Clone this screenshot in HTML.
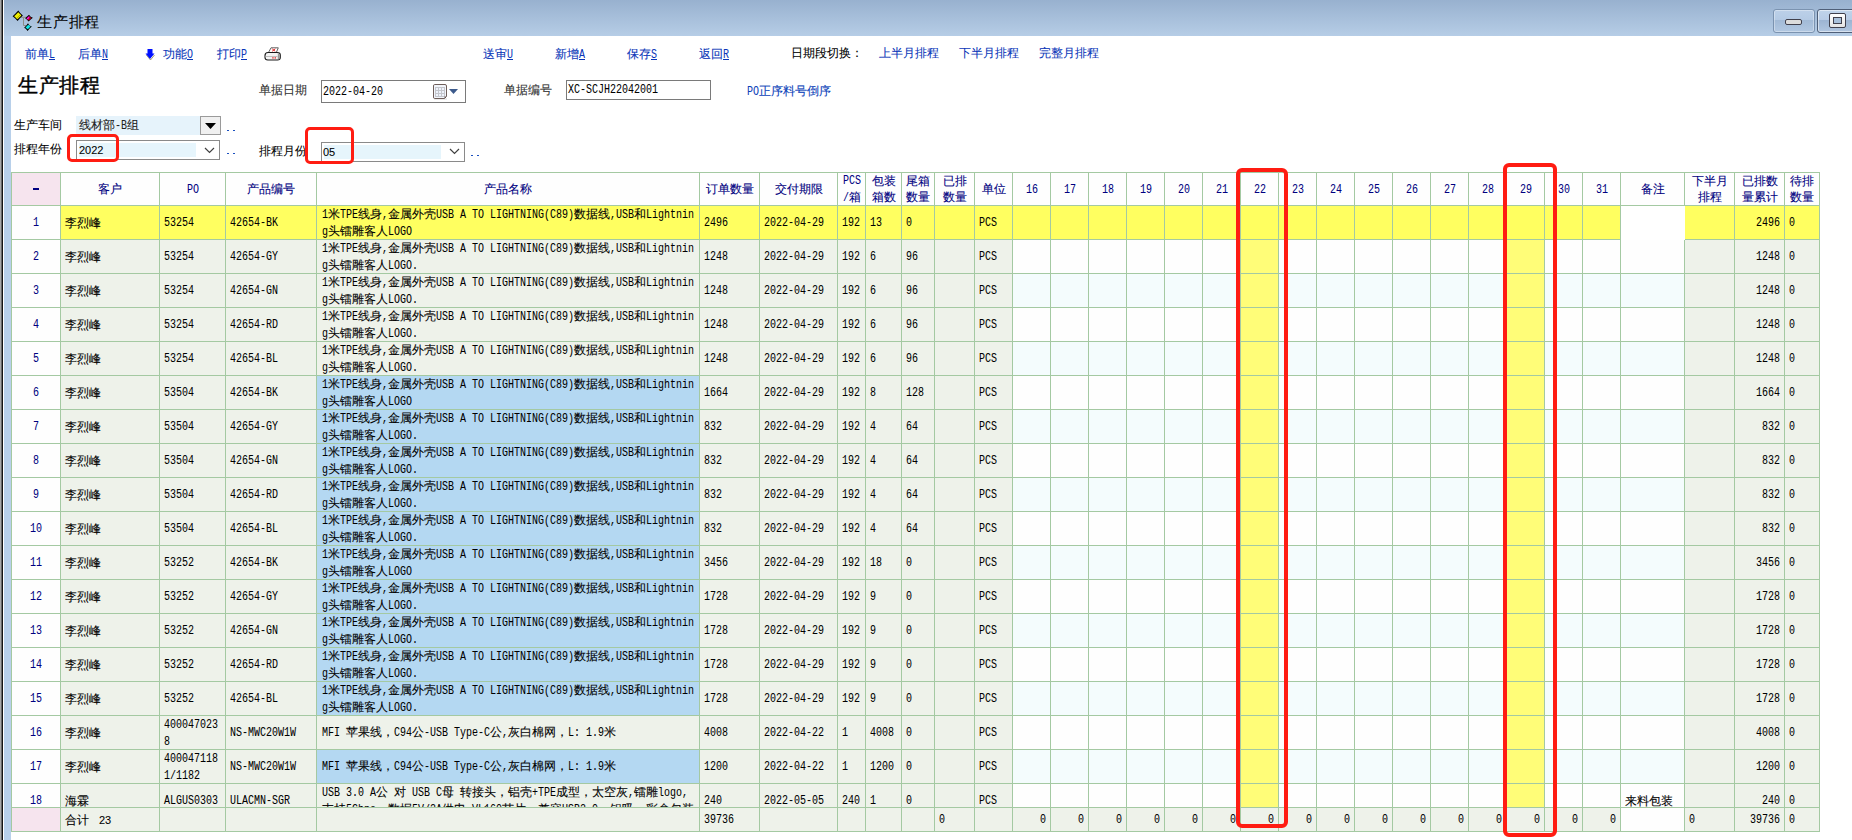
<!DOCTYPE html><html><head><meta charset="utf-8"><style>
*{margin:0;padding:0;box-sizing:border-box}
html,body{width:1852px;height:840px;overflow:hidden;background:#fff}
body{position:relative;font-family:"Liberation Sans",sans-serif;font-size:12px;color:#000}
.a{position:absolute}
i{font-style:normal}
i.n{font-family:"Liberation Mono",monospace;font-size:11px;letter-spacing:-0.6px}
u{text-decoration:none;font-size:12px}
b{font-weight:normal;display:inline-block;white-space:nowrap}
b>s{text-decoration:none;display:inline-block;font-family:"Liberation Mono",monospace;font-size:12px;transform:scaleX(0.8333);transform-origin:0 0;-webkit-text-stroke:0.05px currentColor}
i.ns{}
body{-webkit-text-stroke:0.08px currentColor}
u{-webkit-text-stroke:0.1px currentColor}
</style></head><body><div class="a" style="left:0;top:0;width:1px;height:840px;background:#a8a8a8"></div>
<div class="a" style="left:1px;top:0;width:1px;height:840px;background:#686868"></div>
<div class="a" style="left:2px;top:0;width:1px;height:840px;background:#141414"></div>
<div class="a" style="left:3px;top:0;width:1px;height:840px;background:#fff"></div>
<div class="a" style="left:4px;top:0;width:1848px;height:840px;background:#b8d0ea"></div>
<div class="a" style="left:4px;top:0;width:1848px;height:36px;background:linear-gradient(#98b1cf,#b6cde6)"></div>
<div class="a" style="left:11px;top:36px;width:1841px;height:804px;background:#fff"></div>
<svg class="a" style="left:10px;top:8px" width="26" height="26" viewBox="0 0 26 26">
<path d="M10.5 9.3 H17.3 M13.5 9.3 V17.5 H16" stroke="#8c8c88" stroke-width="1" fill="none"/>
<path d="M8.3 2.6 L10.2 5 L12.9 7.6 L10.2 10 L7.6 12.9 L5 10.2 L2.6 8.3 L5 6 Z" fill="#000"/>
<path d="M8.3 4.2 L11.3 7.5 L7.5 11.3 L4.2 8.3 Z" fill="#f0f000"/>
<path d="M6.5 10.5 L10.5 6.5" stroke="#a8a000" stroke-width="0.8"/>
<path d="M19 6.8 L20.7 8.7 L22.9 9.8 L20.7 11.5 L18.6 13.6 L16.8 11.6 L15.1 10.3 L17 8.6 Z" fill="#000"/>
<path d="M19 8.2 L21.3 10 L18.8 12.4 L16.5 10.4 Z" fill="#c00018"/>
<path d="M19 8.2 L16.5 10.4 L18 11.5 L19.6 8.8 Z" fill="#ff10ff"/>
<path d="M18 15.2 L19.4 17.6 L21.9 18.5 L19.6 20.4 L17.6 22.9 L15.8 20.7 L14.1 19.7 L16.3 17.6 Z" fill="#000"/>
<path d="M18.2 16.8 L20.6 18.6 L17.8 21.3 L15.5 19.6 Z" fill="#10e8e8"/>
</svg>
<div class="a" style="left:37px;top:13px;font-size:15px;letter-spacing:0.8px;line-height:18px;color:#000">生产排程</div>
<div class="a" style="left:1773px;top:9px;width:42px;height:24px;border:1px solid #7b93b0;border-radius:3px;background:linear-gradient(#bcd0e8 0,#b4cae4 45%,#a2bad6 46%,#b2c8e2 100%);box-shadow:inset 0 0 0 1px rgba(255,255,255,.35)"></div>
<div class="a" style="left:1785px;top:19px;width:17px;height:6px;border:1px solid #40404c;border-radius:2px;background:#dcdcdc"></div>
<div class="a" style="left:1817px;top:9px;width:40px;height:24px;border:1px solid #4f5f78;border-radius:3px;background:linear-gradient(#c0d4ea 0,#b8cce6 45%,#9cb4d2 46%,#b0c6e0 100%);box-shadow:inset 0 0 0 1px rgba(255,255,255,.5)"></div>
<div class="a" style="left:1829px;top:13px;width:17px;height:15px;border:1px solid #40404c;border-radius:2px;background:linear-gradient(#fff,#e4e4e4)"></div>
<div class="a" style="left:1833px;top:17px;width:9px;height:7px;border:1px solid #40404c;background:#a8c0da"></div>
<div class="a" style="left:25px;top:47px;line-height:14px;color:#0a36b8;white-space:nowrap"><u>前单</u><b style="width:6px"><s style="text-decoration:underline">L</s></b></div>
<div class="a" style="left:78px;top:47px;line-height:14px;color:#0a36b8;white-space:nowrap"><u>后单</u><b style="width:6px"><s style="text-decoration:underline">N</s></b></div>
<div class="a" style="left:163px;top:47px;line-height:14px;color:#0a36b8;white-space:nowrap"><u>功能</u><b style="width:6px"><s style="text-decoration:underline">O</s></b></div>
<div class="a" style="left:217px;top:47px;line-height:14px;color:#0a36b8;white-space:nowrap"><u>打印</u><b style="width:6px"><s style="text-decoration:underline">P</s></b></div>
<div class="a" style="left:483px;top:47px;line-height:14px;color:#0a36b8;white-space:nowrap"><u>送审</u><b style="width:6px"><s style="text-decoration:underline">U</s></b></div>
<div class="a" style="left:555px;top:47px;line-height:14px;color:#0a36b8;white-space:nowrap"><u>新增</u><b style="width:6px"><s style="text-decoration:underline">A</s></b></div>
<div class="a" style="left:627px;top:47px;line-height:14px;color:#0a36b8;white-space:nowrap"><u>保存</u><b style="width:6px"><s style="text-decoration:underline">S</s></b></div>
<div class="a" style="left:699px;top:47px;line-height:14px;color:#0a36b8;white-space:nowrap"><u>返回</u><b style="width:6px"><s style="text-decoration:underline">R</s></b></div>
<svg class="a" style="left:144px;top:48px" width="12" height="13" viewBox="0 0 12 13"><path d="M2.2 6.8 L6.5 12 L10.5 7" fill="none" stroke="#807840" stroke-width="1" opacity="0.7"/><path d="M3.5 1 H8.5 V5.5 H10.5 L6 11 L1.5 5.5 H3.5 Z" fill="#0010ff"/></svg>
<svg class="a" style="left:264px;top:47px" width="17" height="14" viewBox="0 0 17 14">
<path d="M4.5 5.5 L7 0.8 L14.3 0.8 L12.3 5.5 Z" fill="#fff" stroke="#505050" stroke-width="0.9"/>
<path d="M8.2 1.8 L11.2 4.3 M11.3 1.8 L8.1 4.3" stroke="#e01010" stroke-width="0.9"/>
<path d="M1 8.5 Q1 5.5 4 5.5 L13.5 5.5 Q16.3 5.5 16.3 8 L16.3 10.5 Q16.3 13 13.5 13 L3.8 13 Q1 13 1 10.5 Z" fill="#f4f4f4" stroke="#1a1a1a" stroke-width="1.1"/>
<path d="M13.8 6 Q15.8 6.5 15.8 8.5 V11 Q15.5 12.5 13.8 12.5 Z" fill="#9a9a9a"/>
<path d="M1.5 9.5 H13.5" stroke="#b0b0b0" stroke-width="0.8"/>
<rect x="8.3" y="10.3" width="1.3" height="1.2" fill="#e00000"/><rect x="10.6" y="10.3" width="1.3" height="1.2" fill="#e00000"/>
</svg>
<div class="a" style="left:791px;top:46px;line-height:14px;color:#000">日期段切换：</div>
<div class="a" style="left:879px;top:46px;line-height:14px;color:#0a36b8">上半月排程</div>
<div class="a" style="left:959px;top:46px;line-height:14px;color:#0a36b8">下半月排程</div>
<div class="a" style="left:1039px;top:46px;line-height:14px;color:#0a36b8">完整月排程</div>
<div class="a" style="left:18px;top:73px;font-size:20px;line-height:24px;letter-spacing:0.6px;font-weight:500;color:#000;font-family:'Liberation Serif',serif;-webkit-text-stroke:0.45px #000">生产排程</div>
<div class="a" style="left:259px;top:83px;line-height:14px;color:#303030">单据日期</div>
<div class="a" style="left:321px;top:80px;width:145px;height:23px;border:1px solid #7a7a7a;background:#fff"></div>
<div class="a" style="left:323px;top:84px;line-height:14px"><b style="width:60px"><s>2022-04-20</s></b></div>
<svg class="a" style="left:432px;top:84px" width="28" height="17" viewBox="0 0 28 17">
<rect x="2" y="14" width="13" height="2" fill="#000" opacity="0.08"/>
<path d="M2.5 0.5 H13 Q14.5 0.5 14.5 2 V12.5 L12.5 14.5 H2.5 Q1.5 14.5 1.5 13 V2 Q1.5 0.5 2.5 0.5 Z" fill="#f2f5fb" stroke="#6e5e5a" stroke-width="1"/>
<rect x="3" y="3" width="10" height="10" fill="#c4c6cc"/>
<path d="M4 4h2v2h-2z M7 4h2v2h-2z M10 4h2v2h-2z M4 7h2v2h-2z M7 7h2v2h-2z M10 7h2v2h-2z M4 10h2v2h-2z M7 10h2v2h-2z M10 10h2v2h-2z" fill="#eef2fb"/>
<path d="M12.5 14.5 L12.5 12.5 L14.5 12.5 Z" fill="#5a4a48"/>
<path d="M17 5 H26 L21.5 10 Z" fill="#3c5a8c"/>
</svg>
<div class="a" style="left:504px;top:83px;line-height:14px;color:#303030">单据编号</div>
<div class="a" style="left:566px;top:80px;width:145px;height:20px;border:1px solid #7a7a7a;background:#fff"></div>
<div class="a" style="left:568px;top:82px;line-height:14px"><b style="width:90px"><s>XC-SCJH22042001</s></b></div>
<div class="a" style="left:747px;top:84px;line-height:14px;color:#0a40b8"><b style="width:12px"><s>PO</s></b><u>正序料号倒序</u></div>
<div class="a" style="left:14px;top:118px;line-height:14px">生产车间</div>
<div class="a" style="left:76px;top:116px;width:124px;height:19px;background:#e6f3fb"></div>
<div class="a" style="left:79px;top:118px;line-height:14px;color:#202020"><u>线材部</u><b style="width:12px"><s>-B</s></b><u>组</u></div>
<div class="a" style="left:200px;top:116px;width:21px;height:19px;border:1px solid #9a9a9a;background:#f0f0f0"></div>
<svg class="a" style="left:205px;top:123px" width="11" height="6" viewBox="0 0 11 6"><path d="M0 0 H11 L5.5 6 Z" fill="#000"/></svg>
<div class="a" style="left:227px;top:130px;width:2px;height:1px;background:#1a50c0"></div><div class="a" style="left:233px;top:130px;width:2px;height:1px;background:#1a50c0"></div>
<div class="a" style="left:14px;top:142px;line-height:14px">排程年份</div>
<div class="a" style="left:76px;top:140px;width:144px;height:20px;border:1px solid #8a8a8a;background:#fff"></div>
<div class="a" style="left:79px;top:143px;width:117px;height:14px;background:#e6f5fc"></div>
<div class="a" style="left:79px;top:143px;line-height:14px;font-size:11px"><i class="ns">2022</i></div>
<svg class="a" style="left:204px;top:147px" width="11" height="7" viewBox="0 0 11 7"><path d="M1 1 L5.5 5.5 L10 1" fill="none" stroke="#404040" stroke-width="1.2"/></svg>
<div class="a" style="left:227px;top:153px;width:2px;height:1px;background:#1a50c0"></div><div class="a" style="left:233px;top:153px;width:2px;height:1px;background:#1a50c0"></div>
<div class="a" style="left:259px;top:144px;line-height:14px">排程月份</div>
<div class="a" style="left:321px;top:142px;width:144px;height:20px;border:1px solid #8a8a8a;background:#fff"></div>
<div class="a" style="left:324px;top:145px;width:117px;height:14px;background:#e6f5fc"></div>
<div class="a" style="left:323px;top:145px;line-height:14px;font-size:11px"><i class="ns">05</i></div>
<svg class="a" style="left:449px;top:148px" width="11" height="7" viewBox="0 0 11 7"><path d="M1 1 L5.5 5.5 L10 1" fill="none" stroke="#404040" stroke-width="1.2"/></svg>
<div class="a" style="left:471px;top:155px;width:2px;height:1px;background:#1a50c0"></div><div class="a" style="left:477px;top:155px;width:2px;height:1px;background:#1a50c0"></div>
<div class="a" style="left:11px;top:172px;width:1809px;height:660px;background:#a4c9a2"></div>
<div class="a" style="left:12px;top:173px;width:48px;height:32px;background:#f6e4ee;overflow:hidden"><div style="height:32px;display:flex;align-items:center;justify-content:center;color:#000080;line-height:16px;padding:0 4px;white-space:nowrap;padding:0"><div style="width:6px;height:2px;background:#000080;margin-top:0px"></div></div></div>
<div class="a" style="left:61px;top:173px;width:98px;height:32px;background:#fefefe;overflow:hidden"><div style="height:32px;display:flex;align-items:center;justify-content:center;color:#000080;line-height:16px;padding:0 4px;white-space:nowrap;padding:0"><u>客户</u></div></div>
<div class="a" style="left:160px;top:173px;width:65px;height:32px;background:#fefefe;overflow:hidden"><div style="height:32px;display:flex;align-items:center;justify-content:center;color:#000080;line-height:16px;padding:0 4px;white-space:nowrap;padding:0"><b style="width:12px"><s>PO</s></b></div></div>
<div class="a" style="left:226px;top:173px;width:90px;height:32px;background:#fefefe;overflow:hidden"><div style="height:32px;display:flex;align-items:center;justify-content:center;color:#000080;line-height:16px;padding:0 4px;white-space:nowrap;padding:0"><u>产品编号</u></div></div>
<div class="a" style="left:317px;top:173px;width:382px;height:32px;background:#fefefe;overflow:hidden"><div style="height:32px;display:flex;align-items:center;justify-content:center;color:#000080;line-height:16px;padding:0 4px;white-space:nowrap;padding:0"><u>产品名称</u></div></div>
<div class="a" style="left:700px;top:173px;width:59px;height:32px;background:#fefefe;overflow:hidden"><div style="height:32px;display:flex;align-items:center;justify-content:center;color:#000080;line-height:16px;padding:0 4px;white-space:nowrap;padding:0"><u>订单数量</u></div></div>
<div class="a" style="left:760px;top:173px;width:77px;height:32px;background:#fefefe;overflow:hidden"><div style="height:32px;display:flex;align-items:center;justify-content:center;color:#000080;line-height:16px;padding:0 4px;white-space:nowrap;padding:0"><u>交付期限</u></div></div>
<div class="a" style="left:838px;top:173px;width:27px;height:32px;background:#fefefe;overflow:hidden"><div style="height:32px;display:flex;align-items:center;justify-content:center;color:#000080;line-height:16px;padding:0 4px;white-space:nowrap;padding:0"><div style="text-align:center"><b style="width:18px"><s>PCS</s></b><br><b style="width:6px"><s>/</s></b><u>箱</u></div></div></div>
<div class="a" style="left:866px;top:173px;width:35px;height:32px;background:#fefefe;overflow:hidden"><div style="height:32px;display:flex;align-items:center;justify-content:center;color:#000080;line-height:16px;padding:0 4px;white-space:nowrap;padding:0"><div style="text-align:center"><u>包装</u><br><u>箱数</u></div></div></div>
<div class="a" style="left:902px;top:173px;width:32px;height:32px;background:#fefefe;overflow:hidden"><div style="height:32px;display:flex;align-items:center;justify-content:center;color:#000080;line-height:16px;padding:0 4px;white-space:nowrap;padding:0"><div style="text-align:center"><u>尾箱</u><br><u>数量</u></div></div></div>
<div class="a" style="left:935px;top:173px;width:39px;height:32px;background:#fefefe;overflow:hidden"><div style="height:32px;display:flex;align-items:center;justify-content:center;color:#000080;line-height:16px;padding:0 4px;white-space:nowrap;padding:0"><div style="text-align:center"><u>已排</u><br><u>数量</u></div></div></div>
<div class="a" style="left:975px;top:173px;width:37px;height:32px;background:#fefefe;overflow:hidden"><div style="height:32px;display:flex;align-items:center;justify-content:center;color:#000080;line-height:16px;padding:0 4px;white-space:nowrap;padding:0"><u>单位</u></div></div>
<div class="a" style="left:1013px;top:173px;width:37px;height:32px;background:#fefefe;overflow:hidden"><div style="height:32px;display:flex;align-items:center;justify-content:center;color:#000080;line-height:16px;padding:0 4px;white-space:nowrap;padding:0"><b style="width:12px"><s>16</s></b></div></div>
<div class="a" style="left:1051px;top:173px;width:37px;height:32px;background:#fefefe;overflow:hidden"><div style="height:32px;display:flex;align-items:center;justify-content:center;color:#000080;line-height:16px;padding:0 4px;white-space:nowrap;padding:0"><b style="width:12px"><s>17</s></b></div></div>
<div class="a" style="left:1089px;top:173px;width:37px;height:32px;background:#fefefe;overflow:hidden"><div style="height:32px;display:flex;align-items:center;justify-content:center;color:#000080;line-height:16px;padding:0 4px;white-space:nowrap;padding:0"><b style="width:12px"><s>18</s></b></div></div>
<div class="a" style="left:1127px;top:173px;width:37px;height:32px;background:#fefefe;overflow:hidden"><div style="height:32px;display:flex;align-items:center;justify-content:center;color:#000080;line-height:16px;padding:0 4px;white-space:nowrap;padding:0"><b style="width:12px"><s>19</s></b></div></div>
<div class="a" style="left:1165px;top:173px;width:37px;height:32px;background:#fefefe;overflow:hidden"><div style="height:32px;display:flex;align-items:center;justify-content:center;color:#000080;line-height:16px;padding:0 4px;white-space:nowrap;padding:0"><b style="width:12px"><s>20</s></b></div></div>
<div class="a" style="left:1203px;top:173px;width:37px;height:32px;background:#fefefe;overflow:hidden"><div style="height:32px;display:flex;align-items:center;justify-content:center;color:#000080;line-height:16px;padding:0 4px;white-space:nowrap;padding:0"><b style="width:12px"><s>21</s></b></div></div>
<div class="a" style="left:1241px;top:173px;width:37px;height:32px;background:#fefefe;overflow:hidden"><div style="height:32px;display:flex;align-items:center;justify-content:center;color:#000080;line-height:16px;padding:0 4px;white-space:nowrap;padding:0"><b style="width:12px"><s>22</s></b></div></div>
<div class="a" style="left:1279px;top:173px;width:37px;height:32px;background:#fefefe;overflow:hidden"><div style="height:32px;display:flex;align-items:center;justify-content:center;color:#000080;line-height:16px;padding:0 4px;white-space:nowrap;padding:0"><b style="width:12px"><s>23</s></b></div></div>
<div class="a" style="left:1317px;top:173px;width:37px;height:32px;background:#fefefe;overflow:hidden"><div style="height:32px;display:flex;align-items:center;justify-content:center;color:#000080;line-height:16px;padding:0 4px;white-space:nowrap;padding:0"><b style="width:12px"><s>24</s></b></div></div>
<div class="a" style="left:1355px;top:173px;width:37px;height:32px;background:#fefefe;overflow:hidden"><div style="height:32px;display:flex;align-items:center;justify-content:center;color:#000080;line-height:16px;padding:0 4px;white-space:nowrap;padding:0"><b style="width:12px"><s>25</s></b></div></div>
<div class="a" style="left:1393px;top:173px;width:37px;height:32px;background:#fefefe;overflow:hidden"><div style="height:32px;display:flex;align-items:center;justify-content:center;color:#000080;line-height:16px;padding:0 4px;white-space:nowrap;padding:0"><b style="width:12px"><s>26</s></b></div></div>
<div class="a" style="left:1431px;top:173px;width:37px;height:32px;background:#fefefe;overflow:hidden"><div style="height:32px;display:flex;align-items:center;justify-content:center;color:#000080;line-height:16px;padding:0 4px;white-space:nowrap;padding:0"><b style="width:12px"><s>27</s></b></div></div>
<div class="a" style="left:1469px;top:173px;width:37px;height:32px;background:#fefefe;overflow:hidden"><div style="height:32px;display:flex;align-items:center;justify-content:center;color:#000080;line-height:16px;padding:0 4px;white-space:nowrap;padding:0"><b style="width:12px"><s>28</s></b></div></div>
<div class="a" style="left:1507px;top:173px;width:37px;height:32px;background:#fefefe;overflow:hidden"><div style="height:32px;display:flex;align-items:center;justify-content:center;color:#000080;line-height:16px;padding:0 4px;white-space:nowrap;padding:0"><b style="width:12px"><s>29</s></b></div></div>
<div class="a" style="left:1545px;top:173px;width:37px;height:32px;background:#fefefe;overflow:hidden"><div style="height:32px;display:flex;align-items:center;justify-content:center;color:#000080;line-height:16px;padding:0 4px;white-space:nowrap;padding:0"><b style="width:12px"><s>30</s></b></div></div>
<div class="a" style="left:1583px;top:173px;width:37px;height:32px;background:#fefefe;overflow:hidden"><div style="height:32px;display:flex;align-items:center;justify-content:center;color:#000080;line-height:16px;padding:0 4px;white-space:nowrap;padding:0"><b style="width:12px"><s>31</s></b></div></div>
<div class="a" style="left:1621px;top:173px;width:63px;height:32px;background:#fefefe;overflow:hidden"><div style="height:32px;display:flex;align-items:center;justify-content:center;color:#000080;line-height:16px;padding:0 4px;white-space:nowrap;padding:0"><u>备注</u></div></div>
<div class="a" style="left:1685px;top:173px;width:49px;height:32px;background:#fefefe;overflow:hidden"><div style="height:32px;display:flex;align-items:center;justify-content:center;color:#000080;line-height:16px;padding:0 4px;white-space:nowrap;padding:0"><div style="text-align:center"><u>下半月</u><br><u>排程</u></div></div></div>
<div class="a" style="left:1735px;top:173px;width:49px;height:32px;background:#fefefe;overflow:hidden"><div style="height:32px;display:flex;align-items:center;justify-content:center;color:#000080;line-height:16px;padding:0 4px;white-space:nowrap;padding:0"><div style="text-align:center"><u>已排数</u><br><u>量累计</u></div></div></div>
<div class="a" style="left:1785px;top:173px;width:34px;height:32px;background:#fefefe;overflow:hidden"><div style="height:32px;display:flex;align-items:center;justify-content:center;color:#000080;line-height:16px;padding:0 4px;white-space:nowrap;padding:0"><div style="text-align:center"><u>待排</u><br><u>数量</u></div></div></div>
<div class="a" style="left:12px;top:206px;width:48px;height:33px;background:#fefefe;overflow:hidden"><div style="height:33px;display:flex;align-items:center;justify-content:center;color:#000080;line-height:16px;padding:0 4px;white-space:nowrap;"><b style="width:6px"><s>1</s></b></div></div>
<div class="a" style="left:61px;top:206px;width:98px;height:33px;background:#ffff60;overflow:hidden"><div style="height:33px;display:flex;align-items:center;justify-content:flex-start;color:#000;line-height:16px;padding:0 4px;white-space:nowrap;"><u>李烈峰</u></div></div>
<div class="a" style="left:160px;top:206px;width:65px;height:33px;background:#ffff60;overflow:hidden"><div style="height:33px;display:flex;align-items:center;justify-content:flex-start;color:#000;line-height:16px;padding:0 4px;white-space:nowrap;"><div><b style="width:30px"><s>53254</s></b></div></div></div>
<div class="a" style="left:226px;top:206px;width:90px;height:33px;background:#ffff60;overflow:hidden"><div style="height:33px;display:flex;align-items:center;justify-content:flex-start;color:#000;line-height:16px;padding:0 4px;white-space:nowrap;"><b style="width:48px"><s>42654-BK</s></b></div></div>
<div class="a" style="left:317px;top:206px;width:382px;height:33px;background:#ffff60;overflow:hidden"><div style="height:33px;display:flex;align-items:center;justify-content:flex-start;color:#000;line-height:16px;padding:0 4px;white-space:nowrap;padding-left:5px"><div><b style="width:6px"><s>1</s></b><u>米</u><b style="width:18px"><s>TPE</s></b><u>线身</u><b style="width:6px"><s>,</s></b><u>金属外壳</u><b style="width:138px"><s>USB&nbsp;A&nbsp;TO&nbsp;LIGHTNING(C89)</s></b><u>数据线</u><b style="width:24px"><s>,USB</s></b><u>和</u><b style="width:48px"><s>Lightnin</s></b><br><b style="width:6px"><s>g</s></b><u>头镭雕客人</u><b style="width:24px"><s>LOGO</s></b></div></div></div>
<div class="a" style="left:700px;top:206px;width:59px;height:33px;background:#ffff60;overflow:hidden"><div style="height:33px;display:flex;align-items:center;justify-content:flex-start;color:#000;line-height:16px;padding:0 4px;white-space:nowrap;"><b style="width:24px"><s>2496</s></b></div></div>
<div class="a" style="left:760px;top:206px;width:77px;height:33px;background:#ffff60;overflow:hidden"><div style="height:33px;display:flex;align-items:center;justify-content:flex-start;color:#000;line-height:16px;padding:0 4px;white-space:nowrap;"><b style="width:60px"><s>2022-04-29</s></b></div></div>
<div class="a" style="left:838px;top:206px;width:27px;height:33px;background:#ffff60;overflow:hidden"><div style="height:33px;display:flex;align-items:center;justify-content:flex-start;color:#000;line-height:16px;padding:0 4px;white-space:nowrap;"><b style="width:18px"><s>192</s></b></div></div>
<div class="a" style="left:866px;top:206px;width:35px;height:33px;background:#ffff60;overflow:hidden"><div style="height:33px;display:flex;align-items:center;justify-content:flex-start;color:#000;line-height:16px;padding:0 4px;white-space:nowrap;"><b style="width:12px"><s>13</s></b></div></div>
<div class="a" style="left:902px;top:206px;width:32px;height:33px;background:#ffff60;overflow:hidden"><div style="height:33px;display:flex;align-items:center;justify-content:flex-start;color:#000;line-height:16px;padding:0 4px;white-space:nowrap;"><b style="width:6px"><s>0</s></b></div></div>
<div class="a" style="left:935px;top:206px;width:39px;height:33px;background:#ffff60;overflow:hidden"><div style="height:33px;display:flex;align-items:center;justify-content:flex-start;color:#000;line-height:16px;padding:0 4px;white-space:nowrap;"></div></div>
<div class="a" style="left:975px;top:206px;width:37px;height:33px;background:#ffff60;overflow:hidden"><div style="height:33px;display:flex;align-items:center;justify-content:flex-start;color:#000;line-height:16px;padding:0 4px;white-space:nowrap;"><b style="width:18px"><s>PCS</s></b></div></div>
<div class="a" style="left:1013px;top:206px;width:37px;height:33px;background:#ffff60;overflow:hidden"><div style="height:33px;display:flex;align-items:center;justify-content:flex-start;color:#000;line-height:16px;padding:0 4px;white-space:nowrap;"></div></div>
<div class="a" style="left:1051px;top:206px;width:37px;height:33px;background:#ffff60;overflow:hidden"><div style="height:33px;display:flex;align-items:center;justify-content:flex-start;color:#000;line-height:16px;padding:0 4px;white-space:nowrap;"></div></div>
<div class="a" style="left:1089px;top:206px;width:37px;height:33px;background:#ffff60;overflow:hidden"><div style="height:33px;display:flex;align-items:center;justify-content:flex-start;color:#000;line-height:16px;padding:0 4px;white-space:nowrap;"></div></div>
<div class="a" style="left:1127px;top:206px;width:37px;height:33px;background:#ffff60;overflow:hidden"><div style="height:33px;display:flex;align-items:center;justify-content:flex-start;color:#000;line-height:16px;padding:0 4px;white-space:nowrap;"></div></div>
<div class="a" style="left:1165px;top:206px;width:37px;height:33px;background:#ffff60;overflow:hidden"><div style="height:33px;display:flex;align-items:center;justify-content:flex-start;color:#000;line-height:16px;padding:0 4px;white-space:nowrap;"></div></div>
<div class="a" style="left:1203px;top:206px;width:37px;height:33px;background:#ffff60;overflow:hidden"><div style="height:33px;display:flex;align-items:center;justify-content:flex-start;color:#000;line-height:16px;padding:0 4px;white-space:nowrap;"></div></div>
<div class="a" style="left:1241px;top:206px;width:37px;height:33px;background:#ffff60;overflow:hidden"><div style="height:33px;display:flex;align-items:center;justify-content:flex-start;color:#000;line-height:16px;padding:0 4px;white-space:nowrap;"></div></div>
<div class="a" style="left:1279px;top:206px;width:37px;height:33px;background:#ffff60;overflow:hidden"><div style="height:33px;display:flex;align-items:center;justify-content:flex-start;color:#000;line-height:16px;padding:0 4px;white-space:nowrap;"></div></div>
<div class="a" style="left:1317px;top:206px;width:37px;height:33px;background:#ffff60;overflow:hidden"><div style="height:33px;display:flex;align-items:center;justify-content:flex-start;color:#000;line-height:16px;padding:0 4px;white-space:nowrap;"></div></div>
<div class="a" style="left:1355px;top:206px;width:37px;height:33px;background:#ffff60;overflow:hidden"><div style="height:33px;display:flex;align-items:center;justify-content:flex-start;color:#000;line-height:16px;padding:0 4px;white-space:nowrap;"></div></div>
<div class="a" style="left:1393px;top:206px;width:37px;height:33px;background:#ffff60;overflow:hidden"><div style="height:33px;display:flex;align-items:center;justify-content:flex-start;color:#000;line-height:16px;padding:0 4px;white-space:nowrap;"></div></div>
<div class="a" style="left:1431px;top:206px;width:37px;height:33px;background:#ffff60;overflow:hidden"><div style="height:33px;display:flex;align-items:center;justify-content:flex-start;color:#000;line-height:16px;padding:0 4px;white-space:nowrap;"></div></div>
<div class="a" style="left:1469px;top:206px;width:37px;height:33px;background:#ffff60;overflow:hidden"><div style="height:33px;display:flex;align-items:center;justify-content:flex-start;color:#000;line-height:16px;padding:0 4px;white-space:nowrap;"></div></div>
<div class="a" style="left:1507px;top:206px;width:37px;height:33px;background:#ffff60;overflow:hidden"><div style="height:33px;display:flex;align-items:center;justify-content:flex-start;color:#000;line-height:16px;padding:0 4px;white-space:nowrap;"></div></div>
<div class="a" style="left:1545px;top:206px;width:37px;height:33px;background:#ffff60;overflow:hidden"><div style="height:33px;display:flex;align-items:center;justify-content:flex-start;color:#000;line-height:16px;padding:0 4px;white-space:nowrap;"></div></div>
<div class="a" style="left:1583px;top:206px;width:37px;height:33px;background:#ffff60;overflow:hidden"><div style="height:33px;display:flex;align-items:center;justify-content:flex-start;color:#000;line-height:16px;padding:0 4px;white-space:nowrap;"></div></div>
<div class="a" style="left:1621px;top:206px;width:64px;height:34px;background:#fff"></div>
<div class="a" style="left:1685px;top:206px;width:49px;height:33px;background:#ffff60;overflow:hidden"><div style="height:33px;display:flex;align-items:center;justify-content:flex-start;color:#000;line-height:16px;padding:0 4px;white-space:nowrap;"></div></div>
<div class="a" style="left:1735px;top:206px;width:49px;height:33px;background:#ffff60;overflow:hidden"><div style="height:33px;display:flex;align-items:center;justify-content:flex-end;color:#000;line-height:16px;padding:0 4px;white-space:nowrap;"><b style="width:24px"><s>2496</s></b></div></div>
<div class="a" style="left:1785px;top:206px;width:34px;height:33px;background:#ffff60;overflow:hidden"><div style="height:33px;display:flex;align-items:center;justify-content:flex-start;color:#000;line-height:16px;padding:0 4px;white-space:nowrap;"><b style="width:6px"><s>0</s></b></div></div>
<div class="a" style="left:12px;top:240px;width:48px;height:33px;background:#fefefe;overflow:hidden"><div style="height:33px;display:flex;align-items:center;justify-content:center;color:#000080;line-height:16px;padding:0 4px;white-space:nowrap;"><b style="width:6px"><s>2</s></b></div></div>
<div class="a" style="left:61px;top:240px;width:98px;height:33px;background:#eef2ea;overflow:hidden"><div style="height:33px;display:flex;align-items:center;justify-content:flex-start;color:#000;line-height:16px;padding:0 4px;white-space:nowrap;"><u>李烈峰</u></div></div>
<div class="a" style="left:160px;top:240px;width:65px;height:33px;background:#eef2ea;overflow:hidden"><div style="height:33px;display:flex;align-items:center;justify-content:flex-start;color:#000;line-height:16px;padding:0 4px;white-space:nowrap;"><div><b style="width:30px"><s>53254</s></b></div></div></div>
<div class="a" style="left:226px;top:240px;width:90px;height:33px;background:#eef2ea;overflow:hidden"><div style="height:33px;display:flex;align-items:center;justify-content:flex-start;color:#000;line-height:16px;padding:0 4px;white-space:nowrap;"><b style="width:48px"><s>42654-GY</s></b></div></div>
<div class="a" style="left:317px;top:240px;width:382px;height:33px;background:#eef2ea;overflow:hidden"><div style="height:33px;display:flex;align-items:center;justify-content:flex-start;color:#000;line-height:16px;padding:0 4px;white-space:nowrap;padding-left:5px"><div><b style="width:6px"><s>1</s></b><u>米</u><b style="width:18px"><s>TPE</s></b><u>线身</u><b style="width:6px"><s>,</s></b><u>金属外壳</u><b style="width:138px"><s>USB&nbsp;A&nbsp;TO&nbsp;LIGHTNING(C89)</s></b><u>数据线</u><b style="width:24px"><s>,USB</s></b><u>和</u><b style="width:48px"><s>Lightnin</s></b><br><b style="width:6px"><s>g</s></b><u>头镭雕客人</u><b style="width:30px"><s>LOGO.</s></b></div></div></div>
<div class="a" style="left:700px;top:240px;width:59px;height:33px;background:#eef2ea;overflow:hidden"><div style="height:33px;display:flex;align-items:center;justify-content:flex-start;color:#000;line-height:16px;padding:0 4px;white-space:nowrap;"><b style="width:24px"><s>1248</s></b></div></div>
<div class="a" style="left:760px;top:240px;width:77px;height:33px;background:#eef2ea;overflow:hidden"><div style="height:33px;display:flex;align-items:center;justify-content:flex-start;color:#000;line-height:16px;padding:0 4px;white-space:nowrap;"><b style="width:60px"><s>2022-04-29</s></b></div></div>
<div class="a" style="left:838px;top:240px;width:27px;height:33px;background:#eef2ea;overflow:hidden"><div style="height:33px;display:flex;align-items:center;justify-content:flex-start;color:#000;line-height:16px;padding:0 4px;white-space:nowrap;"><b style="width:18px"><s>192</s></b></div></div>
<div class="a" style="left:866px;top:240px;width:35px;height:33px;background:#eef2ea;overflow:hidden"><div style="height:33px;display:flex;align-items:center;justify-content:flex-start;color:#000;line-height:16px;padding:0 4px;white-space:nowrap;"><b style="width:6px"><s>6</s></b></div></div>
<div class="a" style="left:902px;top:240px;width:32px;height:33px;background:#eef2ea;overflow:hidden"><div style="height:33px;display:flex;align-items:center;justify-content:flex-start;color:#000;line-height:16px;padding:0 4px;white-space:nowrap;"><b style="width:12px"><s>96</s></b></div></div>
<div class="a" style="left:935px;top:240px;width:39px;height:33px;background:#eef2ea;overflow:hidden"><div style="height:33px;display:flex;align-items:center;justify-content:flex-start;color:#000;line-height:16px;padding:0 4px;white-space:nowrap;"></div></div>
<div class="a" style="left:975px;top:240px;width:37px;height:33px;background:#eef2ea;overflow:hidden"><div style="height:33px;display:flex;align-items:center;justify-content:flex-start;color:#000;line-height:16px;padding:0 4px;white-space:nowrap;"><b style="width:18px"><s>PCS</s></b></div></div>
<div class="a" style="left:1013px;top:240px;width:37px;height:33px;background:#fefefe;overflow:hidden"><div style="height:33px;display:flex;align-items:center;justify-content:flex-start;color:#000;line-height:16px;padding:0 4px;white-space:nowrap;"></div></div>
<div class="a" style="left:1051px;top:240px;width:37px;height:33px;background:#fefefe;overflow:hidden"><div style="height:33px;display:flex;align-items:center;justify-content:flex-start;color:#000;line-height:16px;padding:0 4px;white-space:nowrap;"></div></div>
<div class="a" style="left:1089px;top:240px;width:37px;height:33px;background:#fefefe;overflow:hidden"><div style="height:33px;display:flex;align-items:center;justify-content:flex-start;color:#000;line-height:16px;padding:0 4px;white-space:nowrap;"></div></div>
<div class="a" style="left:1127px;top:240px;width:37px;height:33px;background:#fefefe;overflow:hidden"><div style="height:33px;display:flex;align-items:center;justify-content:flex-start;color:#000;line-height:16px;padding:0 4px;white-space:nowrap;"></div></div>
<div class="a" style="left:1165px;top:240px;width:37px;height:33px;background:#fefefe;overflow:hidden"><div style="height:33px;display:flex;align-items:center;justify-content:flex-start;color:#000;line-height:16px;padding:0 4px;white-space:nowrap;"></div></div>
<div class="a" style="left:1203px;top:240px;width:37px;height:33px;background:#fefefe;overflow:hidden"><div style="height:33px;display:flex;align-items:center;justify-content:flex-start;color:#000;line-height:16px;padding:0 4px;white-space:nowrap;"></div></div>
<div class="a" style="left:1241px;top:240px;width:37px;height:33px;background:#fffd78;overflow:hidden"><div style="height:33px;display:flex;align-items:center;justify-content:flex-start;color:#000;line-height:16px;padding:0 4px;white-space:nowrap;"></div></div>
<div class="a" style="left:1279px;top:240px;width:37px;height:33px;background:#fefefe;overflow:hidden"><div style="height:33px;display:flex;align-items:center;justify-content:flex-start;color:#000;line-height:16px;padding:0 4px;white-space:nowrap;"></div></div>
<div class="a" style="left:1317px;top:240px;width:37px;height:33px;background:#fefefe;overflow:hidden"><div style="height:33px;display:flex;align-items:center;justify-content:flex-start;color:#000;line-height:16px;padding:0 4px;white-space:nowrap;"></div></div>
<div class="a" style="left:1355px;top:240px;width:37px;height:33px;background:#fefefe;overflow:hidden"><div style="height:33px;display:flex;align-items:center;justify-content:flex-start;color:#000;line-height:16px;padding:0 4px;white-space:nowrap;"></div></div>
<div class="a" style="left:1393px;top:240px;width:37px;height:33px;background:#fefefe;overflow:hidden"><div style="height:33px;display:flex;align-items:center;justify-content:flex-start;color:#000;line-height:16px;padding:0 4px;white-space:nowrap;"></div></div>
<div class="a" style="left:1431px;top:240px;width:37px;height:33px;background:#fefefe;overflow:hidden"><div style="height:33px;display:flex;align-items:center;justify-content:flex-start;color:#000;line-height:16px;padding:0 4px;white-space:nowrap;"></div></div>
<div class="a" style="left:1469px;top:240px;width:37px;height:33px;background:#fefefe;overflow:hidden"><div style="height:33px;display:flex;align-items:center;justify-content:flex-start;color:#000;line-height:16px;padding:0 4px;white-space:nowrap;"></div></div>
<div class="a" style="left:1507px;top:240px;width:37px;height:33px;background:#fffd78;overflow:hidden"><div style="height:33px;display:flex;align-items:center;justify-content:flex-start;color:#000;line-height:16px;padding:0 4px;white-space:nowrap;"></div></div>
<div class="a" style="left:1545px;top:240px;width:37px;height:33px;background:#fefefe;overflow:hidden"><div style="height:33px;display:flex;align-items:center;justify-content:flex-start;color:#000;line-height:16px;padding:0 4px;white-space:nowrap;"></div></div>
<div class="a" style="left:1583px;top:240px;width:37px;height:33px;background:#fefefe;overflow:hidden"><div style="height:33px;display:flex;align-items:center;justify-content:flex-start;color:#000;line-height:16px;padding:0 4px;white-space:nowrap;"></div></div>
<div class="a" style="left:1621px;top:240px;width:63px;height:33px;background:#fefefe;overflow:hidden"><div style="height:33px;display:flex;align-items:center;justify-content:flex-start;color:#000;line-height:16px;padding:0 4px;white-space:nowrap;"></div></div>
<div class="a" style="left:1685px;top:240px;width:49px;height:33px;background:#eef2ea;overflow:hidden"><div style="height:33px;display:flex;align-items:center;justify-content:flex-start;color:#000;line-height:16px;padding:0 4px;white-space:nowrap;"></div></div>
<div class="a" style="left:1735px;top:240px;width:49px;height:33px;background:#eef2ea;overflow:hidden"><div style="height:33px;display:flex;align-items:center;justify-content:flex-end;color:#000;line-height:16px;padding:0 4px;white-space:nowrap;"><b style="width:24px"><s>1248</s></b></div></div>
<div class="a" style="left:1785px;top:240px;width:34px;height:33px;background:#eef2ea;overflow:hidden"><div style="height:33px;display:flex;align-items:center;justify-content:flex-start;color:#000;line-height:16px;padding:0 4px;white-space:nowrap;"><b style="width:6px"><s>0</s></b></div></div>
<div class="a" style="left:12px;top:274px;width:48px;height:33px;background:#fefefe;overflow:hidden"><div style="height:33px;display:flex;align-items:center;justify-content:center;color:#000080;line-height:16px;padding:0 4px;white-space:nowrap;"><b style="width:6px"><s>3</s></b></div></div>
<div class="a" style="left:61px;top:274px;width:98px;height:33px;background:#eef2ea;overflow:hidden"><div style="height:33px;display:flex;align-items:center;justify-content:flex-start;color:#000;line-height:16px;padding:0 4px;white-space:nowrap;"><u>李烈峰</u></div></div>
<div class="a" style="left:160px;top:274px;width:65px;height:33px;background:#eef2ea;overflow:hidden"><div style="height:33px;display:flex;align-items:center;justify-content:flex-start;color:#000;line-height:16px;padding:0 4px;white-space:nowrap;"><div><b style="width:30px"><s>53254</s></b></div></div></div>
<div class="a" style="left:226px;top:274px;width:90px;height:33px;background:#eef2ea;overflow:hidden"><div style="height:33px;display:flex;align-items:center;justify-content:flex-start;color:#000;line-height:16px;padding:0 4px;white-space:nowrap;"><b style="width:48px"><s>42654-GN</s></b></div></div>
<div class="a" style="left:317px;top:274px;width:382px;height:33px;background:#eef2ea;overflow:hidden"><div style="height:33px;display:flex;align-items:center;justify-content:flex-start;color:#000;line-height:16px;padding:0 4px;white-space:nowrap;padding-left:5px"><div><b style="width:6px"><s>1</s></b><u>米</u><b style="width:18px"><s>TPE</s></b><u>线身</u><b style="width:6px"><s>,</s></b><u>金属外壳</u><b style="width:138px"><s>USB&nbsp;A&nbsp;TO&nbsp;LIGHTNING(C89)</s></b><u>数据线</u><b style="width:24px"><s>,USB</s></b><u>和</u><b style="width:48px"><s>Lightnin</s></b><br><b style="width:6px"><s>g</s></b><u>头镭雕客人</u><b style="width:30px"><s>LOGO.</s></b></div></div></div>
<div class="a" style="left:700px;top:274px;width:59px;height:33px;background:#eef2ea;overflow:hidden"><div style="height:33px;display:flex;align-items:center;justify-content:flex-start;color:#000;line-height:16px;padding:0 4px;white-space:nowrap;"><b style="width:24px"><s>1248</s></b></div></div>
<div class="a" style="left:760px;top:274px;width:77px;height:33px;background:#eef2ea;overflow:hidden"><div style="height:33px;display:flex;align-items:center;justify-content:flex-start;color:#000;line-height:16px;padding:0 4px;white-space:nowrap;"><b style="width:60px"><s>2022-04-29</s></b></div></div>
<div class="a" style="left:838px;top:274px;width:27px;height:33px;background:#eef2ea;overflow:hidden"><div style="height:33px;display:flex;align-items:center;justify-content:flex-start;color:#000;line-height:16px;padding:0 4px;white-space:nowrap;"><b style="width:18px"><s>192</s></b></div></div>
<div class="a" style="left:866px;top:274px;width:35px;height:33px;background:#eef2ea;overflow:hidden"><div style="height:33px;display:flex;align-items:center;justify-content:flex-start;color:#000;line-height:16px;padding:0 4px;white-space:nowrap;"><b style="width:6px"><s>6</s></b></div></div>
<div class="a" style="left:902px;top:274px;width:32px;height:33px;background:#eef2ea;overflow:hidden"><div style="height:33px;display:flex;align-items:center;justify-content:flex-start;color:#000;line-height:16px;padding:0 4px;white-space:nowrap;"><b style="width:12px"><s>96</s></b></div></div>
<div class="a" style="left:935px;top:274px;width:39px;height:33px;background:#eef2ea;overflow:hidden"><div style="height:33px;display:flex;align-items:center;justify-content:flex-start;color:#000;line-height:16px;padding:0 4px;white-space:nowrap;"></div></div>
<div class="a" style="left:975px;top:274px;width:37px;height:33px;background:#eef2ea;overflow:hidden"><div style="height:33px;display:flex;align-items:center;justify-content:flex-start;color:#000;line-height:16px;padding:0 4px;white-space:nowrap;"><b style="width:18px"><s>PCS</s></b></div></div>
<div class="a" style="left:1013px;top:274px;width:37px;height:33px;background:#f4fcfd;overflow:hidden"><div style="height:33px;display:flex;align-items:center;justify-content:flex-start;color:#000;line-height:16px;padding:0 4px;white-space:nowrap;"></div></div>
<div class="a" style="left:1051px;top:274px;width:37px;height:33px;background:#f4fcfd;overflow:hidden"><div style="height:33px;display:flex;align-items:center;justify-content:flex-start;color:#000;line-height:16px;padding:0 4px;white-space:nowrap;"></div></div>
<div class="a" style="left:1089px;top:274px;width:37px;height:33px;background:#f4fcfd;overflow:hidden"><div style="height:33px;display:flex;align-items:center;justify-content:flex-start;color:#000;line-height:16px;padding:0 4px;white-space:nowrap;"></div></div>
<div class="a" style="left:1127px;top:274px;width:37px;height:33px;background:#f4fcfd;overflow:hidden"><div style="height:33px;display:flex;align-items:center;justify-content:flex-start;color:#000;line-height:16px;padding:0 4px;white-space:nowrap;"></div></div>
<div class="a" style="left:1165px;top:274px;width:37px;height:33px;background:#f4fcfd;overflow:hidden"><div style="height:33px;display:flex;align-items:center;justify-content:flex-start;color:#000;line-height:16px;padding:0 4px;white-space:nowrap;"></div></div>
<div class="a" style="left:1203px;top:274px;width:37px;height:33px;background:#f4fcfd;overflow:hidden"><div style="height:33px;display:flex;align-items:center;justify-content:flex-start;color:#000;line-height:16px;padding:0 4px;white-space:nowrap;"></div></div>
<div class="a" style="left:1241px;top:274px;width:37px;height:33px;background:#fffd78;overflow:hidden"><div style="height:33px;display:flex;align-items:center;justify-content:flex-start;color:#000;line-height:16px;padding:0 4px;white-space:nowrap;"></div></div>
<div class="a" style="left:1279px;top:274px;width:37px;height:33px;background:#f4fcfd;overflow:hidden"><div style="height:33px;display:flex;align-items:center;justify-content:flex-start;color:#000;line-height:16px;padding:0 4px;white-space:nowrap;"></div></div>
<div class="a" style="left:1317px;top:274px;width:37px;height:33px;background:#f4fcfd;overflow:hidden"><div style="height:33px;display:flex;align-items:center;justify-content:flex-start;color:#000;line-height:16px;padding:0 4px;white-space:nowrap;"></div></div>
<div class="a" style="left:1355px;top:274px;width:37px;height:33px;background:#f4fcfd;overflow:hidden"><div style="height:33px;display:flex;align-items:center;justify-content:flex-start;color:#000;line-height:16px;padding:0 4px;white-space:nowrap;"></div></div>
<div class="a" style="left:1393px;top:274px;width:37px;height:33px;background:#f4fcfd;overflow:hidden"><div style="height:33px;display:flex;align-items:center;justify-content:flex-start;color:#000;line-height:16px;padding:0 4px;white-space:nowrap;"></div></div>
<div class="a" style="left:1431px;top:274px;width:37px;height:33px;background:#f4fcfd;overflow:hidden"><div style="height:33px;display:flex;align-items:center;justify-content:flex-start;color:#000;line-height:16px;padding:0 4px;white-space:nowrap;"></div></div>
<div class="a" style="left:1469px;top:274px;width:37px;height:33px;background:#f4fcfd;overflow:hidden"><div style="height:33px;display:flex;align-items:center;justify-content:flex-start;color:#000;line-height:16px;padding:0 4px;white-space:nowrap;"></div></div>
<div class="a" style="left:1507px;top:274px;width:37px;height:33px;background:#fffd78;overflow:hidden"><div style="height:33px;display:flex;align-items:center;justify-content:flex-start;color:#000;line-height:16px;padding:0 4px;white-space:nowrap;"></div></div>
<div class="a" style="left:1545px;top:274px;width:37px;height:33px;background:#f4fcfd;overflow:hidden"><div style="height:33px;display:flex;align-items:center;justify-content:flex-start;color:#000;line-height:16px;padding:0 4px;white-space:nowrap;"></div></div>
<div class="a" style="left:1583px;top:274px;width:37px;height:33px;background:#f4fcfd;overflow:hidden"><div style="height:33px;display:flex;align-items:center;justify-content:flex-start;color:#000;line-height:16px;padding:0 4px;white-space:nowrap;"></div></div>
<div class="a" style="left:1621px;top:274px;width:63px;height:33px;background:#f4fcfd;overflow:hidden"><div style="height:33px;display:flex;align-items:center;justify-content:flex-start;color:#000;line-height:16px;padding:0 4px;white-space:nowrap;"></div></div>
<div class="a" style="left:1685px;top:274px;width:49px;height:33px;background:#eef2ea;overflow:hidden"><div style="height:33px;display:flex;align-items:center;justify-content:flex-start;color:#000;line-height:16px;padding:0 4px;white-space:nowrap;"></div></div>
<div class="a" style="left:1735px;top:274px;width:49px;height:33px;background:#eef2ea;overflow:hidden"><div style="height:33px;display:flex;align-items:center;justify-content:flex-end;color:#000;line-height:16px;padding:0 4px;white-space:nowrap;"><b style="width:24px"><s>1248</s></b></div></div>
<div class="a" style="left:1785px;top:274px;width:34px;height:33px;background:#eef2ea;overflow:hidden"><div style="height:33px;display:flex;align-items:center;justify-content:flex-start;color:#000;line-height:16px;padding:0 4px;white-space:nowrap;"><b style="width:6px"><s>0</s></b></div></div>
<div class="a" style="left:12px;top:308px;width:48px;height:33px;background:#fefefe;overflow:hidden"><div style="height:33px;display:flex;align-items:center;justify-content:center;color:#000080;line-height:16px;padding:0 4px;white-space:nowrap;"><b style="width:6px"><s>4</s></b></div></div>
<div class="a" style="left:61px;top:308px;width:98px;height:33px;background:#eef2ea;overflow:hidden"><div style="height:33px;display:flex;align-items:center;justify-content:flex-start;color:#000;line-height:16px;padding:0 4px;white-space:nowrap;"><u>李烈峰</u></div></div>
<div class="a" style="left:160px;top:308px;width:65px;height:33px;background:#eef2ea;overflow:hidden"><div style="height:33px;display:flex;align-items:center;justify-content:flex-start;color:#000;line-height:16px;padding:0 4px;white-space:nowrap;"><div><b style="width:30px"><s>53254</s></b></div></div></div>
<div class="a" style="left:226px;top:308px;width:90px;height:33px;background:#eef2ea;overflow:hidden"><div style="height:33px;display:flex;align-items:center;justify-content:flex-start;color:#000;line-height:16px;padding:0 4px;white-space:nowrap;"><b style="width:48px"><s>42654-RD</s></b></div></div>
<div class="a" style="left:317px;top:308px;width:382px;height:33px;background:#eef2ea;overflow:hidden"><div style="height:33px;display:flex;align-items:center;justify-content:flex-start;color:#000;line-height:16px;padding:0 4px;white-space:nowrap;padding-left:5px"><div><b style="width:6px"><s>1</s></b><u>米</u><b style="width:18px"><s>TPE</s></b><u>线身</u><b style="width:6px"><s>,</s></b><u>金属外壳</u><b style="width:138px"><s>USB&nbsp;A&nbsp;TO&nbsp;LIGHTNING(C89)</s></b><u>数据线</u><b style="width:24px"><s>,USB</s></b><u>和</u><b style="width:48px"><s>Lightnin</s></b><br><b style="width:6px"><s>g</s></b><u>头镭雕客人</u><b style="width:30px"><s>LOGO.</s></b></div></div></div>
<div class="a" style="left:700px;top:308px;width:59px;height:33px;background:#eef2ea;overflow:hidden"><div style="height:33px;display:flex;align-items:center;justify-content:flex-start;color:#000;line-height:16px;padding:0 4px;white-space:nowrap;"><b style="width:24px"><s>1248</s></b></div></div>
<div class="a" style="left:760px;top:308px;width:77px;height:33px;background:#eef2ea;overflow:hidden"><div style="height:33px;display:flex;align-items:center;justify-content:flex-start;color:#000;line-height:16px;padding:0 4px;white-space:nowrap;"><b style="width:60px"><s>2022-04-29</s></b></div></div>
<div class="a" style="left:838px;top:308px;width:27px;height:33px;background:#eef2ea;overflow:hidden"><div style="height:33px;display:flex;align-items:center;justify-content:flex-start;color:#000;line-height:16px;padding:0 4px;white-space:nowrap;"><b style="width:18px"><s>192</s></b></div></div>
<div class="a" style="left:866px;top:308px;width:35px;height:33px;background:#eef2ea;overflow:hidden"><div style="height:33px;display:flex;align-items:center;justify-content:flex-start;color:#000;line-height:16px;padding:0 4px;white-space:nowrap;"><b style="width:6px"><s>6</s></b></div></div>
<div class="a" style="left:902px;top:308px;width:32px;height:33px;background:#eef2ea;overflow:hidden"><div style="height:33px;display:flex;align-items:center;justify-content:flex-start;color:#000;line-height:16px;padding:0 4px;white-space:nowrap;"><b style="width:12px"><s>96</s></b></div></div>
<div class="a" style="left:935px;top:308px;width:39px;height:33px;background:#eef2ea;overflow:hidden"><div style="height:33px;display:flex;align-items:center;justify-content:flex-start;color:#000;line-height:16px;padding:0 4px;white-space:nowrap;"></div></div>
<div class="a" style="left:975px;top:308px;width:37px;height:33px;background:#eef2ea;overflow:hidden"><div style="height:33px;display:flex;align-items:center;justify-content:flex-start;color:#000;line-height:16px;padding:0 4px;white-space:nowrap;"><b style="width:18px"><s>PCS</s></b></div></div>
<div class="a" style="left:1013px;top:308px;width:37px;height:33px;background:#fefefe;overflow:hidden"><div style="height:33px;display:flex;align-items:center;justify-content:flex-start;color:#000;line-height:16px;padding:0 4px;white-space:nowrap;"></div></div>
<div class="a" style="left:1051px;top:308px;width:37px;height:33px;background:#fefefe;overflow:hidden"><div style="height:33px;display:flex;align-items:center;justify-content:flex-start;color:#000;line-height:16px;padding:0 4px;white-space:nowrap;"></div></div>
<div class="a" style="left:1089px;top:308px;width:37px;height:33px;background:#fefefe;overflow:hidden"><div style="height:33px;display:flex;align-items:center;justify-content:flex-start;color:#000;line-height:16px;padding:0 4px;white-space:nowrap;"></div></div>
<div class="a" style="left:1127px;top:308px;width:37px;height:33px;background:#fefefe;overflow:hidden"><div style="height:33px;display:flex;align-items:center;justify-content:flex-start;color:#000;line-height:16px;padding:0 4px;white-space:nowrap;"></div></div>
<div class="a" style="left:1165px;top:308px;width:37px;height:33px;background:#fefefe;overflow:hidden"><div style="height:33px;display:flex;align-items:center;justify-content:flex-start;color:#000;line-height:16px;padding:0 4px;white-space:nowrap;"></div></div>
<div class="a" style="left:1203px;top:308px;width:37px;height:33px;background:#fefefe;overflow:hidden"><div style="height:33px;display:flex;align-items:center;justify-content:flex-start;color:#000;line-height:16px;padding:0 4px;white-space:nowrap;"></div></div>
<div class="a" style="left:1241px;top:308px;width:37px;height:33px;background:#fffd78;overflow:hidden"><div style="height:33px;display:flex;align-items:center;justify-content:flex-start;color:#000;line-height:16px;padding:0 4px;white-space:nowrap;"></div></div>
<div class="a" style="left:1279px;top:308px;width:37px;height:33px;background:#fefefe;overflow:hidden"><div style="height:33px;display:flex;align-items:center;justify-content:flex-start;color:#000;line-height:16px;padding:0 4px;white-space:nowrap;"></div></div>
<div class="a" style="left:1317px;top:308px;width:37px;height:33px;background:#fefefe;overflow:hidden"><div style="height:33px;display:flex;align-items:center;justify-content:flex-start;color:#000;line-height:16px;padding:0 4px;white-space:nowrap;"></div></div>
<div class="a" style="left:1355px;top:308px;width:37px;height:33px;background:#fefefe;overflow:hidden"><div style="height:33px;display:flex;align-items:center;justify-content:flex-start;color:#000;line-height:16px;padding:0 4px;white-space:nowrap;"></div></div>
<div class="a" style="left:1393px;top:308px;width:37px;height:33px;background:#fefefe;overflow:hidden"><div style="height:33px;display:flex;align-items:center;justify-content:flex-start;color:#000;line-height:16px;padding:0 4px;white-space:nowrap;"></div></div>
<div class="a" style="left:1431px;top:308px;width:37px;height:33px;background:#fefefe;overflow:hidden"><div style="height:33px;display:flex;align-items:center;justify-content:flex-start;color:#000;line-height:16px;padding:0 4px;white-space:nowrap;"></div></div>
<div class="a" style="left:1469px;top:308px;width:37px;height:33px;background:#fefefe;overflow:hidden"><div style="height:33px;display:flex;align-items:center;justify-content:flex-start;color:#000;line-height:16px;padding:0 4px;white-space:nowrap;"></div></div>
<div class="a" style="left:1507px;top:308px;width:37px;height:33px;background:#fffd78;overflow:hidden"><div style="height:33px;display:flex;align-items:center;justify-content:flex-start;color:#000;line-height:16px;padding:0 4px;white-space:nowrap;"></div></div>
<div class="a" style="left:1545px;top:308px;width:37px;height:33px;background:#fefefe;overflow:hidden"><div style="height:33px;display:flex;align-items:center;justify-content:flex-start;color:#000;line-height:16px;padding:0 4px;white-space:nowrap;"></div></div>
<div class="a" style="left:1583px;top:308px;width:37px;height:33px;background:#fefefe;overflow:hidden"><div style="height:33px;display:flex;align-items:center;justify-content:flex-start;color:#000;line-height:16px;padding:0 4px;white-space:nowrap;"></div></div>
<div class="a" style="left:1621px;top:308px;width:63px;height:33px;background:#fefefe;overflow:hidden"><div style="height:33px;display:flex;align-items:center;justify-content:flex-start;color:#000;line-height:16px;padding:0 4px;white-space:nowrap;"></div></div>
<div class="a" style="left:1685px;top:308px;width:49px;height:33px;background:#eef2ea;overflow:hidden"><div style="height:33px;display:flex;align-items:center;justify-content:flex-start;color:#000;line-height:16px;padding:0 4px;white-space:nowrap;"></div></div>
<div class="a" style="left:1735px;top:308px;width:49px;height:33px;background:#eef2ea;overflow:hidden"><div style="height:33px;display:flex;align-items:center;justify-content:flex-end;color:#000;line-height:16px;padding:0 4px;white-space:nowrap;"><b style="width:24px"><s>1248</s></b></div></div>
<div class="a" style="left:1785px;top:308px;width:34px;height:33px;background:#eef2ea;overflow:hidden"><div style="height:33px;display:flex;align-items:center;justify-content:flex-start;color:#000;line-height:16px;padding:0 4px;white-space:nowrap;"><b style="width:6px"><s>0</s></b></div></div>
<div class="a" style="left:12px;top:342px;width:48px;height:33px;background:#fefefe;overflow:hidden"><div style="height:33px;display:flex;align-items:center;justify-content:center;color:#000080;line-height:16px;padding:0 4px;white-space:nowrap;"><b style="width:6px"><s>5</s></b></div></div>
<div class="a" style="left:61px;top:342px;width:98px;height:33px;background:#eef2ea;overflow:hidden"><div style="height:33px;display:flex;align-items:center;justify-content:flex-start;color:#000;line-height:16px;padding:0 4px;white-space:nowrap;"><u>李烈峰</u></div></div>
<div class="a" style="left:160px;top:342px;width:65px;height:33px;background:#eef2ea;overflow:hidden"><div style="height:33px;display:flex;align-items:center;justify-content:flex-start;color:#000;line-height:16px;padding:0 4px;white-space:nowrap;"><div><b style="width:30px"><s>53254</s></b></div></div></div>
<div class="a" style="left:226px;top:342px;width:90px;height:33px;background:#eef2ea;overflow:hidden"><div style="height:33px;display:flex;align-items:center;justify-content:flex-start;color:#000;line-height:16px;padding:0 4px;white-space:nowrap;"><b style="width:48px"><s>42654-BL</s></b></div></div>
<div class="a" style="left:317px;top:342px;width:382px;height:33px;background:#eef2ea;overflow:hidden"><div style="height:33px;display:flex;align-items:center;justify-content:flex-start;color:#000;line-height:16px;padding:0 4px;white-space:nowrap;padding-left:5px"><div><b style="width:6px"><s>1</s></b><u>米</u><b style="width:18px"><s>TPE</s></b><u>线身</u><b style="width:6px"><s>,</s></b><u>金属外壳</u><b style="width:138px"><s>USB&nbsp;A&nbsp;TO&nbsp;LIGHTNING(C89)</s></b><u>数据线</u><b style="width:24px"><s>,USB</s></b><u>和</u><b style="width:48px"><s>Lightnin</s></b><br><b style="width:6px"><s>g</s></b><u>头镭雕客人</u><b style="width:30px"><s>LOGO.</s></b></div></div></div>
<div class="a" style="left:700px;top:342px;width:59px;height:33px;background:#eef2ea;overflow:hidden"><div style="height:33px;display:flex;align-items:center;justify-content:flex-start;color:#000;line-height:16px;padding:0 4px;white-space:nowrap;"><b style="width:24px"><s>1248</s></b></div></div>
<div class="a" style="left:760px;top:342px;width:77px;height:33px;background:#eef2ea;overflow:hidden"><div style="height:33px;display:flex;align-items:center;justify-content:flex-start;color:#000;line-height:16px;padding:0 4px;white-space:nowrap;"><b style="width:60px"><s>2022-04-29</s></b></div></div>
<div class="a" style="left:838px;top:342px;width:27px;height:33px;background:#eef2ea;overflow:hidden"><div style="height:33px;display:flex;align-items:center;justify-content:flex-start;color:#000;line-height:16px;padding:0 4px;white-space:nowrap;"><b style="width:18px"><s>192</s></b></div></div>
<div class="a" style="left:866px;top:342px;width:35px;height:33px;background:#eef2ea;overflow:hidden"><div style="height:33px;display:flex;align-items:center;justify-content:flex-start;color:#000;line-height:16px;padding:0 4px;white-space:nowrap;"><b style="width:6px"><s>6</s></b></div></div>
<div class="a" style="left:902px;top:342px;width:32px;height:33px;background:#eef2ea;overflow:hidden"><div style="height:33px;display:flex;align-items:center;justify-content:flex-start;color:#000;line-height:16px;padding:0 4px;white-space:nowrap;"><b style="width:12px"><s>96</s></b></div></div>
<div class="a" style="left:935px;top:342px;width:39px;height:33px;background:#eef2ea;overflow:hidden"><div style="height:33px;display:flex;align-items:center;justify-content:flex-start;color:#000;line-height:16px;padding:0 4px;white-space:nowrap;"></div></div>
<div class="a" style="left:975px;top:342px;width:37px;height:33px;background:#eef2ea;overflow:hidden"><div style="height:33px;display:flex;align-items:center;justify-content:flex-start;color:#000;line-height:16px;padding:0 4px;white-space:nowrap;"><b style="width:18px"><s>PCS</s></b></div></div>
<div class="a" style="left:1013px;top:342px;width:37px;height:33px;background:#f4fcfd;overflow:hidden"><div style="height:33px;display:flex;align-items:center;justify-content:flex-start;color:#000;line-height:16px;padding:0 4px;white-space:nowrap;"></div></div>
<div class="a" style="left:1051px;top:342px;width:37px;height:33px;background:#f4fcfd;overflow:hidden"><div style="height:33px;display:flex;align-items:center;justify-content:flex-start;color:#000;line-height:16px;padding:0 4px;white-space:nowrap;"></div></div>
<div class="a" style="left:1089px;top:342px;width:37px;height:33px;background:#f4fcfd;overflow:hidden"><div style="height:33px;display:flex;align-items:center;justify-content:flex-start;color:#000;line-height:16px;padding:0 4px;white-space:nowrap;"></div></div>
<div class="a" style="left:1127px;top:342px;width:37px;height:33px;background:#f4fcfd;overflow:hidden"><div style="height:33px;display:flex;align-items:center;justify-content:flex-start;color:#000;line-height:16px;padding:0 4px;white-space:nowrap;"></div></div>
<div class="a" style="left:1165px;top:342px;width:37px;height:33px;background:#f4fcfd;overflow:hidden"><div style="height:33px;display:flex;align-items:center;justify-content:flex-start;color:#000;line-height:16px;padding:0 4px;white-space:nowrap;"></div></div>
<div class="a" style="left:1203px;top:342px;width:37px;height:33px;background:#f4fcfd;overflow:hidden"><div style="height:33px;display:flex;align-items:center;justify-content:flex-start;color:#000;line-height:16px;padding:0 4px;white-space:nowrap;"></div></div>
<div class="a" style="left:1241px;top:342px;width:37px;height:33px;background:#fffd78;overflow:hidden"><div style="height:33px;display:flex;align-items:center;justify-content:flex-start;color:#000;line-height:16px;padding:0 4px;white-space:nowrap;"></div></div>
<div class="a" style="left:1279px;top:342px;width:37px;height:33px;background:#f4fcfd;overflow:hidden"><div style="height:33px;display:flex;align-items:center;justify-content:flex-start;color:#000;line-height:16px;padding:0 4px;white-space:nowrap;"></div></div>
<div class="a" style="left:1317px;top:342px;width:37px;height:33px;background:#f4fcfd;overflow:hidden"><div style="height:33px;display:flex;align-items:center;justify-content:flex-start;color:#000;line-height:16px;padding:0 4px;white-space:nowrap;"></div></div>
<div class="a" style="left:1355px;top:342px;width:37px;height:33px;background:#f4fcfd;overflow:hidden"><div style="height:33px;display:flex;align-items:center;justify-content:flex-start;color:#000;line-height:16px;padding:0 4px;white-space:nowrap;"></div></div>
<div class="a" style="left:1393px;top:342px;width:37px;height:33px;background:#f4fcfd;overflow:hidden"><div style="height:33px;display:flex;align-items:center;justify-content:flex-start;color:#000;line-height:16px;padding:0 4px;white-space:nowrap;"></div></div>
<div class="a" style="left:1431px;top:342px;width:37px;height:33px;background:#f4fcfd;overflow:hidden"><div style="height:33px;display:flex;align-items:center;justify-content:flex-start;color:#000;line-height:16px;padding:0 4px;white-space:nowrap;"></div></div>
<div class="a" style="left:1469px;top:342px;width:37px;height:33px;background:#f4fcfd;overflow:hidden"><div style="height:33px;display:flex;align-items:center;justify-content:flex-start;color:#000;line-height:16px;padding:0 4px;white-space:nowrap;"></div></div>
<div class="a" style="left:1507px;top:342px;width:37px;height:33px;background:#fffd78;overflow:hidden"><div style="height:33px;display:flex;align-items:center;justify-content:flex-start;color:#000;line-height:16px;padding:0 4px;white-space:nowrap;"></div></div>
<div class="a" style="left:1545px;top:342px;width:37px;height:33px;background:#f4fcfd;overflow:hidden"><div style="height:33px;display:flex;align-items:center;justify-content:flex-start;color:#000;line-height:16px;padding:0 4px;white-space:nowrap;"></div></div>
<div class="a" style="left:1583px;top:342px;width:37px;height:33px;background:#f4fcfd;overflow:hidden"><div style="height:33px;display:flex;align-items:center;justify-content:flex-start;color:#000;line-height:16px;padding:0 4px;white-space:nowrap;"></div></div>
<div class="a" style="left:1621px;top:342px;width:63px;height:33px;background:#f4fcfd;overflow:hidden"><div style="height:33px;display:flex;align-items:center;justify-content:flex-start;color:#000;line-height:16px;padding:0 4px;white-space:nowrap;"></div></div>
<div class="a" style="left:1685px;top:342px;width:49px;height:33px;background:#eef2ea;overflow:hidden"><div style="height:33px;display:flex;align-items:center;justify-content:flex-start;color:#000;line-height:16px;padding:0 4px;white-space:nowrap;"></div></div>
<div class="a" style="left:1735px;top:342px;width:49px;height:33px;background:#eef2ea;overflow:hidden"><div style="height:33px;display:flex;align-items:center;justify-content:flex-end;color:#000;line-height:16px;padding:0 4px;white-space:nowrap;"><b style="width:24px"><s>1248</s></b></div></div>
<div class="a" style="left:1785px;top:342px;width:34px;height:33px;background:#eef2ea;overflow:hidden"><div style="height:33px;display:flex;align-items:center;justify-content:flex-start;color:#000;line-height:16px;padding:0 4px;white-space:nowrap;"><b style="width:6px"><s>0</s></b></div></div>
<div class="a" style="left:12px;top:376px;width:48px;height:33px;background:#fefefe;overflow:hidden"><div style="height:33px;display:flex;align-items:center;justify-content:center;color:#000080;line-height:16px;padding:0 4px;white-space:nowrap;"><b style="width:6px"><s>6</s></b></div></div>
<div class="a" style="left:61px;top:376px;width:98px;height:33px;background:#eef2ea;overflow:hidden"><div style="height:33px;display:flex;align-items:center;justify-content:flex-start;color:#000;line-height:16px;padding:0 4px;white-space:nowrap;"><u>李烈峰</u></div></div>
<div class="a" style="left:160px;top:376px;width:65px;height:33px;background:#eef2ea;overflow:hidden"><div style="height:33px;display:flex;align-items:center;justify-content:flex-start;color:#000;line-height:16px;padding:0 4px;white-space:nowrap;"><div><b style="width:30px"><s>53504</s></b></div></div></div>
<div class="a" style="left:226px;top:376px;width:90px;height:33px;background:#eef2ea;overflow:hidden"><div style="height:33px;display:flex;align-items:center;justify-content:flex-start;color:#000;line-height:16px;padding:0 4px;white-space:nowrap;"><b style="width:48px"><s>42654-BK</s></b></div></div>
<div class="a" style="left:317px;top:376px;width:382px;height:33px;background:#b4d8f2;overflow:hidden"><div style="height:33px;display:flex;align-items:center;justify-content:flex-start;color:#000;line-height:16px;padding:0 4px;white-space:nowrap;padding-left:5px"><div><b style="width:6px"><s>1</s></b><u>米</u><b style="width:18px"><s>TPE</s></b><u>线身</u><b style="width:6px"><s>,</s></b><u>金属外壳</u><b style="width:138px"><s>USB&nbsp;A&nbsp;TO&nbsp;LIGHTNING(C89)</s></b><u>数据线</u><b style="width:24px"><s>,USB</s></b><u>和</u><b style="width:48px"><s>Lightnin</s></b><br><b style="width:6px"><s>g</s></b><u>头镭雕客人</u><b style="width:24px"><s>LOGO</s></b></div></div></div>
<div class="a" style="left:700px;top:376px;width:59px;height:33px;background:#eef2ea;overflow:hidden"><div style="height:33px;display:flex;align-items:center;justify-content:flex-start;color:#000;line-height:16px;padding:0 4px;white-space:nowrap;"><b style="width:24px"><s>1664</s></b></div></div>
<div class="a" style="left:760px;top:376px;width:77px;height:33px;background:#eef2ea;overflow:hidden"><div style="height:33px;display:flex;align-items:center;justify-content:flex-start;color:#000;line-height:16px;padding:0 4px;white-space:nowrap;"><b style="width:60px"><s>2022-04-29</s></b></div></div>
<div class="a" style="left:838px;top:376px;width:27px;height:33px;background:#eef2ea;overflow:hidden"><div style="height:33px;display:flex;align-items:center;justify-content:flex-start;color:#000;line-height:16px;padding:0 4px;white-space:nowrap;"><b style="width:18px"><s>192</s></b></div></div>
<div class="a" style="left:866px;top:376px;width:35px;height:33px;background:#eef2ea;overflow:hidden"><div style="height:33px;display:flex;align-items:center;justify-content:flex-start;color:#000;line-height:16px;padding:0 4px;white-space:nowrap;"><b style="width:6px"><s>8</s></b></div></div>
<div class="a" style="left:902px;top:376px;width:32px;height:33px;background:#eef2ea;overflow:hidden"><div style="height:33px;display:flex;align-items:center;justify-content:flex-start;color:#000;line-height:16px;padding:0 4px;white-space:nowrap;"><b style="width:18px"><s>128</s></b></div></div>
<div class="a" style="left:935px;top:376px;width:39px;height:33px;background:#eef2ea;overflow:hidden"><div style="height:33px;display:flex;align-items:center;justify-content:flex-start;color:#000;line-height:16px;padding:0 4px;white-space:nowrap;"></div></div>
<div class="a" style="left:975px;top:376px;width:37px;height:33px;background:#eef2ea;overflow:hidden"><div style="height:33px;display:flex;align-items:center;justify-content:flex-start;color:#000;line-height:16px;padding:0 4px;white-space:nowrap;"><b style="width:18px"><s>PCS</s></b></div></div>
<div class="a" style="left:1013px;top:376px;width:37px;height:33px;background:#fefefe;overflow:hidden"><div style="height:33px;display:flex;align-items:center;justify-content:flex-start;color:#000;line-height:16px;padding:0 4px;white-space:nowrap;"></div></div>
<div class="a" style="left:1051px;top:376px;width:37px;height:33px;background:#fefefe;overflow:hidden"><div style="height:33px;display:flex;align-items:center;justify-content:flex-start;color:#000;line-height:16px;padding:0 4px;white-space:nowrap;"></div></div>
<div class="a" style="left:1089px;top:376px;width:37px;height:33px;background:#fefefe;overflow:hidden"><div style="height:33px;display:flex;align-items:center;justify-content:flex-start;color:#000;line-height:16px;padding:0 4px;white-space:nowrap;"></div></div>
<div class="a" style="left:1127px;top:376px;width:37px;height:33px;background:#fefefe;overflow:hidden"><div style="height:33px;display:flex;align-items:center;justify-content:flex-start;color:#000;line-height:16px;padding:0 4px;white-space:nowrap;"></div></div>
<div class="a" style="left:1165px;top:376px;width:37px;height:33px;background:#fefefe;overflow:hidden"><div style="height:33px;display:flex;align-items:center;justify-content:flex-start;color:#000;line-height:16px;padding:0 4px;white-space:nowrap;"></div></div>
<div class="a" style="left:1203px;top:376px;width:37px;height:33px;background:#fefefe;overflow:hidden"><div style="height:33px;display:flex;align-items:center;justify-content:flex-start;color:#000;line-height:16px;padding:0 4px;white-space:nowrap;"></div></div>
<div class="a" style="left:1241px;top:376px;width:37px;height:33px;background:#fffd78;overflow:hidden"><div style="height:33px;display:flex;align-items:center;justify-content:flex-start;color:#000;line-height:16px;padding:0 4px;white-space:nowrap;"></div></div>
<div class="a" style="left:1279px;top:376px;width:37px;height:33px;background:#fefefe;overflow:hidden"><div style="height:33px;display:flex;align-items:center;justify-content:flex-start;color:#000;line-height:16px;padding:0 4px;white-space:nowrap;"></div></div>
<div class="a" style="left:1317px;top:376px;width:37px;height:33px;background:#fefefe;overflow:hidden"><div style="height:33px;display:flex;align-items:center;justify-content:flex-start;color:#000;line-height:16px;padding:0 4px;white-space:nowrap;"></div></div>
<div class="a" style="left:1355px;top:376px;width:37px;height:33px;background:#fefefe;overflow:hidden"><div style="height:33px;display:flex;align-items:center;justify-content:flex-start;color:#000;line-height:16px;padding:0 4px;white-space:nowrap;"></div></div>
<div class="a" style="left:1393px;top:376px;width:37px;height:33px;background:#fefefe;overflow:hidden"><div style="height:33px;display:flex;align-items:center;justify-content:flex-start;color:#000;line-height:16px;padding:0 4px;white-space:nowrap;"></div></div>
<div class="a" style="left:1431px;top:376px;width:37px;height:33px;background:#fefefe;overflow:hidden"><div style="height:33px;display:flex;align-items:center;justify-content:flex-start;color:#000;line-height:16px;padding:0 4px;white-space:nowrap;"></div></div>
<div class="a" style="left:1469px;top:376px;width:37px;height:33px;background:#fefefe;overflow:hidden"><div style="height:33px;display:flex;align-items:center;justify-content:flex-start;color:#000;line-height:16px;padding:0 4px;white-space:nowrap;"></div></div>
<div class="a" style="left:1507px;top:376px;width:37px;height:33px;background:#fffd78;overflow:hidden"><div style="height:33px;display:flex;align-items:center;justify-content:flex-start;color:#000;line-height:16px;padding:0 4px;white-space:nowrap;"></div></div>
<div class="a" style="left:1545px;top:376px;width:37px;height:33px;background:#fefefe;overflow:hidden"><div style="height:33px;display:flex;align-items:center;justify-content:flex-start;color:#000;line-height:16px;padding:0 4px;white-space:nowrap;"></div></div>
<div class="a" style="left:1583px;top:376px;width:37px;height:33px;background:#fefefe;overflow:hidden"><div style="height:33px;display:flex;align-items:center;justify-content:flex-start;color:#000;line-height:16px;padding:0 4px;white-space:nowrap;"></div></div>
<div class="a" style="left:1621px;top:376px;width:63px;height:33px;background:#fefefe;overflow:hidden"><div style="height:33px;display:flex;align-items:center;justify-content:flex-start;color:#000;line-height:16px;padding:0 4px;white-space:nowrap;"></div></div>
<div class="a" style="left:1685px;top:376px;width:49px;height:33px;background:#eef2ea;overflow:hidden"><div style="height:33px;display:flex;align-items:center;justify-content:flex-start;color:#000;line-height:16px;padding:0 4px;white-space:nowrap;"></div></div>
<div class="a" style="left:1735px;top:376px;width:49px;height:33px;background:#eef2ea;overflow:hidden"><div style="height:33px;display:flex;align-items:center;justify-content:flex-end;color:#000;line-height:16px;padding:0 4px;white-space:nowrap;"><b style="width:24px"><s>1664</s></b></div></div>
<div class="a" style="left:1785px;top:376px;width:34px;height:33px;background:#eef2ea;overflow:hidden"><div style="height:33px;display:flex;align-items:center;justify-content:flex-start;color:#000;line-height:16px;padding:0 4px;white-space:nowrap;"><b style="width:6px"><s>0</s></b></div></div>
<div class="a" style="left:12px;top:410px;width:48px;height:33px;background:#fefefe;overflow:hidden"><div style="height:33px;display:flex;align-items:center;justify-content:center;color:#000080;line-height:16px;padding:0 4px;white-space:nowrap;"><b style="width:6px"><s>7</s></b></div></div>
<div class="a" style="left:61px;top:410px;width:98px;height:33px;background:#eef2ea;overflow:hidden"><div style="height:33px;display:flex;align-items:center;justify-content:flex-start;color:#000;line-height:16px;padding:0 4px;white-space:nowrap;"><u>李烈峰</u></div></div>
<div class="a" style="left:160px;top:410px;width:65px;height:33px;background:#eef2ea;overflow:hidden"><div style="height:33px;display:flex;align-items:center;justify-content:flex-start;color:#000;line-height:16px;padding:0 4px;white-space:nowrap;"><div><b style="width:30px"><s>53504</s></b></div></div></div>
<div class="a" style="left:226px;top:410px;width:90px;height:33px;background:#eef2ea;overflow:hidden"><div style="height:33px;display:flex;align-items:center;justify-content:flex-start;color:#000;line-height:16px;padding:0 4px;white-space:nowrap;"><b style="width:48px"><s>42654-GY</s></b></div></div>
<div class="a" style="left:317px;top:410px;width:382px;height:33px;background:#b4d8f2;overflow:hidden"><div style="height:33px;display:flex;align-items:center;justify-content:flex-start;color:#000;line-height:16px;padding:0 4px;white-space:nowrap;padding-left:5px"><div><b style="width:6px"><s>1</s></b><u>米</u><b style="width:18px"><s>TPE</s></b><u>线身</u><b style="width:6px"><s>,</s></b><u>金属外壳</u><b style="width:138px"><s>USB&nbsp;A&nbsp;TO&nbsp;LIGHTNING(C89)</s></b><u>数据线</u><b style="width:24px"><s>,USB</s></b><u>和</u><b style="width:48px"><s>Lightnin</s></b><br><b style="width:6px"><s>g</s></b><u>头镭雕客人</u><b style="width:30px"><s>LOGO.</s></b></div></div></div>
<div class="a" style="left:700px;top:410px;width:59px;height:33px;background:#eef2ea;overflow:hidden"><div style="height:33px;display:flex;align-items:center;justify-content:flex-start;color:#000;line-height:16px;padding:0 4px;white-space:nowrap;"><b style="width:18px"><s>832</s></b></div></div>
<div class="a" style="left:760px;top:410px;width:77px;height:33px;background:#eef2ea;overflow:hidden"><div style="height:33px;display:flex;align-items:center;justify-content:flex-start;color:#000;line-height:16px;padding:0 4px;white-space:nowrap;"><b style="width:60px"><s>2022-04-29</s></b></div></div>
<div class="a" style="left:838px;top:410px;width:27px;height:33px;background:#eef2ea;overflow:hidden"><div style="height:33px;display:flex;align-items:center;justify-content:flex-start;color:#000;line-height:16px;padding:0 4px;white-space:nowrap;"><b style="width:18px"><s>192</s></b></div></div>
<div class="a" style="left:866px;top:410px;width:35px;height:33px;background:#eef2ea;overflow:hidden"><div style="height:33px;display:flex;align-items:center;justify-content:flex-start;color:#000;line-height:16px;padding:0 4px;white-space:nowrap;"><b style="width:6px"><s>4</s></b></div></div>
<div class="a" style="left:902px;top:410px;width:32px;height:33px;background:#eef2ea;overflow:hidden"><div style="height:33px;display:flex;align-items:center;justify-content:flex-start;color:#000;line-height:16px;padding:0 4px;white-space:nowrap;"><b style="width:12px"><s>64</s></b></div></div>
<div class="a" style="left:935px;top:410px;width:39px;height:33px;background:#eef2ea;overflow:hidden"><div style="height:33px;display:flex;align-items:center;justify-content:flex-start;color:#000;line-height:16px;padding:0 4px;white-space:nowrap;"></div></div>
<div class="a" style="left:975px;top:410px;width:37px;height:33px;background:#eef2ea;overflow:hidden"><div style="height:33px;display:flex;align-items:center;justify-content:flex-start;color:#000;line-height:16px;padding:0 4px;white-space:nowrap;"><b style="width:18px"><s>PCS</s></b></div></div>
<div class="a" style="left:1013px;top:410px;width:37px;height:33px;background:#f4fcfd;overflow:hidden"><div style="height:33px;display:flex;align-items:center;justify-content:flex-start;color:#000;line-height:16px;padding:0 4px;white-space:nowrap;"></div></div>
<div class="a" style="left:1051px;top:410px;width:37px;height:33px;background:#f4fcfd;overflow:hidden"><div style="height:33px;display:flex;align-items:center;justify-content:flex-start;color:#000;line-height:16px;padding:0 4px;white-space:nowrap;"></div></div>
<div class="a" style="left:1089px;top:410px;width:37px;height:33px;background:#f4fcfd;overflow:hidden"><div style="height:33px;display:flex;align-items:center;justify-content:flex-start;color:#000;line-height:16px;padding:0 4px;white-space:nowrap;"></div></div>
<div class="a" style="left:1127px;top:410px;width:37px;height:33px;background:#f4fcfd;overflow:hidden"><div style="height:33px;display:flex;align-items:center;justify-content:flex-start;color:#000;line-height:16px;padding:0 4px;white-space:nowrap;"></div></div>
<div class="a" style="left:1165px;top:410px;width:37px;height:33px;background:#f4fcfd;overflow:hidden"><div style="height:33px;display:flex;align-items:center;justify-content:flex-start;color:#000;line-height:16px;padding:0 4px;white-space:nowrap;"></div></div>
<div class="a" style="left:1203px;top:410px;width:37px;height:33px;background:#f4fcfd;overflow:hidden"><div style="height:33px;display:flex;align-items:center;justify-content:flex-start;color:#000;line-height:16px;padding:0 4px;white-space:nowrap;"></div></div>
<div class="a" style="left:1241px;top:410px;width:37px;height:33px;background:#fffd78;overflow:hidden"><div style="height:33px;display:flex;align-items:center;justify-content:flex-start;color:#000;line-height:16px;padding:0 4px;white-space:nowrap;"></div></div>
<div class="a" style="left:1279px;top:410px;width:37px;height:33px;background:#f4fcfd;overflow:hidden"><div style="height:33px;display:flex;align-items:center;justify-content:flex-start;color:#000;line-height:16px;padding:0 4px;white-space:nowrap;"></div></div>
<div class="a" style="left:1317px;top:410px;width:37px;height:33px;background:#f4fcfd;overflow:hidden"><div style="height:33px;display:flex;align-items:center;justify-content:flex-start;color:#000;line-height:16px;padding:0 4px;white-space:nowrap;"></div></div>
<div class="a" style="left:1355px;top:410px;width:37px;height:33px;background:#f4fcfd;overflow:hidden"><div style="height:33px;display:flex;align-items:center;justify-content:flex-start;color:#000;line-height:16px;padding:0 4px;white-space:nowrap;"></div></div>
<div class="a" style="left:1393px;top:410px;width:37px;height:33px;background:#f4fcfd;overflow:hidden"><div style="height:33px;display:flex;align-items:center;justify-content:flex-start;color:#000;line-height:16px;padding:0 4px;white-space:nowrap;"></div></div>
<div class="a" style="left:1431px;top:410px;width:37px;height:33px;background:#f4fcfd;overflow:hidden"><div style="height:33px;display:flex;align-items:center;justify-content:flex-start;color:#000;line-height:16px;padding:0 4px;white-space:nowrap;"></div></div>
<div class="a" style="left:1469px;top:410px;width:37px;height:33px;background:#f4fcfd;overflow:hidden"><div style="height:33px;display:flex;align-items:center;justify-content:flex-start;color:#000;line-height:16px;padding:0 4px;white-space:nowrap;"></div></div>
<div class="a" style="left:1507px;top:410px;width:37px;height:33px;background:#fffd78;overflow:hidden"><div style="height:33px;display:flex;align-items:center;justify-content:flex-start;color:#000;line-height:16px;padding:0 4px;white-space:nowrap;"></div></div>
<div class="a" style="left:1545px;top:410px;width:37px;height:33px;background:#f4fcfd;overflow:hidden"><div style="height:33px;display:flex;align-items:center;justify-content:flex-start;color:#000;line-height:16px;padding:0 4px;white-space:nowrap;"></div></div>
<div class="a" style="left:1583px;top:410px;width:37px;height:33px;background:#f4fcfd;overflow:hidden"><div style="height:33px;display:flex;align-items:center;justify-content:flex-start;color:#000;line-height:16px;padding:0 4px;white-space:nowrap;"></div></div>
<div class="a" style="left:1621px;top:410px;width:63px;height:33px;background:#f4fcfd;overflow:hidden"><div style="height:33px;display:flex;align-items:center;justify-content:flex-start;color:#000;line-height:16px;padding:0 4px;white-space:nowrap;"></div></div>
<div class="a" style="left:1685px;top:410px;width:49px;height:33px;background:#eef2ea;overflow:hidden"><div style="height:33px;display:flex;align-items:center;justify-content:flex-start;color:#000;line-height:16px;padding:0 4px;white-space:nowrap;"></div></div>
<div class="a" style="left:1735px;top:410px;width:49px;height:33px;background:#eef2ea;overflow:hidden"><div style="height:33px;display:flex;align-items:center;justify-content:flex-end;color:#000;line-height:16px;padding:0 4px;white-space:nowrap;"><b style="width:18px"><s>832</s></b></div></div>
<div class="a" style="left:1785px;top:410px;width:34px;height:33px;background:#eef2ea;overflow:hidden"><div style="height:33px;display:flex;align-items:center;justify-content:flex-start;color:#000;line-height:16px;padding:0 4px;white-space:nowrap;"><b style="width:6px"><s>0</s></b></div></div>
<div class="a" style="left:12px;top:444px;width:48px;height:33px;background:#fefefe;overflow:hidden"><div style="height:33px;display:flex;align-items:center;justify-content:center;color:#000080;line-height:16px;padding:0 4px;white-space:nowrap;"><b style="width:6px"><s>8</s></b></div></div>
<div class="a" style="left:61px;top:444px;width:98px;height:33px;background:#eef2ea;overflow:hidden"><div style="height:33px;display:flex;align-items:center;justify-content:flex-start;color:#000;line-height:16px;padding:0 4px;white-space:nowrap;"><u>李烈峰</u></div></div>
<div class="a" style="left:160px;top:444px;width:65px;height:33px;background:#eef2ea;overflow:hidden"><div style="height:33px;display:flex;align-items:center;justify-content:flex-start;color:#000;line-height:16px;padding:0 4px;white-space:nowrap;"><div><b style="width:30px"><s>53504</s></b></div></div></div>
<div class="a" style="left:226px;top:444px;width:90px;height:33px;background:#eef2ea;overflow:hidden"><div style="height:33px;display:flex;align-items:center;justify-content:flex-start;color:#000;line-height:16px;padding:0 4px;white-space:nowrap;"><b style="width:48px"><s>42654-GN</s></b></div></div>
<div class="a" style="left:317px;top:444px;width:382px;height:33px;background:#b4d8f2;overflow:hidden"><div style="height:33px;display:flex;align-items:center;justify-content:flex-start;color:#000;line-height:16px;padding:0 4px;white-space:nowrap;padding-left:5px"><div><b style="width:6px"><s>1</s></b><u>米</u><b style="width:18px"><s>TPE</s></b><u>线身</u><b style="width:6px"><s>,</s></b><u>金属外壳</u><b style="width:138px"><s>USB&nbsp;A&nbsp;TO&nbsp;LIGHTNING(C89)</s></b><u>数据线</u><b style="width:24px"><s>,USB</s></b><u>和</u><b style="width:48px"><s>Lightnin</s></b><br><b style="width:6px"><s>g</s></b><u>头镭雕客人</u><b style="width:30px"><s>LOGO.</s></b></div></div></div>
<div class="a" style="left:700px;top:444px;width:59px;height:33px;background:#eef2ea;overflow:hidden"><div style="height:33px;display:flex;align-items:center;justify-content:flex-start;color:#000;line-height:16px;padding:0 4px;white-space:nowrap;"><b style="width:18px"><s>832</s></b></div></div>
<div class="a" style="left:760px;top:444px;width:77px;height:33px;background:#eef2ea;overflow:hidden"><div style="height:33px;display:flex;align-items:center;justify-content:flex-start;color:#000;line-height:16px;padding:0 4px;white-space:nowrap;"><b style="width:60px"><s>2022-04-29</s></b></div></div>
<div class="a" style="left:838px;top:444px;width:27px;height:33px;background:#eef2ea;overflow:hidden"><div style="height:33px;display:flex;align-items:center;justify-content:flex-start;color:#000;line-height:16px;padding:0 4px;white-space:nowrap;"><b style="width:18px"><s>192</s></b></div></div>
<div class="a" style="left:866px;top:444px;width:35px;height:33px;background:#eef2ea;overflow:hidden"><div style="height:33px;display:flex;align-items:center;justify-content:flex-start;color:#000;line-height:16px;padding:0 4px;white-space:nowrap;"><b style="width:6px"><s>4</s></b></div></div>
<div class="a" style="left:902px;top:444px;width:32px;height:33px;background:#eef2ea;overflow:hidden"><div style="height:33px;display:flex;align-items:center;justify-content:flex-start;color:#000;line-height:16px;padding:0 4px;white-space:nowrap;"><b style="width:12px"><s>64</s></b></div></div>
<div class="a" style="left:935px;top:444px;width:39px;height:33px;background:#eef2ea;overflow:hidden"><div style="height:33px;display:flex;align-items:center;justify-content:flex-start;color:#000;line-height:16px;padding:0 4px;white-space:nowrap;"></div></div>
<div class="a" style="left:975px;top:444px;width:37px;height:33px;background:#eef2ea;overflow:hidden"><div style="height:33px;display:flex;align-items:center;justify-content:flex-start;color:#000;line-height:16px;padding:0 4px;white-space:nowrap;"><b style="width:18px"><s>PCS</s></b></div></div>
<div class="a" style="left:1013px;top:444px;width:37px;height:33px;background:#fefefe;overflow:hidden"><div style="height:33px;display:flex;align-items:center;justify-content:flex-start;color:#000;line-height:16px;padding:0 4px;white-space:nowrap;"></div></div>
<div class="a" style="left:1051px;top:444px;width:37px;height:33px;background:#fefefe;overflow:hidden"><div style="height:33px;display:flex;align-items:center;justify-content:flex-start;color:#000;line-height:16px;padding:0 4px;white-space:nowrap;"></div></div>
<div class="a" style="left:1089px;top:444px;width:37px;height:33px;background:#fefefe;overflow:hidden"><div style="height:33px;display:flex;align-items:center;justify-content:flex-start;color:#000;line-height:16px;padding:0 4px;white-space:nowrap;"></div></div>
<div class="a" style="left:1127px;top:444px;width:37px;height:33px;background:#fefefe;overflow:hidden"><div style="height:33px;display:flex;align-items:center;justify-content:flex-start;color:#000;line-height:16px;padding:0 4px;white-space:nowrap;"></div></div>
<div class="a" style="left:1165px;top:444px;width:37px;height:33px;background:#fefefe;overflow:hidden"><div style="height:33px;display:flex;align-items:center;justify-content:flex-start;color:#000;line-height:16px;padding:0 4px;white-space:nowrap;"></div></div>
<div class="a" style="left:1203px;top:444px;width:37px;height:33px;background:#fefefe;overflow:hidden"><div style="height:33px;display:flex;align-items:center;justify-content:flex-start;color:#000;line-height:16px;padding:0 4px;white-space:nowrap;"></div></div>
<div class="a" style="left:1241px;top:444px;width:37px;height:33px;background:#fffd78;overflow:hidden"><div style="height:33px;display:flex;align-items:center;justify-content:flex-start;color:#000;line-height:16px;padding:0 4px;white-space:nowrap;"></div></div>
<div class="a" style="left:1279px;top:444px;width:37px;height:33px;background:#fefefe;overflow:hidden"><div style="height:33px;display:flex;align-items:center;justify-content:flex-start;color:#000;line-height:16px;padding:0 4px;white-space:nowrap;"></div></div>
<div class="a" style="left:1317px;top:444px;width:37px;height:33px;background:#fefefe;overflow:hidden"><div style="height:33px;display:flex;align-items:center;justify-content:flex-start;color:#000;line-height:16px;padding:0 4px;white-space:nowrap;"></div></div>
<div class="a" style="left:1355px;top:444px;width:37px;height:33px;background:#fefefe;overflow:hidden"><div style="height:33px;display:flex;align-items:center;justify-content:flex-start;color:#000;line-height:16px;padding:0 4px;white-space:nowrap;"></div></div>
<div class="a" style="left:1393px;top:444px;width:37px;height:33px;background:#fefefe;overflow:hidden"><div style="height:33px;display:flex;align-items:center;justify-content:flex-start;color:#000;line-height:16px;padding:0 4px;white-space:nowrap;"></div></div>
<div class="a" style="left:1431px;top:444px;width:37px;height:33px;background:#fefefe;overflow:hidden"><div style="height:33px;display:flex;align-items:center;justify-content:flex-start;color:#000;line-height:16px;padding:0 4px;white-space:nowrap;"></div></div>
<div class="a" style="left:1469px;top:444px;width:37px;height:33px;background:#fefefe;overflow:hidden"><div style="height:33px;display:flex;align-items:center;justify-content:flex-start;color:#000;line-height:16px;padding:0 4px;white-space:nowrap;"></div></div>
<div class="a" style="left:1507px;top:444px;width:37px;height:33px;background:#fffd78;overflow:hidden"><div style="height:33px;display:flex;align-items:center;justify-content:flex-start;color:#000;line-height:16px;padding:0 4px;white-space:nowrap;"></div></div>
<div class="a" style="left:1545px;top:444px;width:37px;height:33px;background:#fefefe;overflow:hidden"><div style="height:33px;display:flex;align-items:center;justify-content:flex-start;color:#000;line-height:16px;padding:0 4px;white-space:nowrap;"></div></div>
<div class="a" style="left:1583px;top:444px;width:37px;height:33px;background:#fefefe;overflow:hidden"><div style="height:33px;display:flex;align-items:center;justify-content:flex-start;color:#000;line-height:16px;padding:0 4px;white-space:nowrap;"></div></div>
<div class="a" style="left:1621px;top:444px;width:63px;height:33px;background:#fefefe;overflow:hidden"><div style="height:33px;display:flex;align-items:center;justify-content:flex-start;color:#000;line-height:16px;padding:0 4px;white-space:nowrap;"></div></div>
<div class="a" style="left:1685px;top:444px;width:49px;height:33px;background:#eef2ea;overflow:hidden"><div style="height:33px;display:flex;align-items:center;justify-content:flex-start;color:#000;line-height:16px;padding:0 4px;white-space:nowrap;"></div></div>
<div class="a" style="left:1735px;top:444px;width:49px;height:33px;background:#eef2ea;overflow:hidden"><div style="height:33px;display:flex;align-items:center;justify-content:flex-end;color:#000;line-height:16px;padding:0 4px;white-space:nowrap;"><b style="width:18px"><s>832</s></b></div></div>
<div class="a" style="left:1785px;top:444px;width:34px;height:33px;background:#eef2ea;overflow:hidden"><div style="height:33px;display:flex;align-items:center;justify-content:flex-start;color:#000;line-height:16px;padding:0 4px;white-space:nowrap;"><b style="width:6px"><s>0</s></b></div></div>
<div class="a" style="left:12px;top:478px;width:48px;height:33px;background:#fefefe;overflow:hidden"><div style="height:33px;display:flex;align-items:center;justify-content:center;color:#000080;line-height:16px;padding:0 4px;white-space:nowrap;"><b style="width:6px"><s>9</s></b></div></div>
<div class="a" style="left:61px;top:478px;width:98px;height:33px;background:#eef2ea;overflow:hidden"><div style="height:33px;display:flex;align-items:center;justify-content:flex-start;color:#000;line-height:16px;padding:0 4px;white-space:nowrap;"><u>李烈峰</u></div></div>
<div class="a" style="left:160px;top:478px;width:65px;height:33px;background:#eef2ea;overflow:hidden"><div style="height:33px;display:flex;align-items:center;justify-content:flex-start;color:#000;line-height:16px;padding:0 4px;white-space:nowrap;"><div><b style="width:30px"><s>53504</s></b></div></div></div>
<div class="a" style="left:226px;top:478px;width:90px;height:33px;background:#eef2ea;overflow:hidden"><div style="height:33px;display:flex;align-items:center;justify-content:flex-start;color:#000;line-height:16px;padding:0 4px;white-space:nowrap;"><b style="width:48px"><s>42654-RD</s></b></div></div>
<div class="a" style="left:317px;top:478px;width:382px;height:33px;background:#b4d8f2;overflow:hidden"><div style="height:33px;display:flex;align-items:center;justify-content:flex-start;color:#000;line-height:16px;padding:0 4px;white-space:nowrap;padding-left:5px"><div><b style="width:6px"><s>1</s></b><u>米</u><b style="width:18px"><s>TPE</s></b><u>线身</u><b style="width:6px"><s>,</s></b><u>金属外壳</u><b style="width:138px"><s>USB&nbsp;A&nbsp;TO&nbsp;LIGHTNING(C89)</s></b><u>数据线</u><b style="width:24px"><s>,USB</s></b><u>和</u><b style="width:48px"><s>Lightnin</s></b><br><b style="width:6px"><s>g</s></b><u>头镭雕客人</u><b style="width:30px"><s>LOGO.</s></b></div></div></div>
<div class="a" style="left:700px;top:478px;width:59px;height:33px;background:#eef2ea;overflow:hidden"><div style="height:33px;display:flex;align-items:center;justify-content:flex-start;color:#000;line-height:16px;padding:0 4px;white-space:nowrap;"><b style="width:18px"><s>832</s></b></div></div>
<div class="a" style="left:760px;top:478px;width:77px;height:33px;background:#eef2ea;overflow:hidden"><div style="height:33px;display:flex;align-items:center;justify-content:flex-start;color:#000;line-height:16px;padding:0 4px;white-space:nowrap;"><b style="width:60px"><s>2022-04-29</s></b></div></div>
<div class="a" style="left:838px;top:478px;width:27px;height:33px;background:#eef2ea;overflow:hidden"><div style="height:33px;display:flex;align-items:center;justify-content:flex-start;color:#000;line-height:16px;padding:0 4px;white-space:nowrap;"><b style="width:18px"><s>192</s></b></div></div>
<div class="a" style="left:866px;top:478px;width:35px;height:33px;background:#eef2ea;overflow:hidden"><div style="height:33px;display:flex;align-items:center;justify-content:flex-start;color:#000;line-height:16px;padding:0 4px;white-space:nowrap;"><b style="width:6px"><s>4</s></b></div></div>
<div class="a" style="left:902px;top:478px;width:32px;height:33px;background:#eef2ea;overflow:hidden"><div style="height:33px;display:flex;align-items:center;justify-content:flex-start;color:#000;line-height:16px;padding:0 4px;white-space:nowrap;"><b style="width:12px"><s>64</s></b></div></div>
<div class="a" style="left:935px;top:478px;width:39px;height:33px;background:#eef2ea;overflow:hidden"><div style="height:33px;display:flex;align-items:center;justify-content:flex-start;color:#000;line-height:16px;padding:0 4px;white-space:nowrap;"></div></div>
<div class="a" style="left:975px;top:478px;width:37px;height:33px;background:#eef2ea;overflow:hidden"><div style="height:33px;display:flex;align-items:center;justify-content:flex-start;color:#000;line-height:16px;padding:0 4px;white-space:nowrap;"><b style="width:18px"><s>PCS</s></b></div></div>
<div class="a" style="left:1013px;top:478px;width:37px;height:33px;background:#f4fcfd;overflow:hidden"><div style="height:33px;display:flex;align-items:center;justify-content:flex-start;color:#000;line-height:16px;padding:0 4px;white-space:nowrap;"></div></div>
<div class="a" style="left:1051px;top:478px;width:37px;height:33px;background:#f4fcfd;overflow:hidden"><div style="height:33px;display:flex;align-items:center;justify-content:flex-start;color:#000;line-height:16px;padding:0 4px;white-space:nowrap;"></div></div>
<div class="a" style="left:1089px;top:478px;width:37px;height:33px;background:#f4fcfd;overflow:hidden"><div style="height:33px;display:flex;align-items:center;justify-content:flex-start;color:#000;line-height:16px;padding:0 4px;white-space:nowrap;"></div></div>
<div class="a" style="left:1127px;top:478px;width:37px;height:33px;background:#f4fcfd;overflow:hidden"><div style="height:33px;display:flex;align-items:center;justify-content:flex-start;color:#000;line-height:16px;padding:0 4px;white-space:nowrap;"></div></div>
<div class="a" style="left:1165px;top:478px;width:37px;height:33px;background:#f4fcfd;overflow:hidden"><div style="height:33px;display:flex;align-items:center;justify-content:flex-start;color:#000;line-height:16px;padding:0 4px;white-space:nowrap;"></div></div>
<div class="a" style="left:1203px;top:478px;width:37px;height:33px;background:#f4fcfd;overflow:hidden"><div style="height:33px;display:flex;align-items:center;justify-content:flex-start;color:#000;line-height:16px;padding:0 4px;white-space:nowrap;"></div></div>
<div class="a" style="left:1241px;top:478px;width:37px;height:33px;background:#fffd78;overflow:hidden"><div style="height:33px;display:flex;align-items:center;justify-content:flex-start;color:#000;line-height:16px;padding:0 4px;white-space:nowrap;"></div></div>
<div class="a" style="left:1279px;top:478px;width:37px;height:33px;background:#f4fcfd;overflow:hidden"><div style="height:33px;display:flex;align-items:center;justify-content:flex-start;color:#000;line-height:16px;padding:0 4px;white-space:nowrap;"></div></div>
<div class="a" style="left:1317px;top:478px;width:37px;height:33px;background:#f4fcfd;overflow:hidden"><div style="height:33px;display:flex;align-items:center;justify-content:flex-start;color:#000;line-height:16px;padding:0 4px;white-space:nowrap;"></div></div>
<div class="a" style="left:1355px;top:478px;width:37px;height:33px;background:#f4fcfd;overflow:hidden"><div style="height:33px;display:flex;align-items:center;justify-content:flex-start;color:#000;line-height:16px;padding:0 4px;white-space:nowrap;"></div></div>
<div class="a" style="left:1393px;top:478px;width:37px;height:33px;background:#f4fcfd;overflow:hidden"><div style="height:33px;display:flex;align-items:center;justify-content:flex-start;color:#000;line-height:16px;padding:0 4px;white-space:nowrap;"></div></div>
<div class="a" style="left:1431px;top:478px;width:37px;height:33px;background:#f4fcfd;overflow:hidden"><div style="height:33px;display:flex;align-items:center;justify-content:flex-start;color:#000;line-height:16px;padding:0 4px;white-space:nowrap;"></div></div>
<div class="a" style="left:1469px;top:478px;width:37px;height:33px;background:#f4fcfd;overflow:hidden"><div style="height:33px;display:flex;align-items:center;justify-content:flex-start;color:#000;line-height:16px;padding:0 4px;white-space:nowrap;"></div></div>
<div class="a" style="left:1507px;top:478px;width:37px;height:33px;background:#fffd78;overflow:hidden"><div style="height:33px;display:flex;align-items:center;justify-content:flex-start;color:#000;line-height:16px;padding:0 4px;white-space:nowrap;"></div></div>
<div class="a" style="left:1545px;top:478px;width:37px;height:33px;background:#f4fcfd;overflow:hidden"><div style="height:33px;display:flex;align-items:center;justify-content:flex-start;color:#000;line-height:16px;padding:0 4px;white-space:nowrap;"></div></div>
<div class="a" style="left:1583px;top:478px;width:37px;height:33px;background:#f4fcfd;overflow:hidden"><div style="height:33px;display:flex;align-items:center;justify-content:flex-start;color:#000;line-height:16px;padding:0 4px;white-space:nowrap;"></div></div>
<div class="a" style="left:1621px;top:478px;width:63px;height:33px;background:#f4fcfd;overflow:hidden"><div style="height:33px;display:flex;align-items:center;justify-content:flex-start;color:#000;line-height:16px;padding:0 4px;white-space:nowrap;"></div></div>
<div class="a" style="left:1685px;top:478px;width:49px;height:33px;background:#eef2ea;overflow:hidden"><div style="height:33px;display:flex;align-items:center;justify-content:flex-start;color:#000;line-height:16px;padding:0 4px;white-space:nowrap;"></div></div>
<div class="a" style="left:1735px;top:478px;width:49px;height:33px;background:#eef2ea;overflow:hidden"><div style="height:33px;display:flex;align-items:center;justify-content:flex-end;color:#000;line-height:16px;padding:0 4px;white-space:nowrap;"><b style="width:18px"><s>832</s></b></div></div>
<div class="a" style="left:1785px;top:478px;width:34px;height:33px;background:#eef2ea;overflow:hidden"><div style="height:33px;display:flex;align-items:center;justify-content:flex-start;color:#000;line-height:16px;padding:0 4px;white-space:nowrap;"><b style="width:6px"><s>0</s></b></div></div>
<div class="a" style="left:12px;top:512px;width:48px;height:33px;background:#fefefe;overflow:hidden"><div style="height:33px;display:flex;align-items:center;justify-content:center;color:#000080;line-height:16px;padding:0 4px;white-space:nowrap;"><b style="width:12px"><s>10</s></b></div></div>
<div class="a" style="left:61px;top:512px;width:98px;height:33px;background:#eef2ea;overflow:hidden"><div style="height:33px;display:flex;align-items:center;justify-content:flex-start;color:#000;line-height:16px;padding:0 4px;white-space:nowrap;"><u>李烈峰</u></div></div>
<div class="a" style="left:160px;top:512px;width:65px;height:33px;background:#eef2ea;overflow:hidden"><div style="height:33px;display:flex;align-items:center;justify-content:flex-start;color:#000;line-height:16px;padding:0 4px;white-space:nowrap;"><div><b style="width:30px"><s>53504</s></b></div></div></div>
<div class="a" style="left:226px;top:512px;width:90px;height:33px;background:#eef2ea;overflow:hidden"><div style="height:33px;display:flex;align-items:center;justify-content:flex-start;color:#000;line-height:16px;padding:0 4px;white-space:nowrap;"><b style="width:48px"><s>42654-BL</s></b></div></div>
<div class="a" style="left:317px;top:512px;width:382px;height:33px;background:#b4d8f2;overflow:hidden"><div style="height:33px;display:flex;align-items:center;justify-content:flex-start;color:#000;line-height:16px;padding:0 4px;white-space:nowrap;padding-left:5px"><div><b style="width:6px"><s>1</s></b><u>米</u><b style="width:18px"><s>TPE</s></b><u>线身</u><b style="width:6px"><s>,</s></b><u>金属外壳</u><b style="width:138px"><s>USB&nbsp;A&nbsp;TO&nbsp;LIGHTNING(C89)</s></b><u>数据线</u><b style="width:24px"><s>,USB</s></b><u>和</u><b style="width:48px"><s>Lightnin</s></b><br><b style="width:6px"><s>g</s></b><u>头镭雕客人</u><b style="width:30px"><s>LOGO.</s></b></div></div></div>
<div class="a" style="left:700px;top:512px;width:59px;height:33px;background:#eef2ea;overflow:hidden"><div style="height:33px;display:flex;align-items:center;justify-content:flex-start;color:#000;line-height:16px;padding:0 4px;white-space:nowrap;"><b style="width:18px"><s>832</s></b></div></div>
<div class="a" style="left:760px;top:512px;width:77px;height:33px;background:#eef2ea;overflow:hidden"><div style="height:33px;display:flex;align-items:center;justify-content:flex-start;color:#000;line-height:16px;padding:0 4px;white-space:nowrap;"><b style="width:60px"><s>2022-04-29</s></b></div></div>
<div class="a" style="left:838px;top:512px;width:27px;height:33px;background:#eef2ea;overflow:hidden"><div style="height:33px;display:flex;align-items:center;justify-content:flex-start;color:#000;line-height:16px;padding:0 4px;white-space:nowrap;"><b style="width:18px"><s>192</s></b></div></div>
<div class="a" style="left:866px;top:512px;width:35px;height:33px;background:#eef2ea;overflow:hidden"><div style="height:33px;display:flex;align-items:center;justify-content:flex-start;color:#000;line-height:16px;padding:0 4px;white-space:nowrap;"><b style="width:6px"><s>4</s></b></div></div>
<div class="a" style="left:902px;top:512px;width:32px;height:33px;background:#eef2ea;overflow:hidden"><div style="height:33px;display:flex;align-items:center;justify-content:flex-start;color:#000;line-height:16px;padding:0 4px;white-space:nowrap;"><b style="width:12px"><s>64</s></b></div></div>
<div class="a" style="left:935px;top:512px;width:39px;height:33px;background:#eef2ea;overflow:hidden"><div style="height:33px;display:flex;align-items:center;justify-content:flex-start;color:#000;line-height:16px;padding:0 4px;white-space:nowrap;"></div></div>
<div class="a" style="left:975px;top:512px;width:37px;height:33px;background:#eef2ea;overflow:hidden"><div style="height:33px;display:flex;align-items:center;justify-content:flex-start;color:#000;line-height:16px;padding:0 4px;white-space:nowrap;"><b style="width:18px"><s>PCS</s></b></div></div>
<div class="a" style="left:1013px;top:512px;width:37px;height:33px;background:#fefefe;overflow:hidden"><div style="height:33px;display:flex;align-items:center;justify-content:flex-start;color:#000;line-height:16px;padding:0 4px;white-space:nowrap;"></div></div>
<div class="a" style="left:1051px;top:512px;width:37px;height:33px;background:#fefefe;overflow:hidden"><div style="height:33px;display:flex;align-items:center;justify-content:flex-start;color:#000;line-height:16px;padding:0 4px;white-space:nowrap;"></div></div>
<div class="a" style="left:1089px;top:512px;width:37px;height:33px;background:#fefefe;overflow:hidden"><div style="height:33px;display:flex;align-items:center;justify-content:flex-start;color:#000;line-height:16px;padding:0 4px;white-space:nowrap;"></div></div>
<div class="a" style="left:1127px;top:512px;width:37px;height:33px;background:#fefefe;overflow:hidden"><div style="height:33px;display:flex;align-items:center;justify-content:flex-start;color:#000;line-height:16px;padding:0 4px;white-space:nowrap;"></div></div>
<div class="a" style="left:1165px;top:512px;width:37px;height:33px;background:#fefefe;overflow:hidden"><div style="height:33px;display:flex;align-items:center;justify-content:flex-start;color:#000;line-height:16px;padding:0 4px;white-space:nowrap;"></div></div>
<div class="a" style="left:1203px;top:512px;width:37px;height:33px;background:#fefefe;overflow:hidden"><div style="height:33px;display:flex;align-items:center;justify-content:flex-start;color:#000;line-height:16px;padding:0 4px;white-space:nowrap;"></div></div>
<div class="a" style="left:1241px;top:512px;width:37px;height:33px;background:#fffd78;overflow:hidden"><div style="height:33px;display:flex;align-items:center;justify-content:flex-start;color:#000;line-height:16px;padding:0 4px;white-space:nowrap;"></div></div>
<div class="a" style="left:1279px;top:512px;width:37px;height:33px;background:#fefefe;overflow:hidden"><div style="height:33px;display:flex;align-items:center;justify-content:flex-start;color:#000;line-height:16px;padding:0 4px;white-space:nowrap;"></div></div>
<div class="a" style="left:1317px;top:512px;width:37px;height:33px;background:#fefefe;overflow:hidden"><div style="height:33px;display:flex;align-items:center;justify-content:flex-start;color:#000;line-height:16px;padding:0 4px;white-space:nowrap;"></div></div>
<div class="a" style="left:1355px;top:512px;width:37px;height:33px;background:#fefefe;overflow:hidden"><div style="height:33px;display:flex;align-items:center;justify-content:flex-start;color:#000;line-height:16px;padding:0 4px;white-space:nowrap;"></div></div>
<div class="a" style="left:1393px;top:512px;width:37px;height:33px;background:#fefefe;overflow:hidden"><div style="height:33px;display:flex;align-items:center;justify-content:flex-start;color:#000;line-height:16px;padding:0 4px;white-space:nowrap;"></div></div>
<div class="a" style="left:1431px;top:512px;width:37px;height:33px;background:#fefefe;overflow:hidden"><div style="height:33px;display:flex;align-items:center;justify-content:flex-start;color:#000;line-height:16px;padding:0 4px;white-space:nowrap;"></div></div>
<div class="a" style="left:1469px;top:512px;width:37px;height:33px;background:#fefefe;overflow:hidden"><div style="height:33px;display:flex;align-items:center;justify-content:flex-start;color:#000;line-height:16px;padding:0 4px;white-space:nowrap;"></div></div>
<div class="a" style="left:1507px;top:512px;width:37px;height:33px;background:#fffd78;overflow:hidden"><div style="height:33px;display:flex;align-items:center;justify-content:flex-start;color:#000;line-height:16px;padding:0 4px;white-space:nowrap;"></div></div>
<div class="a" style="left:1545px;top:512px;width:37px;height:33px;background:#fefefe;overflow:hidden"><div style="height:33px;display:flex;align-items:center;justify-content:flex-start;color:#000;line-height:16px;padding:0 4px;white-space:nowrap;"></div></div>
<div class="a" style="left:1583px;top:512px;width:37px;height:33px;background:#fefefe;overflow:hidden"><div style="height:33px;display:flex;align-items:center;justify-content:flex-start;color:#000;line-height:16px;padding:0 4px;white-space:nowrap;"></div></div>
<div class="a" style="left:1621px;top:512px;width:63px;height:33px;background:#fefefe;overflow:hidden"><div style="height:33px;display:flex;align-items:center;justify-content:flex-start;color:#000;line-height:16px;padding:0 4px;white-space:nowrap;"></div></div>
<div class="a" style="left:1685px;top:512px;width:49px;height:33px;background:#eef2ea;overflow:hidden"><div style="height:33px;display:flex;align-items:center;justify-content:flex-start;color:#000;line-height:16px;padding:0 4px;white-space:nowrap;"></div></div>
<div class="a" style="left:1735px;top:512px;width:49px;height:33px;background:#eef2ea;overflow:hidden"><div style="height:33px;display:flex;align-items:center;justify-content:flex-end;color:#000;line-height:16px;padding:0 4px;white-space:nowrap;"><b style="width:18px"><s>832</s></b></div></div>
<div class="a" style="left:1785px;top:512px;width:34px;height:33px;background:#eef2ea;overflow:hidden"><div style="height:33px;display:flex;align-items:center;justify-content:flex-start;color:#000;line-height:16px;padding:0 4px;white-space:nowrap;"><b style="width:6px"><s>0</s></b></div></div>
<div class="a" style="left:12px;top:546px;width:48px;height:33px;background:#fefefe;overflow:hidden"><div style="height:33px;display:flex;align-items:center;justify-content:center;color:#000080;line-height:16px;padding:0 4px;white-space:nowrap;"><b style="width:12px"><s>11</s></b></div></div>
<div class="a" style="left:61px;top:546px;width:98px;height:33px;background:#eef2ea;overflow:hidden"><div style="height:33px;display:flex;align-items:center;justify-content:flex-start;color:#000;line-height:16px;padding:0 4px;white-space:nowrap;"><u>李烈峰</u></div></div>
<div class="a" style="left:160px;top:546px;width:65px;height:33px;background:#eef2ea;overflow:hidden"><div style="height:33px;display:flex;align-items:center;justify-content:flex-start;color:#000;line-height:16px;padding:0 4px;white-space:nowrap;"><div><b style="width:30px"><s>53252</s></b></div></div></div>
<div class="a" style="left:226px;top:546px;width:90px;height:33px;background:#eef2ea;overflow:hidden"><div style="height:33px;display:flex;align-items:center;justify-content:flex-start;color:#000;line-height:16px;padding:0 4px;white-space:nowrap;"><b style="width:48px"><s>42654-BK</s></b></div></div>
<div class="a" style="left:317px;top:546px;width:382px;height:33px;background:#b4d8f2;overflow:hidden"><div style="height:33px;display:flex;align-items:center;justify-content:flex-start;color:#000;line-height:16px;padding:0 4px;white-space:nowrap;padding-left:5px"><div><b style="width:6px"><s>1</s></b><u>米</u><b style="width:18px"><s>TPE</s></b><u>线身</u><b style="width:6px"><s>,</s></b><u>金属外壳</u><b style="width:138px"><s>USB&nbsp;A&nbsp;TO&nbsp;LIGHTNING(C89)</s></b><u>数据线</u><b style="width:24px"><s>,USB</s></b><u>和</u><b style="width:48px"><s>Lightnin</s></b><br><b style="width:6px"><s>g</s></b><u>头镭雕客人</u><b style="width:24px"><s>LOGO</s></b></div></div></div>
<div class="a" style="left:700px;top:546px;width:59px;height:33px;background:#eef2ea;overflow:hidden"><div style="height:33px;display:flex;align-items:center;justify-content:flex-start;color:#000;line-height:16px;padding:0 4px;white-space:nowrap;"><b style="width:24px"><s>3456</s></b></div></div>
<div class="a" style="left:760px;top:546px;width:77px;height:33px;background:#eef2ea;overflow:hidden"><div style="height:33px;display:flex;align-items:center;justify-content:flex-start;color:#000;line-height:16px;padding:0 4px;white-space:nowrap;"><b style="width:60px"><s>2022-04-29</s></b></div></div>
<div class="a" style="left:838px;top:546px;width:27px;height:33px;background:#eef2ea;overflow:hidden"><div style="height:33px;display:flex;align-items:center;justify-content:flex-start;color:#000;line-height:16px;padding:0 4px;white-space:nowrap;"><b style="width:18px"><s>192</s></b></div></div>
<div class="a" style="left:866px;top:546px;width:35px;height:33px;background:#eef2ea;overflow:hidden"><div style="height:33px;display:flex;align-items:center;justify-content:flex-start;color:#000;line-height:16px;padding:0 4px;white-space:nowrap;"><b style="width:12px"><s>18</s></b></div></div>
<div class="a" style="left:902px;top:546px;width:32px;height:33px;background:#eef2ea;overflow:hidden"><div style="height:33px;display:flex;align-items:center;justify-content:flex-start;color:#000;line-height:16px;padding:0 4px;white-space:nowrap;"><b style="width:6px"><s>0</s></b></div></div>
<div class="a" style="left:935px;top:546px;width:39px;height:33px;background:#eef2ea;overflow:hidden"><div style="height:33px;display:flex;align-items:center;justify-content:flex-start;color:#000;line-height:16px;padding:0 4px;white-space:nowrap;"></div></div>
<div class="a" style="left:975px;top:546px;width:37px;height:33px;background:#eef2ea;overflow:hidden"><div style="height:33px;display:flex;align-items:center;justify-content:flex-start;color:#000;line-height:16px;padding:0 4px;white-space:nowrap;"><b style="width:18px"><s>PCS</s></b></div></div>
<div class="a" style="left:1013px;top:546px;width:37px;height:33px;background:#f4fcfd;overflow:hidden"><div style="height:33px;display:flex;align-items:center;justify-content:flex-start;color:#000;line-height:16px;padding:0 4px;white-space:nowrap;"></div></div>
<div class="a" style="left:1051px;top:546px;width:37px;height:33px;background:#f4fcfd;overflow:hidden"><div style="height:33px;display:flex;align-items:center;justify-content:flex-start;color:#000;line-height:16px;padding:0 4px;white-space:nowrap;"></div></div>
<div class="a" style="left:1089px;top:546px;width:37px;height:33px;background:#f4fcfd;overflow:hidden"><div style="height:33px;display:flex;align-items:center;justify-content:flex-start;color:#000;line-height:16px;padding:0 4px;white-space:nowrap;"></div></div>
<div class="a" style="left:1127px;top:546px;width:37px;height:33px;background:#f4fcfd;overflow:hidden"><div style="height:33px;display:flex;align-items:center;justify-content:flex-start;color:#000;line-height:16px;padding:0 4px;white-space:nowrap;"></div></div>
<div class="a" style="left:1165px;top:546px;width:37px;height:33px;background:#f4fcfd;overflow:hidden"><div style="height:33px;display:flex;align-items:center;justify-content:flex-start;color:#000;line-height:16px;padding:0 4px;white-space:nowrap;"></div></div>
<div class="a" style="left:1203px;top:546px;width:37px;height:33px;background:#f4fcfd;overflow:hidden"><div style="height:33px;display:flex;align-items:center;justify-content:flex-start;color:#000;line-height:16px;padding:0 4px;white-space:nowrap;"></div></div>
<div class="a" style="left:1241px;top:546px;width:37px;height:33px;background:#fffd78;overflow:hidden"><div style="height:33px;display:flex;align-items:center;justify-content:flex-start;color:#000;line-height:16px;padding:0 4px;white-space:nowrap;"></div></div>
<div class="a" style="left:1279px;top:546px;width:37px;height:33px;background:#f4fcfd;overflow:hidden"><div style="height:33px;display:flex;align-items:center;justify-content:flex-start;color:#000;line-height:16px;padding:0 4px;white-space:nowrap;"></div></div>
<div class="a" style="left:1317px;top:546px;width:37px;height:33px;background:#f4fcfd;overflow:hidden"><div style="height:33px;display:flex;align-items:center;justify-content:flex-start;color:#000;line-height:16px;padding:0 4px;white-space:nowrap;"></div></div>
<div class="a" style="left:1355px;top:546px;width:37px;height:33px;background:#f4fcfd;overflow:hidden"><div style="height:33px;display:flex;align-items:center;justify-content:flex-start;color:#000;line-height:16px;padding:0 4px;white-space:nowrap;"></div></div>
<div class="a" style="left:1393px;top:546px;width:37px;height:33px;background:#f4fcfd;overflow:hidden"><div style="height:33px;display:flex;align-items:center;justify-content:flex-start;color:#000;line-height:16px;padding:0 4px;white-space:nowrap;"></div></div>
<div class="a" style="left:1431px;top:546px;width:37px;height:33px;background:#f4fcfd;overflow:hidden"><div style="height:33px;display:flex;align-items:center;justify-content:flex-start;color:#000;line-height:16px;padding:0 4px;white-space:nowrap;"></div></div>
<div class="a" style="left:1469px;top:546px;width:37px;height:33px;background:#f4fcfd;overflow:hidden"><div style="height:33px;display:flex;align-items:center;justify-content:flex-start;color:#000;line-height:16px;padding:0 4px;white-space:nowrap;"></div></div>
<div class="a" style="left:1507px;top:546px;width:37px;height:33px;background:#fffd78;overflow:hidden"><div style="height:33px;display:flex;align-items:center;justify-content:flex-start;color:#000;line-height:16px;padding:0 4px;white-space:nowrap;"></div></div>
<div class="a" style="left:1545px;top:546px;width:37px;height:33px;background:#f4fcfd;overflow:hidden"><div style="height:33px;display:flex;align-items:center;justify-content:flex-start;color:#000;line-height:16px;padding:0 4px;white-space:nowrap;"></div></div>
<div class="a" style="left:1583px;top:546px;width:37px;height:33px;background:#f4fcfd;overflow:hidden"><div style="height:33px;display:flex;align-items:center;justify-content:flex-start;color:#000;line-height:16px;padding:0 4px;white-space:nowrap;"></div></div>
<div class="a" style="left:1621px;top:546px;width:63px;height:33px;background:#f4fcfd;overflow:hidden"><div style="height:33px;display:flex;align-items:center;justify-content:flex-start;color:#000;line-height:16px;padding:0 4px;white-space:nowrap;"></div></div>
<div class="a" style="left:1685px;top:546px;width:49px;height:33px;background:#eef2ea;overflow:hidden"><div style="height:33px;display:flex;align-items:center;justify-content:flex-start;color:#000;line-height:16px;padding:0 4px;white-space:nowrap;"></div></div>
<div class="a" style="left:1735px;top:546px;width:49px;height:33px;background:#eef2ea;overflow:hidden"><div style="height:33px;display:flex;align-items:center;justify-content:flex-end;color:#000;line-height:16px;padding:0 4px;white-space:nowrap;"><b style="width:24px"><s>3456</s></b></div></div>
<div class="a" style="left:1785px;top:546px;width:34px;height:33px;background:#eef2ea;overflow:hidden"><div style="height:33px;display:flex;align-items:center;justify-content:flex-start;color:#000;line-height:16px;padding:0 4px;white-space:nowrap;"><b style="width:6px"><s>0</s></b></div></div>
<div class="a" style="left:12px;top:580px;width:48px;height:33px;background:#fefefe;overflow:hidden"><div style="height:33px;display:flex;align-items:center;justify-content:center;color:#000080;line-height:16px;padding:0 4px;white-space:nowrap;"><b style="width:12px"><s>12</s></b></div></div>
<div class="a" style="left:61px;top:580px;width:98px;height:33px;background:#eef2ea;overflow:hidden"><div style="height:33px;display:flex;align-items:center;justify-content:flex-start;color:#000;line-height:16px;padding:0 4px;white-space:nowrap;"><u>李烈峰</u></div></div>
<div class="a" style="left:160px;top:580px;width:65px;height:33px;background:#eef2ea;overflow:hidden"><div style="height:33px;display:flex;align-items:center;justify-content:flex-start;color:#000;line-height:16px;padding:0 4px;white-space:nowrap;"><div><b style="width:30px"><s>53252</s></b></div></div></div>
<div class="a" style="left:226px;top:580px;width:90px;height:33px;background:#eef2ea;overflow:hidden"><div style="height:33px;display:flex;align-items:center;justify-content:flex-start;color:#000;line-height:16px;padding:0 4px;white-space:nowrap;"><b style="width:48px"><s>42654-GY</s></b></div></div>
<div class="a" style="left:317px;top:580px;width:382px;height:33px;background:#b4d8f2;overflow:hidden"><div style="height:33px;display:flex;align-items:center;justify-content:flex-start;color:#000;line-height:16px;padding:0 4px;white-space:nowrap;padding-left:5px"><div><b style="width:6px"><s>1</s></b><u>米</u><b style="width:18px"><s>TPE</s></b><u>线身</u><b style="width:6px"><s>,</s></b><u>金属外壳</u><b style="width:138px"><s>USB&nbsp;A&nbsp;TO&nbsp;LIGHTNING(C89)</s></b><u>数据线</u><b style="width:24px"><s>,USB</s></b><u>和</u><b style="width:48px"><s>Lightnin</s></b><br><b style="width:6px"><s>g</s></b><u>头镭雕客人</u><b style="width:30px"><s>LOGO.</s></b></div></div></div>
<div class="a" style="left:700px;top:580px;width:59px;height:33px;background:#eef2ea;overflow:hidden"><div style="height:33px;display:flex;align-items:center;justify-content:flex-start;color:#000;line-height:16px;padding:0 4px;white-space:nowrap;"><b style="width:24px"><s>1728</s></b></div></div>
<div class="a" style="left:760px;top:580px;width:77px;height:33px;background:#eef2ea;overflow:hidden"><div style="height:33px;display:flex;align-items:center;justify-content:flex-start;color:#000;line-height:16px;padding:0 4px;white-space:nowrap;"><b style="width:60px"><s>2022-04-29</s></b></div></div>
<div class="a" style="left:838px;top:580px;width:27px;height:33px;background:#eef2ea;overflow:hidden"><div style="height:33px;display:flex;align-items:center;justify-content:flex-start;color:#000;line-height:16px;padding:0 4px;white-space:nowrap;"><b style="width:18px"><s>192</s></b></div></div>
<div class="a" style="left:866px;top:580px;width:35px;height:33px;background:#eef2ea;overflow:hidden"><div style="height:33px;display:flex;align-items:center;justify-content:flex-start;color:#000;line-height:16px;padding:0 4px;white-space:nowrap;"><b style="width:6px"><s>9</s></b></div></div>
<div class="a" style="left:902px;top:580px;width:32px;height:33px;background:#eef2ea;overflow:hidden"><div style="height:33px;display:flex;align-items:center;justify-content:flex-start;color:#000;line-height:16px;padding:0 4px;white-space:nowrap;"><b style="width:6px"><s>0</s></b></div></div>
<div class="a" style="left:935px;top:580px;width:39px;height:33px;background:#eef2ea;overflow:hidden"><div style="height:33px;display:flex;align-items:center;justify-content:flex-start;color:#000;line-height:16px;padding:0 4px;white-space:nowrap;"></div></div>
<div class="a" style="left:975px;top:580px;width:37px;height:33px;background:#eef2ea;overflow:hidden"><div style="height:33px;display:flex;align-items:center;justify-content:flex-start;color:#000;line-height:16px;padding:0 4px;white-space:nowrap;"><b style="width:18px"><s>PCS</s></b></div></div>
<div class="a" style="left:1013px;top:580px;width:37px;height:33px;background:#fefefe;overflow:hidden"><div style="height:33px;display:flex;align-items:center;justify-content:flex-start;color:#000;line-height:16px;padding:0 4px;white-space:nowrap;"></div></div>
<div class="a" style="left:1051px;top:580px;width:37px;height:33px;background:#fefefe;overflow:hidden"><div style="height:33px;display:flex;align-items:center;justify-content:flex-start;color:#000;line-height:16px;padding:0 4px;white-space:nowrap;"></div></div>
<div class="a" style="left:1089px;top:580px;width:37px;height:33px;background:#fefefe;overflow:hidden"><div style="height:33px;display:flex;align-items:center;justify-content:flex-start;color:#000;line-height:16px;padding:0 4px;white-space:nowrap;"></div></div>
<div class="a" style="left:1127px;top:580px;width:37px;height:33px;background:#fefefe;overflow:hidden"><div style="height:33px;display:flex;align-items:center;justify-content:flex-start;color:#000;line-height:16px;padding:0 4px;white-space:nowrap;"></div></div>
<div class="a" style="left:1165px;top:580px;width:37px;height:33px;background:#fefefe;overflow:hidden"><div style="height:33px;display:flex;align-items:center;justify-content:flex-start;color:#000;line-height:16px;padding:0 4px;white-space:nowrap;"></div></div>
<div class="a" style="left:1203px;top:580px;width:37px;height:33px;background:#fefefe;overflow:hidden"><div style="height:33px;display:flex;align-items:center;justify-content:flex-start;color:#000;line-height:16px;padding:0 4px;white-space:nowrap;"></div></div>
<div class="a" style="left:1241px;top:580px;width:37px;height:33px;background:#fffd78;overflow:hidden"><div style="height:33px;display:flex;align-items:center;justify-content:flex-start;color:#000;line-height:16px;padding:0 4px;white-space:nowrap;"></div></div>
<div class="a" style="left:1279px;top:580px;width:37px;height:33px;background:#fefefe;overflow:hidden"><div style="height:33px;display:flex;align-items:center;justify-content:flex-start;color:#000;line-height:16px;padding:0 4px;white-space:nowrap;"></div></div>
<div class="a" style="left:1317px;top:580px;width:37px;height:33px;background:#fefefe;overflow:hidden"><div style="height:33px;display:flex;align-items:center;justify-content:flex-start;color:#000;line-height:16px;padding:0 4px;white-space:nowrap;"></div></div>
<div class="a" style="left:1355px;top:580px;width:37px;height:33px;background:#fefefe;overflow:hidden"><div style="height:33px;display:flex;align-items:center;justify-content:flex-start;color:#000;line-height:16px;padding:0 4px;white-space:nowrap;"></div></div>
<div class="a" style="left:1393px;top:580px;width:37px;height:33px;background:#fefefe;overflow:hidden"><div style="height:33px;display:flex;align-items:center;justify-content:flex-start;color:#000;line-height:16px;padding:0 4px;white-space:nowrap;"></div></div>
<div class="a" style="left:1431px;top:580px;width:37px;height:33px;background:#fefefe;overflow:hidden"><div style="height:33px;display:flex;align-items:center;justify-content:flex-start;color:#000;line-height:16px;padding:0 4px;white-space:nowrap;"></div></div>
<div class="a" style="left:1469px;top:580px;width:37px;height:33px;background:#fefefe;overflow:hidden"><div style="height:33px;display:flex;align-items:center;justify-content:flex-start;color:#000;line-height:16px;padding:0 4px;white-space:nowrap;"></div></div>
<div class="a" style="left:1507px;top:580px;width:37px;height:33px;background:#fffd78;overflow:hidden"><div style="height:33px;display:flex;align-items:center;justify-content:flex-start;color:#000;line-height:16px;padding:0 4px;white-space:nowrap;"></div></div>
<div class="a" style="left:1545px;top:580px;width:37px;height:33px;background:#fefefe;overflow:hidden"><div style="height:33px;display:flex;align-items:center;justify-content:flex-start;color:#000;line-height:16px;padding:0 4px;white-space:nowrap;"></div></div>
<div class="a" style="left:1583px;top:580px;width:37px;height:33px;background:#fefefe;overflow:hidden"><div style="height:33px;display:flex;align-items:center;justify-content:flex-start;color:#000;line-height:16px;padding:0 4px;white-space:nowrap;"></div></div>
<div class="a" style="left:1621px;top:580px;width:63px;height:33px;background:#fefefe;overflow:hidden"><div style="height:33px;display:flex;align-items:center;justify-content:flex-start;color:#000;line-height:16px;padding:0 4px;white-space:nowrap;"></div></div>
<div class="a" style="left:1685px;top:580px;width:49px;height:33px;background:#eef2ea;overflow:hidden"><div style="height:33px;display:flex;align-items:center;justify-content:flex-start;color:#000;line-height:16px;padding:0 4px;white-space:nowrap;"></div></div>
<div class="a" style="left:1735px;top:580px;width:49px;height:33px;background:#eef2ea;overflow:hidden"><div style="height:33px;display:flex;align-items:center;justify-content:flex-end;color:#000;line-height:16px;padding:0 4px;white-space:nowrap;"><b style="width:24px"><s>1728</s></b></div></div>
<div class="a" style="left:1785px;top:580px;width:34px;height:33px;background:#eef2ea;overflow:hidden"><div style="height:33px;display:flex;align-items:center;justify-content:flex-start;color:#000;line-height:16px;padding:0 4px;white-space:nowrap;"><b style="width:6px"><s>0</s></b></div></div>
<div class="a" style="left:12px;top:614px;width:48px;height:33px;background:#fefefe;overflow:hidden"><div style="height:33px;display:flex;align-items:center;justify-content:center;color:#000080;line-height:16px;padding:0 4px;white-space:nowrap;"><b style="width:12px"><s>13</s></b></div></div>
<div class="a" style="left:61px;top:614px;width:98px;height:33px;background:#eef2ea;overflow:hidden"><div style="height:33px;display:flex;align-items:center;justify-content:flex-start;color:#000;line-height:16px;padding:0 4px;white-space:nowrap;"><u>李烈峰</u></div></div>
<div class="a" style="left:160px;top:614px;width:65px;height:33px;background:#eef2ea;overflow:hidden"><div style="height:33px;display:flex;align-items:center;justify-content:flex-start;color:#000;line-height:16px;padding:0 4px;white-space:nowrap;"><div><b style="width:30px"><s>53252</s></b></div></div></div>
<div class="a" style="left:226px;top:614px;width:90px;height:33px;background:#eef2ea;overflow:hidden"><div style="height:33px;display:flex;align-items:center;justify-content:flex-start;color:#000;line-height:16px;padding:0 4px;white-space:nowrap;"><b style="width:48px"><s>42654-GN</s></b></div></div>
<div class="a" style="left:317px;top:614px;width:382px;height:33px;background:#b4d8f2;overflow:hidden"><div style="height:33px;display:flex;align-items:center;justify-content:flex-start;color:#000;line-height:16px;padding:0 4px;white-space:nowrap;padding-left:5px"><div><b style="width:6px"><s>1</s></b><u>米</u><b style="width:18px"><s>TPE</s></b><u>线身</u><b style="width:6px"><s>,</s></b><u>金属外壳</u><b style="width:138px"><s>USB&nbsp;A&nbsp;TO&nbsp;LIGHTNING(C89)</s></b><u>数据线</u><b style="width:24px"><s>,USB</s></b><u>和</u><b style="width:48px"><s>Lightnin</s></b><br><b style="width:6px"><s>g</s></b><u>头镭雕客人</u><b style="width:30px"><s>LOGO.</s></b></div></div></div>
<div class="a" style="left:700px;top:614px;width:59px;height:33px;background:#eef2ea;overflow:hidden"><div style="height:33px;display:flex;align-items:center;justify-content:flex-start;color:#000;line-height:16px;padding:0 4px;white-space:nowrap;"><b style="width:24px"><s>1728</s></b></div></div>
<div class="a" style="left:760px;top:614px;width:77px;height:33px;background:#eef2ea;overflow:hidden"><div style="height:33px;display:flex;align-items:center;justify-content:flex-start;color:#000;line-height:16px;padding:0 4px;white-space:nowrap;"><b style="width:60px"><s>2022-04-29</s></b></div></div>
<div class="a" style="left:838px;top:614px;width:27px;height:33px;background:#eef2ea;overflow:hidden"><div style="height:33px;display:flex;align-items:center;justify-content:flex-start;color:#000;line-height:16px;padding:0 4px;white-space:nowrap;"><b style="width:18px"><s>192</s></b></div></div>
<div class="a" style="left:866px;top:614px;width:35px;height:33px;background:#eef2ea;overflow:hidden"><div style="height:33px;display:flex;align-items:center;justify-content:flex-start;color:#000;line-height:16px;padding:0 4px;white-space:nowrap;"><b style="width:6px"><s>9</s></b></div></div>
<div class="a" style="left:902px;top:614px;width:32px;height:33px;background:#eef2ea;overflow:hidden"><div style="height:33px;display:flex;align-items:center;justify-content:flex-start;color:#000;line-height:16px;padding:0 4px;white-space:nowrap;"><b style="width:6px"><s>0</s></b></div></div>
<div class="a" style="left:935px;top:614px;width:39px;height:33px;background:#eef2ea;overflow:hidden"><div style="height:33px;display:flex;align-items:center;justify-content:flex-start;color:#000;line-height:16px;padding:0 4px;white-space:nowrap;"></div></div>
<div class="a" style="left:975px;top:614px;width:37px;height:33px;background:#eef2ea;overflow:hidden"><div style="height:33px;display:flex;align-items:center;justify-content:flex-start;color:#000;line-height:16px;padding:0 4px;white-space:nowrap;"><b style="width:18px"><s>PCS</s></b></div></div>
<div class="a" style="left:1013px;top:614px;width:37px;height:33px;background:#f4fcfd;overflow:hidden"><div style="height:33px;display:flex;align-items:center;justify-content:flex-start;color:#000;line-height:16px;padding:0 4px;white-space:nowrap;"></div></div>
<div class="a" style="left:1051px;top:614px;width:37px;height:33px;background:#f4fcfd;overflow:hidden"><div style="height:33px;display:flex;align-items:center;justify-content:flex-start;color:#000;line-height:16px;padding:0 4px;white-space:nowrap;"></div></div>
<div class="a" style="left:1089px;top:614px;width:37px;height:33px;background:#f4fcfd;overflow:hidden"><div style="height:33px;display:flex;align-items:center;justify-content:flex-start;color:#000;line-height:16px;padding:0 4px;white-space:nowrap;"></div></div>
<div class="a" style="left:1127px;top:614px;width:37px;height:33px;background:#f4fcfd;overflow:hidden"><div style="height:33px;display:flex;align-items:center;justify-content:flex-start;color:#000;line-height:16px;padding:0 4px;white-space:nowrap;"></div></div>
<div class="a" style="left:1165px;top:614px;width:37px;height:33px;background:#f4fcfd;overflow:hidden"><div style="height:33px;display:flex;align-items:center;justify-content:flex-start;color:#000;line-height:16px;padding:0 4px;white-space:nowrap;"></div></div>
<div class="a" style="left:1203px;top:614px;width:37px;height:33px;background:#f4fcfd;overflow:hidden"><div style="height:33px;display:flex;align-items:center;justify-content:flex-start;color:#000;line-height:16px;padding:0 4px;white-space:nowrap;"></div></div>
<div class="a" style="left:1241px;top:614px;width:37px;height:33px;background:#fffd78;overflow:hidden"><div style="height:33px;display:flex;align-items:center;justify-content:flex-start;color:#000;line-height:16px;padding:0 4px;white-space:nowrap;"></div></div>
<div class="a" style="left:1279px;top:614px;width:37px;height:33px;background:#f4fcfd;overflow:hidden"><div style="height:33px;display:flex;align-items:center;justify-content:flex-start;color:#000;line-height:16px;padding:0 4px;white-space:nowrap;"></div></div>
<div class="a" style="left:1317px;top:614px;width:37px;height:33px;background:#f4fcfd;overflow:hidden"><div style="height:33px;display:flex;align-items:center;justify-content:flex-start;color:#000;line-height:16px;padding:0 4px;white-space:nowrap;"></div></div>
<div class="a" style="left:1355px;top:614px;width:37px;height:33px;background:#f4fcfd;overflow:hidden"><div style="height:33px;display:flex;align-items:center;justify-content:flex-start;color:#000;line-height:16px;padding:0 4px;white-space:nowrap;"></div></div>
<div class="a" style="left:1393px;top:614px;width:37px;height:33px;background:#f4fcfd;overflow:hidden"><div style="height:33px;display:flex;align-items:center;justify-content:flex-start;color:#000;line-height:16px;padding:0 4px;white-space:nowrap;"></div></div>
<div class="a" style="left:1431px;top:614px;width:37px;height:33px;background:#f4fcfd;overflow:hidden"><div style="height:33px;display:flex;align-items:center;justify-content:flex-start;color:#000;line-height:16px;padding:0 4px;white-space:nowrap;"></div></div>
<div class="a" style="left:1469px;top:614px;width:37px;height:33px;background:#f4fcfd;overflow:hidden"><div style="height:33px;display:flex;align-items:center;justify-content:flex-start;color:#000;line-height:16px;padding:0 4px;white-space:nowrap;"></div></div>
<div class="a" style="left:1507px;top:614px;width:37px;height:33px;background:#fffd78;overflow:hidden"><div style="height:33px;display:flex;align-items:center;justify-content:flex-start;color:#000;line-height:16px;padding:0 4px;white-space:nowrap;"></div></div>
<div class="a" style="left:1545px;top:614px;width:37px;height:33px;background:#f4fcfd;overflow:hidden"><div style="height:33px;display:flex;align-items:center;justify-content:flex-start;color:#000;line-height:16px;padding:0 4px;white-space:nowrap;"></div></div>
<div class="a" style="left:1583px;top:614px;width:37px;height:33px;background:#f4fcfd;overflow:hidden"><div style="height:33px;display:flex;align-items:center;justify-content:flex-start;color:#000;line-height:16px;padding:0 4px;white-space:nowrap;"></div></div>
<div class="a" style="left:1621px;top:614px;width:63px;height:33px;background:#f4fcfd;overflow:hidden"><div style="height:33px;display:flex;align-items:center;justify-content:flex-start;color:#000;line-height:16px;padding:0 4px;white-space:nowrap;"></div></div>
<div class="a" style="left:1685px;top:614px;width:49px;height:33px;background:#eef2ea;overflow:hidden"><div style="height:33px;display:flex;align-items:center;justify-content:flex-start;color:#000;line-height:16px;padding:0 4px;white-space:nowrap;"></div></div>
<div class="a" style="left:1735px;top:614px;width:49px;height:33px;background:#eef2ea;overflow:hidden"><div style="height:33px;display:flex;align-items:center;justify-content:flex-end;color:#000;line-height:16px;padding:0 4px;white-space:nowrap;"><b style="width:24px"><s>1728</s></b></div></div>
<div class="a" style="left:1785px;top:614px;width:34px;height:33px;background:#eef2ea;overflow:hidden"><div style="height:33px;display:flex;align-items:center;justify-content:flex-start;color:#000;line-height:16px;padding:0 4px;white-space:nowrap;"><b style="width:6px"><s>0</s></b></div></div>
<div class="a" style="left:12px;top:648px;width:48px;height:33px;background:#fefefe;overflow:hidden"><div style="height:33px;display:flex;align-items:center;justify-content:center;color:#000080;line-height:16px;padding:0 4px;white-space:nowrap;"><b style="width:12px"><s>14</s></b></div></div>
<div class="a" style="left:61px;top:648px;width:98px;height:33px;background:#eef2ea;overflow:hidden"><div style="height:33px;display:flex;align-items:center;justify-content:flex-start;color:#000;line-height:16px;padding:0 4px;white-space:nowrap;"><u>李烈峰</u></div></div>
<div class="a" style="left:160px;top:648px;width:65px;height:33px;background:#eef2ea;overflow:hidden"><div style="height:33px;display:flex;align-items:center;justify-content:flex-start;color:#000;line-height:16px;padding:0 4px;white-space:nowrap;"><div><b style="width:30px"><s>53252</s></b></div></div></div>
<div class="a" style="left:226px;top:648px;width:90px;height:33px;background:#eef2ea;overflow:hidden"><div style="height:33px;display:flex;align-items:center;justify-content:flex-start;color:#000;line-height:16px;padding:0 4px;white-space:nowrap;"><b style="width:48px"><s>42654-RD</s></b></div></div>
<div class="a" style="left:317px;top:648px;width:382px;height:33px;background:#b4d8f2;overflow:hidden"><div style="height:33px;display:flex;align-items:center;justify-content:flex-start;color:#000;line-height:16px;padding:0 4px;white-space:nowrap;padding-left:5px"><div><b style="width:6px"><s>1</s></b><u>米</u><b style="width:18px"><s>TPE</s></b><u>线身</u><b style="width:6px"><s>,</s></b><u>金属外壳</u><b style="width:138px"><s>USB&nbsp;A&nbsp;TO&nbsp;LIGHTNING(C89)</s></b><u>数据线</u><b style="width:24px"><s>,USB</s></b><u>和</u><b style="width:48px"><s>Lightnin</s></b><br><b style="width:6px"><s>g</s></b><u>头镭雕客人</u><b style="width:30px"><s>LOGO.</s></b></div></div></div>
<div class="a" style="left:700px;top:648px;width:59px;height:33px;background:#eef2ea;overflow:hidden"><div style="height:33px;display:flex;align-items:center;justify-content:flex-start;color:#000;line-height:16px;padding:0 4px;white-space:nowrap;"><b style="width:24px"><s>1728</s></b></div></div>
<div class="a" style="left:760px;top:648px;width:77px;height:33px;background:#eef2ea;overflow:hidden"><div style="height:33px;display:flex;align-items:center;justify-content:flex-start;color:#000;line-height:16px;padding:0 4px;white-space:nowrap;"><b style="width:60px"><s>2022-04-29</s></b></div></div>
<div class="a" style="left:838px;top:648px;width:27px;height:33px;background:#eef2ea;overflow:hidden"><div style="height:33px;display:flex;align-items:center;justify-content:flex-start;color:#000;line-height:16px;padding:0 4px;white-space:nowrap;"><b style="width:18px"><s>192</s></b></div></div>
<div class="a" style="left:866px;top:648px;width:35px;height:33px;background:#eef2ea;overflow:hidden"><div style="height:33px;display:flex;align-items:center;justify-content:flex-start;color:#000;line-height:16px;padding:0 4px;white-space:nowrap;"><b style="width:6px"><s>9</s></b></div></div>
<div class="a" style="left:902px;top:648px;width:32px;height:33px;background:#eef2ea;overflow:hidden"><div style="height:33px;display:flex;align-items:center;justify-content:flex-start;color:#000;line-height:16px;padding:0 4px;white-space:nowrap;"><b style="width:6px"><s>0</s></b></div></div>
<div class="a" style="left:935px;top:648px;width:39px;height:33px;background:#eef2ea;overflow:hidden"><div style="height:33px;display:flex;align-items:center;justify-content:flex-start;color:#000;line-height:16px;padding:0 4px;white-space:nowrap;"></div></div>
<div class="a" style="left:975px;top:648px;width:37px;height:33px;background:#eef2ea;overflow:hidden"><div style="height:33px;display:flex;align-items:center;justify-content:flex-start;color:#000;line-height:16px;padding:0 4px;white-space:nowrap;"><b style="width:18px"><s>PCS</s></b></div></div>
<div class="a" style="left:1013px;top:648px;width:37px;height:33px;background:#fefefe;overflow:hidden"><div style="height:33px;display:flex;align-items:center;justify-content:flex-start;color:#000;line-height:16px;padding:0 4px;white-space:nowrap;"></div></div>
<div class="a" style="left:1051px;top:648px;width:37px;height:33px;background:#fefefe;overflow:hidden"><div style="height:33px;display:flex;align-items:center;justify-content:flex-start;color:#000;line-height:16px;padding:0 4px;white-space:nowrap;"></div></div>
<div class="a" style="left:1089px;top:648px;width:37px;height:33px;background:#fefefe;overflow:hidden"><div style="height:33px;display:flex;align-items:center;justify-content:flex-start;color:#000;line-height:16px;padding:0 4px;white-space:nowrap;"></div></div>
<div class="a" style="left:1127px;top:648px;width:37px;height:33px;background:#fefefe;overflow:hidden"><div style="height:33px;display:flex;align-items:center;justify-content:flex-start;color:#000;line-height:16px;padding:0 4px;white-space:nowrap;"></div></div>
<div class="a" style="left:1165px;top:648px;width:37px;height:33px;background:#fefefe;overflow:hidden"><div style="height:33px;display:flex;align-items:center;justify-content:flex-start;color:#000;line-height:16px;padding:0 4px;white-space:nowrap;"></div></div>
<div class="a" style="left:1203px;top:648px;width:37px;height:33px;background:#fefefe;overflow:hidden"><div style="height:33px;display:flex;align-items:center;justify-content:flex-start;color:#000;line-height:16px;padding:0 4px;white-space:nowrap;"></div></div>
<div class="a" style="left:1241px;top:648px;width:37px;height:33px;background:#fffd78;overflow:hidden"><div style="height:33px;display:flex;align-items:center;justify-content:flex-start;color:#000;line-height:16px;padding:0 4px;white-space:nowrap;"></div></div>
<div class="a" style="left:1279px;top:648px;width:37px;height:33px;background:#fefefe;overflow:hidden"><div style="height:33px;display:flex;align-items:center;justify-content:flex-start;color:#000;line-height:16px;padding:0 4px;white-space:nowrap;"></div></div>
<div class="a" style="left:1317px;top:648px;width:37px;height:33px;background:#fefefe;overflow:hidden"><div style="height:33px;display:flex;align-items:center;justify-content:flex-start;color:#000;line-height:16px;padding:0 4px;white-space:nowrap;"></div></div>
<div class="a" style="left:1355px;top:648px;width:37px;height:33px;background:#fefefe;overflow:hidden"><div style="height:33px;display:flex;align-items:center;justify-content:flex-start;color:#000;line-height:16px;padding:0 4px;white-space:nowrap;"></div></div>
<div class="a" style="left:1393px;top:648px;width:37px;height:33px;background:#fefefe;overflow:hidden"><div style="height:33px;display:flex;align-items:center;justify-content:flex-start;color:#000;line-height:16px;padding:0 4px;white-space:nowrap;"></div></div>
<div class="a" style="left:1431px;top:648px;width:37px;height:33px;background:#fefefe;overflow:hidden"><div style="height:33px;display:flex;align-items:center;justify-content:flex-start;color:#000;line-height:16px;padding:0 4px;white-space:nowrap;"></div></div>
<div class="a" style="left:1469px;top:648px;width:37px;height:33px;background:#fefefe;overflow:hidden"><div style="height:33px;display:flex;align-items:center;justify-content:flex-start;color:#000;line-height:16px;padding:0 4px;white-space:nowrap;"></div></div>
<div class="a" style="left:1507px;top:648px;width:37px;height:33px;background:#fffd78;overflow:hidden"><div style="height:33px;display:flex;align-items:center;justify-content:flex-start;color:#000;line-height:16px;padding:0 4px;white-space:nowrap;"></div></div>
<div class="a" style="left:1545px;top:648px;width:37px;height:33px;background:#fefefe;overflow:hidden"><div style="height:33px;display:flex;align-items:center;justify-content:flex-start;color:#000;line-height:16px;padding:0 4px;white-space:nowrap;"></div></div>
<div class="a" style="left:1583px;top:648px;width:37px;height:33px;background:#fefefe;overflow:hidden"><div style="height:33px;display:flex;align-items:center;justify-content:flex-start;color:#000;line-height:16px;padding:0 4px;white-space:nowrap;"></div></div>
<div class="a" style="left:1621px;top:648px;width:63px;height:33px;background:#fefefe;overflow:hidden"><div style="height:33px;display:flex;align-items:center;justify-content:flex-start;color:#000;line-height:16px;padding:0 4px;white-space:nowrap;"></div></div>
<div class="a" style="left:1685px;top:648px;width:49px;height:33px;background:#eef2ea;overflow:hidden"><div style="height:33px;display:flex;align-items:center;justify-content:flex-start;color:#000;line-height:16px;padding:0 4px;white-space:nowrap;"></div></div>
<div class="a" style="left:1735px;top:648px;width:49px;height:33px;background:#eef2ea;overflow:hidden"><div style="height:33px;display:flex;align-items:center;justify-content:flex-end;color:#000;line-height:16px;padding:0 4px;white-space:nowrap;"><b style="width:24px"><s>1728</s></b></div></div>
<div class="a" style="left:1785px;top:648px;width:34px;height:33px;background:#eef2ea;overflow:hidden"><div style="height:33px;display:flex;align-items:center;justify-content:flex-start;color:#000;line-height:16px;padding:0 4px;white-space:nowrap;"><b style="width:6px"><s>0</s></b></div></div>
<div class="a" style="left:12px;top:682px;width:48px;height:33px;background:#fefefe;overflow:hidden"><div style="height:33px;display:flex;align-items:center;justify-content:center;color:#000080;line-height:16px;padding:0 4px;white-space:nowrap;"><b style="width:12px"><s>15</s></b></div></div>
<div class="a" style="left:61px;top:682px;width:98px;height:33px;background:#eef2ea;overflow:hidden"><div style="height:33px;display:flex;align-items:center;justify-content:flex-start;color:#000;line-height:16px;padding:0 4px;white-space:nowrap;"><u>李烈峰</u></div></div>
<div class="a" style="left:160px;top:682px;width:65px;height:33px;background:#eef2ea;overflow:hidden"><div style="height:33px;display:flex;align-items:center;justify-content:flex-start;color:#000;line-height:16px;padding:0 4px;white-space:nowrap;"><div><b style="width:30px"><s>53252</s></b></div></div></div>
<div class="a" style="left:226px;top:682px;width:90px;height:33px;background:#eef2ea;overflow:hidden"><div style="height:33px;display:flex;align-items:center;justify-content:flex-start;color:#000;line-height:16px;padding:0 4px;white-space:nowrap;"><b style="width:48px"><s>42654-BL</s></b></div></div>
<div class="a" style="left:317px;top:682px;width:382px;height:33px;background:#b4d8f2;overflow:hidden"><div style="height:33px;display:flex;align-items:center;justify-content:flex-start;color:#000;line-height:16px;padding:0 4px;white-space:nowrap;padding-left:5px"><div><b style="width:6px"><s>1</s></b><u>米</u><b style="width:18px"><s>TPE</s></b><u>线身</u><b style="width:6px"><s>,</s></b><u>金属外壳</u><b style="width:138px"><s>USB&nbsp;A&nbsp;TO&nbsp;LIGHTNING(C89)</s></b><u>数据线</u><b style="width:24px"><s>,USB</s></b><u>和</u><b style="width:48px"><s>Lightnin</s></b><br><b style="width:6px"><s>g</s></b><u>头镭雕客人</u><b style="width:30px"><s>LOGO.</s></b></div></div></div>
<div class="a" style="left:700px;top:682px;width:59px;height:33px;background:#eef2ea;overflow:hidden"><div style="height:33px;display:flex;align-items:center;justify-content:flex-start;color:#000;line-height:16px;padding:0 4px;white-space:nowrap;"><b style="width:24px"><s>1728</s></b></div></div>
<div class="a" style="left:760px;top:682px;width:77px;height:33px;background:#eef2ea;overflow:hidden"><div style="height:33px;display:flex;align-items:center;justify-content:flex-start;color:#000;line-height:16px;padding:0 4px;white-space:nowrap;"><b style="width:60px"><s>2022-04-29</s></b></div></div>
<div class="a" style="left:838px;top:682px;width:27px;height:33px;background:#eef2ea;overflow:hidden"><div style="height:33px;display:flex;align-items:center;justify-content:flex-start;color:#000;line-height:16px;padding:0 4px;white-space:nowrap;"><b style="width:18px"><s>192</s></b></div></div>
<div class="a" style="left:866px;top:682px;width:35px;height:33px;background:#eef2ea;overflow:hidden"><div style="height:33px;display:flex;align-items:center;justify-content:flex-start;color:#000;line-height:16px;padding:0 4px;white-space:nowrap;"><b style="width:6px"><s>9</s></b></div></div>
<div class="a" style="left:902px;top:682px;width:32px;height:33px;background:#eef2ea;overflow:hidden"><div style="height:33px;display:flex;align-items:center;justify-content:flex-start;color:#000;line-height:16px;padding:0 4px;white-space:nowrap;"><b style="width:6px"><s>0</s></b></div></div>
<div class="a" style="left:935px;top:682px;width:39px;height:33px;background:#eef2ea;overflow:hidden"><div style="height:33px;display:flex;align-items:center;justify-content:flex-start;color:#000;line-height:16px;padding:0 4px;white-space:nowrap;"></div></div>
<div class="a" style="left:975px;top:682px;width:37px;height:33px;background:#eef2ea;overflow:hidden"><div style="height:33px;display:flex;align-items:center;justify-content:flex-start;color:#000;line-height:16px;padding:0 4px;white-space:nowrap;"><b style="width:18px"><s>PCS</s></b></div></div>
<div class="a" style="left:1013px;top:682px;width:37px;height:33px;background:#f4fcfd;overflow:hidden"><div style="height:33px;display:flex;align-items:center;justify-content:flex-start;color:#000;line-height:16px;padding:0 4px;white-space:nowrap;"></div></div>
<div class="a" style="left:1051px;top:682px;width:37px;height:33px;background:#f4fcfd;overflow:hidden"><div style="height:33px;display:flex;align-items:center;justify-content:flex-start;color:#000;line-height:16px;padding:0 4px;white-space:nowrap;"></div></div>
<div class="a" style="left:1089px;top:682px;width:37px;height:33px;background:#f4fcfd;overflow:hidden"><div style="height:33px;display:flex;align-items:center;justify-content:flex-start;color:#000;line-height:16px;padding:0 4px;white-space:nowrap;"></div></div>
<div class="a" style="left:1127px;top:682px;width:37px;height:33px;background:#f4fcfd;overflow:hidden"><div style="height:33px;display:flex;align-items:center;justify-content:flex-start;color:#000;line-height:16px;padding:0 4px;white-space:nowrap;"></div></div>
<div class="a" style="left:1165px;top:682px;width:37px;height:33px;background:#f4fcfd;overflow:hidden"><div style="height:33px;display:flex;align-items:center;justify-content:flex-start;color:#000;line-height:16px;padding:0 4px;white-space:nowrap;"></div></div>
<div class="a" style="left:1203px;top:682px;width:37px;height:33px;background:#f4fcfd;overflow:hidden"><div style="height:33px;display:flex;align-items:center;justify-content:flex-start;color:#000;line-height:16px;padding:0 4px;white-space:nowrap;"></div></div>
<div class="a" style="left:1241px;top:682px;width:37px;height:33px;background:#fffd78;overflow:hidden"><div style="height:33px;display:flex;align-items:center;justify-content:flex-start;color:#000;line-height:16px;padding:0 4px;white-space:nowrap;"></div></div>
<div class="a" style="left:1279px;top:682px;width:37px;height:33px;background:#f4fcfd;overflow:hidden"><div style="height:33px;display:flex;align-items:center;justify-content:flex-start;color:#000;line-height:16px;padding:0 4px;white-space:nowrap;"></div></div>
<div class="a" style="left:1317px;top:682px;width:37px;height:33px;background:#f4fcfd;overflow:hidden"><div style="height:33px;display:flex;align-items:center;justify-content:flex-start;color:#000;line-height:16px;padding:0 4px;white-space:nowrap;"></div></div>
<div class="a" style="left:1355px;top:682px;width:37px;height:33px;background:#f4fcfd;overflow:hidden"><div style="height:33px;display:flex;align-items:center;justify-content:flex-start;color:#000;line-height:16px;padding:0 4px;white-space:nowrap;"></div></div>
<div class="a" style="left:1393px;top:682px;width:37px;height:33px;background:#f4fcfd;overflow:hidden"><div style="height:33px;display:flex;align-items:center;justify-content:flex-start;color:#000;line-height:16px;padding:0 4px;white-space:nowrap;"></div></div>
<div class="a" style="left:1431px;top:682px;width:37px;height:33px;background:#f4fcfd;overflow:hidden"><div style="height:33px;display:flex;align-items:center;justify-content:flex-start;color:#000;line-height:16px;padding:0 4px;white-space:nowrap;"></div></div>
<div class="a" style="left:1469px;top:682px;width:37px;height:33px;background:#f4fcfd;overflow:hidden"><div style="height:33px;display:flex;align-items:center;justify-content:flex-start;color:#000;line-height:16px;padding:0 4px;white-space:nowrap;"></div></div>
<div class="a" style="left:1507px;top:682px;width:37px;height:33px;background:#fffd78;overflow:hidden"><div style="height:33px;display:flex;align-items:center;justify-content:flex-start;color:#000;line-height:16px;padding:0 4px;white-space:nowrap;"></div></div>
<div class="a" style="left:1545px;top:682px;width:37px;height:33px;background:#f4fcfd;overflow:hidden"><div style="height:33px;display:flex;align-items:center;justify-content:flex-start;color:#000;line-height:16px;padding:0 4px;white-space:nowrap;"></div></div>
<div class="a" style="left:1583px;top:682px;width:37px;height:33px;background:#f4fcfd;overflow:hidden"><div style="height:33px;display:flex;align-items:center;justify-content:flex-start;color:#000;line-height:16px;padding:0 4px;white-space:nowrap;"></div></div>
<div class="a" style="left:1621px;top:682px;width:63px;height:33px;background:#f4fcfd;overflow:hidden"><div style="height:33px;display:flex;align-items:center;justify-content:flex-start;color:#000;line-height:16px;padding:0 4px;white-space:nowrap;"></div></div>
<div class="a" style="left:1685px;top:682px;width:49px;height:33px;background:#eef2ea;overflow:hidden"><div style="height:33px;display:flex;align-items:center;justify-content:flex-start;color:#000;line-height:16px;padding:0 4px;white-space:nowrap;"></div></div>
<div class="a" style="left:1735px;top:682px;width:49px;height:33px;background:#eef2ea;overflow:hidden"><div style="height:33px;display:flex;align-items:center;justify-content:flex-end;color:#000;line-height:16px;padding:0 4px;white-space:nowrap;"><b style="width:24px"><s>1728</s></b></div></div>
<div class="a" style="left:1785px;top:682px;width:34px;height:33px;background:#eef2ea;overflow:hidden"><div style="height:33px;display:flex;align-items:center;justify-content:flex-start;color:#000;line-height:16px;padding:0 4px;white-space:nowrap;"><b style="width:6px"><s>0</s></b></div></div>
<div class="a" style="left:12px;top:716px;width:48px;height:33px;background:#fefefe;overflow:hidden"><div style="height:33px;display:flex;align-items:center;justify-content:center;color:#000080;line-height:16px;padding:0 4px;white-space:nowrap;"><b style="width:12px"><s>16</s></b></div></div>
<div class="a" style="left:61px;top:716px;width:98px;height:33px;background:#eef2ea;overflow:hidden"><div style="height:33px;display:flex;align-items:center;justify-content:flex-start;color:#000;line-height:16px;padding:0 4px;white-space:nowrap;"><u>李烈峰</u></div></div>
<div class="a" style="left:160px;top:716px;width:65px;height:33px;background:#eef2ea;overflow:hidden"><div style="height:33px;display:flex;align-items:center;justify-content:flex-start;color:#000;line-height:16px;padding:0 4px;white-space:nowrap;"><div><b style="width:54px"><s>400047023</s></b><br><b style="width:6px"><s>8</s></b></div></div></div>
<div class="a" style="left:226px;top:716px;width:90px;height:33px;background:#eef2ea;overflow:hidden"><div style="height:33px;display:flex;align-items:center;justify-content:flex-start;color:#000;line-height:16px;padding:0 4px;white-space:nowrap;"><b style="width:66px"><s>NS-MWC20W1W</s></b></div></div>
<div class="a" style="left:317px;top:716px;width:382px;height:33px;background:#eef2ea;overflow:hidden"><div style="height:33px;display:flex;align-items:center;justify-content:flex-start;color:#000;line-height:16px;padding:0 4px;white-space:nowrap;padding-left:5px"><div><b style="width:24px"><s>MFI&nbsp;</s></b><u>苹果线，</u><b style="width:18px"><s>C94</s></b><u>公</u><b style="width:66px"><s>-USB&nbsp;Type-C</s></b><u>公</u><b style="width:6px"><s>,</s></b><u>灰白棉网，</u><b style="width:36px"><s>L:&nbsp;1.9</s></b><u>米</u></div></div></div>
<div class="a" style="left:700px;top:716px;width:59px;height:33px;background:#eef2ea;overflow:hidden"><div style="height:33px;display:flex;align-items:center;justify-content:flex-start;color:#000;line-height:16px;padding:0 4px;white-space:nowrap;"><b style="width:24px"><s>4008</s></b></div></div>
<div class="a" style="left:760px;top:716px;width:77px;height:33px;background:#eef2ea;overflow:hidden"><div style="height:33px;display:flex;align-items:center;justify-content:flex-start;color:#000;line-height:16px;padding:0 4px;white-space:nowrap;"><b style="width:60px"><s>2022-04-22</s></b></div></div>
<div class="a" style="left:838px;top:716px;width:27px;height:33px;background:#eef2ea;overflow:hidden"><div style="height:33px;display:flex;align-items:center;justify-content:flex-start;color:#000;line-height:16px;padding:0 4px;white-space:nowrap;"><b style="width:6px"><s>1</s></b></div></div>
<div class="a" style="left:866px;top:716px;width:35px;height:33px;background:#eef2ea;overflow:hidden"><div style="height:33px;display:flex;align-items:center;justify-content:flex-start;color:#000;line-height:16px;padding:0 4px;white-space:nowrap;"><b style="width:24px"><s>4008</s></b></div></div>
<div class="a" style="left:902px;top:716px;width:32px;height:33px;background:#eef2ea;overflow:hidden"><div style="height:33px;display:flex;align-items:center;justify-content:flex-start;color:#000;line-height:16px;padding:0 4px;white-space:nowrap;"><b style="width:6px"><s>0</s></b></div></div>
<div class="a" style="left:935px;top:716px;width:39px;height:33px;background:#eef2ea;overflow:hidden"><div style="height:33px;display:flex;align-items:center;justify-content:flex-start;color:#000;line-height:16px;padding:0 4px;white-space:nowrap;"></div></div>
<div class="a" style="left:975px;top:716px;width:37px;height:33px;background:#eef2ea;overflow:hidden"><div style="height:33px;display:flex;align-items:center;justify-content:flex-start;color:#000;line-height:16px;padding:0 4px;white-space:nowrap;"><b style="width:18px"><s>PCS</s></b></div></div>
<div class="a" style="left:1013px;top:716px;width:37px;height:33px;background:#fefefe;overflow:hidden"><div style="height:33px;display:flex;align-items:center;justify-content:flex-start;color:#000;line-height:16px;padding:0 4px;white-space:nowrap;"></div></div>
<div class="a" style="left:1051px;top:716px;width:37px;height:33px;background:#fefefe;overflow:hidden"><div style="height:33px;display:flex;align-items:center;justify-content:flex-start;color:#000;line-height:16px;padding:0 4px;white-space:nowrap;"></div></div>
<div class="a" style="left:1089px;top:716px;width:37px;height:33px;background:#fefefe;overflow:hidden"><div style="height:33px;display:flex;align-items:center;justify-content:flex-start;color:#000;line-height:16px;padding:0 4px;white-space:nowrap;"></div></div>
<div class="a" style="left:1127px;top:716px;width:37px;height:33px;background:#fefefe;overflow:hidden"><div style="height:33px;display:flex;align-items:center;justify-content:flex-start;color:#000;line-height:16px;padding:0 4px;white-space:nowrap;"></div></div>
<div class="a" style="left:1165px;top:716px;width:37px;height:33px;background:#fefefe;overflow:hidden"><div style="height:33px;display:flex;align-items:center;justify-content:flex-start;color:#000;line-height:16px;padding:0 4px;white-space:nowrap;"></div></div>
<div class="a" style="left:1203px;top:716px;width:37px;height:33px;background:#fefefe;overflow:hidden"><div style="height:33px;display:flex;align-items:center;justify-content:flex-start;color:#000;line-height:16px;padding:0 4px;white-space:nowrap;"></div></div>
<div class="a" style="left:1241px;top:716px;width:37px;height:33px;background:#fffd78;overflow:hidden"><div style="height:33px;display:flex;align-items:center;justify-content:flex-start;color:#000;line-height:16px;padding:0 4px;white-space:nowrap;"></div></div>
<div class="a" style="left:1279px;top:716px;width:37px;height:33px;background:#fefefe;overflow:hidden"><div style="height:33px;display:flex;align-items:center;justify-content:flex-start;color:#000;line-height:16px;padding:0 4px;white-space:nowrap;"></div></div>
<div class="a" style="left:1317px;top:716px;width:37px;height:33px;background:#fefefe;overflow:hidden"><div style="height:33px;display:flex;align-items:center;justify-content:flex-start;color:#000;line-height:16px;padding:0 4px;white-space:nowrap;"></div></div>
<div class="a" style="left:1355px;top:716px;width:37px;height:33px;background:#fefefe;overflow:hidden"><div style="height:33px;display:flex;align-items:center;justify-content:flex-start;color:#000;line-height:16px;padding:0 4px;white-space:nowrap;"></div></div>
<div class="a" style="left:1393px;top:716px;width:37px;height:33px;background:#fefefe;overflow:hidden"><div style="height:33px;display:flex;align-items:center;justify-content:flex-start;color:#000;line-height:16px;padding:0 4px;white-space:nowrap;"></div></div>
<div class="a" style="left:1431px;top:716px;width:37px;height:33px;background:#fefefe;overflow:hidden"><div style="height:33px;display:flex;align-items:center;justify-content:flex-start;color:#000;line-height:16px;padding:0 4px;white-space:nowrap;"></div></div>
<div class="a" style="left:1469px;top:716px;width:37px;height:33px;background:#fefefe;overflow:hidden"><div style="height:33px;display:flex;align-items:center;justify-content:flex-start;color:#000;line-height:16px;padding:0 4px;white-space:nowrap;"></div></div>
<div class="a" style="left:1507px;top:716px;width:37px;height:33px;background:#fffd78;overflow:hidden"><div style="height:33px;display:flex;align-items:center;justify-content:flex-start;color:#000;line-height:16px;padding:0 4px;white-space:nowrap;"></div></div>
<div class="a" style="left:1545px;top:716px;width:37px;height:33px;background:#fefefe;overflow:hidden"><div style="height:33px;display:flex;align-items:center;justify-content:flex-start;color:#000;line-height:16px;padding:0 4px;white-space:nowrap;"></div></div>
<div class="a" style="left:1583px;top:716px;width:37px;height:33px;background:#fefefe;overflow:hidden"><div style="height:33px;display:flex;align-items:center;justify-content:flex-start;color:#000;line-height:16px;padding:0 4px;white-space:nowrap;"></div></div>
<div class="a" style="left:1621px;top:716px;width:63px;height:33px;background:#fefefe;overflow:hidden"><div style="height:33px;display:flex;align-items:center;justify-content:flex-start;color:#000;line-height:16px;padding:0 4px;white-space:nowrap;"></div></div>
<div class="a" style="left:1685px;top:716px;width:49px;height:33px;background:#eef2ea;overflow:hidden"><div style="height:33px;display:flex;align-items:center;justify-content:flex-start;color:#000;line-height:16px;padding:0 4px;white-space:nowrap;"></div></div>
<div class="a" style="left:1735px;top:716px;width:49px;height:33px;background:#eef2ea;overflow:hidden"><div style="height:33px;display:flex;align-items:center;justify-content:flex-end;color:#000;line-height:16px;padding:0 4px;white-space:nowrap;"><b style="width:24px"><s>4008</s></b></div></div>
<div class="a" style="left:1785px;top:716px;width:34px;height:33px;background:#eef2ea;overflow:hidden"><div style="height:33px;display:flex;align-items:center;justify-content:flex-start;color:#000;line-height:16px;padding:0 4px;white-space:nowrap;"><b style="width:6px"><s>0</s></b></div></div>
<div class="a" style="left:12px;top:750px;width:48px;height:33px;background:#fefefe;overflow:hidden"><div style="height:33px;display:flex;align-items:center;justify-content:center;color:#000080;line-height:16px;padding:0 4px;white-space:nowrap;"><b style="width:12px"><s>17</s></b></div></div>
<div class="a" style="left:61px;top:750px;width:98px;height:33px;background:#eef2ea;overflow:hidden"><div style="height:33px;display:flex;align-items:center;justify-content:flex-start;color:#000;line-height:16px;padding:0 4px;white-space:nowrap;"><u>李烈峰</u></div></div>
<div class="a" style="left:160px;top:750px;width:65px;height:33px;background:#eef2ea;overflow:hidden"><div style="height:33px;display:flex;align-items:center;justify-content:flex-start;color:#000;line-height:16px;padding:0 4px;white-space:nowrap;"><div><b style="width:54px"><s>400047118</s></b><br><b style="width:36px"><s>1/1182</s></b></div></div></div>
<div class="a" style="left:226px;top:750px;width:90px;height:33px;background:#eef2ea;overflow:hidden"><div style="height:33px;display:flex;align-items:center;justify-content:flex-start;color:#000;line-height:16px;padding:0 4px;white-space:nowrap;"><b style="width:66px"><s>NS-MWC20W1W</s></b></div></div>
<div class="a" style="left:317px;top:750px;width:382px;height:33px;background:#b4d8f2;overflow:hidden"><div style="height:33px;display:flex;align-items:center;justify-content:flex-start;color:#000;line-height:16px;padding:0 4px;white-space:nowrap;padding-left:5px"><div><b style="width:24px"><s>MFI&nbsp;</s></b><u>苹果线，</u><b style="width:18px"><s>C94</s></b><u>公</u><b style="width:66px"><s>-USB&nbsp;Type-C</s></b><u>公</u><b style="width:6px"><s>,</s></b><u>灰白棉网，</u><b style="width:36px"><s>L:&nbsp;1.9</s></b><u>米</u></div></div></div>
<div class="a" style="left:700px;top:750px;width:59px;height:33px;background:#eef2ea;overflow:hidden"><div style="height:33px;display:flex;align-items:center;justify-content:flex-start;color:#000;line-height:16px;padding:0 4px;white-space:nowrap;"><b style="width:24px"><s>1200</s></b></div></div>
<div class="a" style="left:760px;top:750px;width:77px;height:33px;background:#eef2ea;overflow:hidden"><div style="height:33px;display:flex;align-items:center;justify-content:flex-start;color:#000;line-height:16px;padding:0 4px;white-space:nowrap;"><b style="width:60px"><s>2022-04-22</s></b></div></div>
<div class="a" style="left:838px;top:750px;width:27px;height:33px;background:#eef2ea;overflow:hidden"><div style="height:33px;display:flex;align-items:center;justify-content:flex-start;color:#000;line-height:16px;padding:0 4px;white-space:nowrap;"><b style="width:6px"><s>1</s></b></div></div>
<div class="a" style="left:866px;top:750px;width:35px;height:33px;background:#eef2ea;overflow:hidden"><div style="height:33px;display:flex;align-items:center;justify-content:flex-start;color:#000;line-height:16px;padding:0 4px;white-space:nowrap;"><b style="width:24px"><s>1200</s></b></div></div>
<div class="a" style="left:902px;top:750px;width:32px;height:33px;background:#eef2ea;overflow:hidden"><div style="height:33px;display:flex;align-items:center;justify-content:flex-start;color:#000;line-height:16px;padding:0 4px;white-space:nowrap;"><b style="width:6px"><s>0</s></b></div></div>
<div class="a" style="left:935px;top:750px;width:39px;height:33px;background:#eef2ea;overflow:hidden"><div style="height:33px;display:flex;align-items:center;justify-content:flex-start;color:#000;line-height:16px;padding:0 4px;white-space:nowrap;"></div></div>
<div class="a" style="left:975px;top:750px;width:37px;height:33px;background:#eef2ea;overflow:hidden"><div style="height:33px;display:flex;align-items:center;justify-content:flex-start;color:#000;line-height:16px;padding:0 4px;white-space:nowrap;"><b style="width:18px"><s>PCS</s></b></div></div>
<div class="a" style="left:1013px;top:750px;width:37px;height:33px;background:#f4fcfd;overflow:hidden"><div style="height:33px;display:flex;align-items:center;justify-content:flex-start;color:#000;line-height:16px;padding:0 4px;white-space:nowrap;"></div></div>
<div class="a" style="left:1051px;top:750px;width:37px;height:33px;background:#f4fcfd;overflow:hidden"><div style="height:33px;display:flex;align-items:center;justify-content:flex-start;color:#000;line-height:16px;padding:0 4px;white-space:nowrap;"></div></div>
<div class="a" style="left:1089px;top:750px;width:37px;height:33px;background:#f4fcfd;overflow:hidden"><div style="height:33px;display:flex;align-items:center;justify-content:flex-start;color:#000;line-height:16px;padding:0 4px;white-space:nowrap;"></div></div>
<div class="a" style="left:1127px;top:750px;width:37px;height:33px;background:#f4fcfd;overflow:hidden"><div style="height:33px;display:flex;align-items:center;justify-content:flex-start;color:#000;line-height:16px;padding:0 4px;white-space:nowrap;"></div></div>
<div class="a" style="left:1165px;top:750px;width:37px;height:33px;background:#f4fcfd;overflow:hidden"><div style="height:33px;display:flex;align-items:center;justify-content:flex-start;color:#000;line-height:16px;padding:0 4px;white-space:nowrap;"></div></div>
<div class="a" style="left:1203px;top:750px;width:37px;height:33px;background:#f4fcfd;overflow:hidden"><div style="height:33px;display:flex;align-items:center;justify-content:flex-start;color:#000;line-height:16px;padding:0 4px;white-space:nowrap;"></div></div>
<div class="a" style="left:1241px;top:750px;width:37px;height:33px;background:#fffd78;overflow:hidden"><div style="height:33px;display:flex;align-items:center;justify-content:flex-start;color:#000;line-height:16px;padding:0 4px;white-space:nowrap;"></div></div>
<div class="a" style="left:1279px;top:750px;width:37px;height:33px;background:#f4fcfd;overflow:hidden"><div style="height:33px;display:flex;align-items:center;justify-content:flex-start;color:#000;line-height:16px;padding:0 4px;white-space:nowrap;"></div></div>
<div class="a" style="left:1317px;top:750px;width:37px;height:33px;background:#f4fcfd;overflow:hidden"><div style="height:33px;display:flex;align-items:center;justify-content:flex-start;color:#000;line-height:16px;padding:0 4px;white-space:nowrap;"></div></div>
<div class="a" style="left:1355px;top:750px;width:37px;height:33px;background:#f4fcfd;overflow:hidden"><div style="height:33px;display:flex;align-items:center;justify-content:flex-start;color:#000;line-height:16px;padding:0 4px;white-space:nowrap;"></div></div>
<div class="a" style="left:1393px;top:750px;width:37px;height:33px;background:#f4fcfd;overflow:hidden"><div style="height:33px;display:flex;align-items:center;justify-content:flex-start;color:#000;line-height:16px;padding:0 4px;white-space:nowrap;"></div></div>
<div class="a" style="left:1431px;top:750px;width:37px;height:33px;background:#f4fcfd;overflow:hidden"><div style="height:33px;display:flex;align-items:center;justify-content:flex-start;color:#000;line-height:16px;padding:0 4px;white-space:nowrap;"></div></div>
<div class="a" style="left:1469px;top:750px;width:37px;height:33px;background:#f4fcfd;overflow:hidden"><div style="height:33px;display:flex;align-items:center;justify-content:flex-start;color:#000;line-height:16px;padding:0 4px;white-space:nowrap;"></div></div>
<div class="a" style="left:1507px;top:750px;width:37px;height:33px;background:#fffd78;overflow:hidden"><div style="height:33px;display:flex;align-items:center;justify-content:flex-start;color:#000;line-height:16px;padding:0 4px;white-space:nowrap;"></div></div>
<div class="a" style="left:1545px;top:750px;width:37px;height:33px;background:#f4fcfd;overflow:hidden"><div style="height:33px;display:flex;align-items:center;justify-content:flex-start;color:#000;line-height:16px;padding:0 4px;white-space:nowrap;"></div></div>
<div class="a" style="left:1583px;top:750px;width:37px;height:33px;background:#f4fcfd;overflow:hidden"><div style="height:33px;display:flex;align-items:center;justify-content:flex-start;color:#000;line-height:16px;padding:0 4px;white-space:nowrap;"></div></div>
<div class="a" style="left:1621px;top:750px;width:63px;height:33px;background:#f4fcfd;overflow:hidden"><div style="height:33px;display:flex;align-items:center;justify-content:flex-start;color:#000;line-height:16px;padding:0 4px;white-space:nowrap;"></div></div>
<div class="a" style="left:1685px;top:750px;width:49px;height:33px;background:#eef2ea;overflow:hidden"><div style="height:33px;display:flex;align-items:center;justify-content:flex-start;color:#000;line-height:16px;padding:0 4px;white-space:nowrap;"></div></div>
<div class="a" style="left:1735px;top:750px;width:49px;height:33px;background:#eef2ea;overflow:hidden"><div style="height:33px;display:flex;align-items:center;justify-content:flex-end;color:#000;line-height:16px;padding:0 4px;white-space:nowrap;"><b style="width:24px"><s>1200</s></b></div></div>
<div class="a" style="left:1785px;top:750px;width:34px;height:33px;background:#eef2ea;overflow:hidden"><div style="height:33px;display:flex;align-items:center;justify-content:flex-start;color:#000;line-height:16px;padding:0 4px;white-space:nowrap;"><b style="width:6px"><s>0</s></b></div></div>
<div class="a" style="left:12px;top:784px;width:48px;height:23px;background:#fefefe;overflow:hidden"><div style="height:33px;display:flex;align-items:center;justify-content:center;color:#000080;line-height:16px;padding:0 4px;white-space:nowrap;"><b style="width:12px"><s>18</s></b></div></div>
<div class="a" style="left:61px;top:784px;width:98px;height:23px;background:#eef2ea;overflow:hidden"><div style="height:33px;display:flex;align-items:center;justify-content:flex-start;color:#000;line-height:16px;padding:0 4px;white-space:nowrap;"><u>海霖</u></div></div>
<div class="a" style="left:160px;top:784px;width:65px;height:23px;background:#eef2ea;overflow:hidden"><div style="height:33px;display:flex;align-items:center;justify-content:flex-start;color:#000;line-height:16px;padding:0 4px;white-space:nowrap;"><div><b style="width:54px"><s>ALGUS0303</s></b></div></div></div>
<div class="a" style="left:226px;top:784px;width:90px;height:23px;background:#eef2ea;overflow:hidden"><div style="height:33px;display:flex;align-items:center;justify-content:flex-start;color:#000;line-height:16px;padding:0 4px;white-space:nowrap;"><b style="width:60px"><s>ULACMN-SGR</s></b></div></div>
<div class="a" style="left:317px;top:784px;width:382px;height:23px;background:#eef2ea;overflow:hidden"><div style="height:33px;display:flex;align-items:center;justify-content:flex-start;color:#000;line-height:16px;padding:0 4px;white-space:nowrap;padding-left:5px"><div><b style="width:54px"><s>USB&nbsp;3.0&nbsp;A</s></b><u>公</u><b style="width:6px"><s>&nbsp;</s></b><u>对</u><b style="width:36px"><s>&nbsp;USB&nbsp;C</s></b><u>母</u><b style="width:6px"><s>&nbsp;</s></b><u>转接头，铝壳</u><b style="width:24px"><s>+TPE</s></b><u>成型，太空灰</u><b style="width:6px"><s>,</s></b><u>镭雕</u><b style="width:30px"><s>logo,</s></b><br><u>支持</u><b style="width:42px"><s>5Gbps&nbsp;&nbsp;</s></b><u>数据</u><b style="width:30px"><s>5V/3A</s></b><u>供电</u><b style="width:36px"><s>&nbsp;VL160</s></b><u>芯片</u><b style="width:12px"><s>&nbsp;&nbsp;</s></b><u>兼容</u><b style="width:48px"><s>USB2.0&nbsp;&nbsp;</s></b><u>铝吸</u><b style="width:12px"><s>&nbsp;&nbsp;</s></b><u>彩盒包装</u></div></div></div>
<div class="a" style="left:700px;top:784px;width:59px;height:23px;background:#eef2ea;overflow:hidden"><div style="height:33px;display:flex;align-items:center;justify-content:flex-start;color:#000;line-height:16px;padding:0 4px;white-space:nowrap;"><b style="width:18px"><s>240</s></b></div></div>
<div class="a" style="left:760px;top:784px;width:77px;height:23px;background:#eef2ea;overflow:hidden"><div style="height:33px;display:flex;align-items:center;justify-content:flex-start;color:#000;line-height:16px;padding:0 4px;white-space:nowrap;"><b style="width:60px"><s>2022-05-05</s></b></div></div>
<div class="a" style="left:838px;top:784px;width:27px;height:23px;background:#eef2ea;overflow:hidden"><div style="height:33px;display:flex;align-items:center;justify-content:flex-start;color:#000;line-height:16px;padding:0 4px;white-space:nowrap;"><b style="width:18px"><s>240</s></b></div></div>
<div class="a" style="left:866px;top:784px;width:35px;height:23px;background:#eef2ea;overflow:hidden"><div style="height:33px;display:flex;align-items:center;justify-content:flex-start;color:#000;line-height:16px;padding:0 4px;white-space:nowrap;"><b style="width:6px"><s>1</s></b></div></div>
<div class="a" style="left:902px;top:784px;width:32px;height:23px;background:#eef2ea;overflow:hidden"><div style="height:33px;display:flex;align-items:center;justify-content:flex-start;color:#000;line-height:16px;padding:0 4px;white-space:nowrap;"><b style="width:6px"><s>0</s></b></div></div>
<div class="a" style="left:935px;top:784px;width:39px;height:23px;background:#eef2ea;overflow:hidden"><div style="height:33px;display:flex;align-items:center;justify-content:flex-start;color:#000;line-height:16px;padding:0 4px;white-space:nowrap;"></div></div>
<div class="a" style="left:975px;top:784px;width:37px;height:23px;background:#eef2ea;overflow:hidden"><div style="height:33px;display:flex;align-items:center;justify-content:flex-start;color:#000;line-height:16px;padding:0 4px;white-space:nowrap;"><b style="width:18px"><s>PCS</s></b></div></div>
<div class="a" style="left:1013px;top:784px;width:37px;height:23px;background:#fefefe;overflow:hidden"><div style="height:33px;display:flex;align-items:center;justify-content:flex-start;color:#000;line-height:16px;padding:0 4px;white-space:nowrap;"></div></div>
<div class="a" style="left:1051px;top:784px;width:37px;height:23px;background:#fefefe;overflow:hidden"><div style="height:33px;display:flex;align-items:center;justify-content:flex-start;color:#000;line-height:16px;padding:0 4px;white-space:nowrap;"></div></div>
<div class="a" style="left:1089px;top:784px;width:37px;height:23px;background:#fefefe;overflow:hidden"><div style="height:33px;display:flex;align-items:center;justify-content:flex-start;color:#000;line-height:16px;padding:0 4px;white-space:nowrap;"></div></div>
<div class="a" style="left:1127px;top:784px;width:37px;height:23px;background:#fefefe;overflow:hidden"><div style="height:33px;display:flex;align-items:center;justify-content:flex-start;color:#000;line-height:16px;padding:0 4px;white-space:nowrap;"></div></div>
<div class="a" style="left:1165px;top:784px;width:37px;height:23px;background:#fefefe;overflow:hidden"><div style="height:33px;display:flex;align-items:center;justify-content:flex-start;color:#000;line-height:16px;padding:0 4px;white-space:nowrap;"></div></div>
<div class="a" style="left:1203px;top:784px;width:37px;height:23px;background:#fefefe;overflow:hidden"><div style="height:33px;display:flex;align-items:center;justify-content:flex-start;color:#000;line-height:16px;padding:0 4px;white-space:nowrap;"></div></div>
<div class="a" style="left:1241px;top:784px;width:37px;height:23px;background:#fffd78;overflow:hidden"><div style="height:33px;display:flex;align-items:center;justify-content:flex-start;color:#000;line-height:16px;padding:0 4px;white-space:nowrap;"></div></div>
<div class="a" style="left:1279px;top:784px;width:37px;height:23px;background:#fefefe;overflow:hidden"><div style="height:33px;display:flex;align-items:center;justify-content:flex-start;color:#000;line-height:16px;padding:0 4px;white-space:nowrap;"></div></div>
<div class="a" style="left:1317px;top:784px;width:37px;height:23px;background:#fefefe;overflow:hidden"><div style="height:33px;display:flex;align-items:center;justify-content:flex-start;color:#000;line-height:16px;padding:0 4px;white-space:nowrap;"></div></div>
<div class="a" style="left:1355px;top:784px;width:37px;height:23px;background:#fefefe;overflow:hidden"><div style="height:33px;display:flex;align-items:center;justify-content:flex-start;color:#000;line-height:16px;padding:0 4px;white-space:nowrap;"></div></div>
<div class="a" style="left:1393px;top:784px;width:37px;height:23px;background:#fefefe;overflow:hidden"><div style="height:33px;display:flex;align-items:center;justify-content:flex-start;color:#000;line-height:16px;padding:0 4px;white-space:nowrap;"></div></div>
<div class="a" style="left:1431px;top:784px;width:37px;height:23px;background:#fefefe;overflow:hidden"><div style="height:33px;display:flex;align-items:center;justify-content:flex-start;color:#000;line-height:16px;padding:0 4px;white-space:nowrap;"></div></div>
<div class="a" style="left:1469px;top:784px;width:37px;height:23px;background:#fefefe;overflow:hidden"><div style="height:33px;display:flex;align-items:center;justify-content:flex-start;color:#000;line-height:16px;padding:0 4px;white-space:nowrap;"></div></div>
<div class="a" style="left:1507px;top:784px;width:37px;height:23px;background:#fffd78;overflow:hidden"><div style="height:33px;display:flex;align-items:center;justify-content:flex-start;color:#000;line-height:16px;padding:0 4px;white-space:nowrap;"></div></div>
<div class="a" style="left:1545px;top:784px;width:37px;height:23px;background:#fefefe;overflow:hidden"><div style="height:33px;display:flex;align-items:center;justify-content:flex-start;color:#000;line-height:16px;padding:0 4px;white-space:nowrap;"></div></div>
<div class="a" style="left:1583px;top:784px;width:37px;height:23px;background:#fefefe;overflow:hidden"><div style="height:33px;display:flex;align-items:center;justify-content:flex-start;color:#000;line-height:16px;padding:0 4px;white-space:nowrap;"></div></div>
<div class="a" style="left:1621px;top:784px;width:63px;height:23px;background:#fefefe;overflow:hidden"><div style="height:33px;display:flex;align-items:center;justify-content:flex-start;color:#000;line-height:16px;padding:0 4px;white-space:nowrap;"><u>来料包装</u></div></div>
<div class="a" style="left:1685px;top:784px;width:49px;height:23px;background:#eef2ea;overflow:hidden"><div style="height:33px;display:flex;align-items:center;justify-content:flex-start;color:#000;line-height:16px;padding:0 4px;white-space:nowrap;"></div></div>
<div class="a" style="left:1735px;top:784px;width:49px;height:23px;background:#eef2ea;overflow:hidden"><div style="height:33px;display:flex;align-items:center;justify-content:flex-end;color:#000;line-height:16px;padding:0 4px;white-space:nowrap;"><b style="width:18px"><s>240</s></b></div></div>
<div class="a" style="left:1785px;top:784px;width:34px;height:23px;background:#eef2ea;overflow:hidden"><div style="height:33px;display:flex;align-items:center;justify-content:flex-start;color:#000;line-height:16px;padding:0 4px;white-space:nowrap;"><b style="width:6px"><s>0</s></b></div></div>
<div class="a" style="left:12px;top:808px;width:48px;height:23px;background:#f6e4ee;overflow:hidden"><div style="height:23px;display:flex;align-items:center;justify-content:flex-start;color:#000;line-height:16px;padding:0 4px;white-space:nowrap;"></div></div>
<div class="a" style="left:61px;top:808px;width:98px;height:23px;background:#eef2ea;overflow:hidden"><div style="height:23px;display:flex;align-items:center;justify-content:flex-start;color:#000;line-height:16px;padding:0 4px;white-space:nowrap;"><u>合计</u><i class="ns" style="margin-left:10px;font-size:11px">23</i></div></div>
<div class="a" style="left:160px;top:808px;width:65px;height:23px;background:#eef2ea;overflow:hidden"><div style="height:23px;display:flex;align-items:center;justify-content:flex-start;color:#000;line-height:16px;padding:0 4px;white-space:nowrap;"></div></div>
<div class="a" style="left:226px;top:808px;width:90px;height:23px;background:#eef2ea;overflow:hidden"><div style="height:23px;display:flex;align-items:center;justify-content:flex-start;color:#000;line-height:16px;padding:0 4px;white-space:nowrap;"></div></div>
<div class="a" style="left:317px;top:808px;width:382px;height:23px;background:#eef2ea;overflow:hidden"><div style="height:23px;display:flex;align-items:center;justify-content:flex-start;color:#000;line-height:16px;padding:0 4px;white-space:nowrap;"></div></div>
<div class="a" style="left:700px;top:808px;width:59px;height:23px;background:#eef2ea;overflow:hidden"><div style="height:23px;display:flex;align-items:center;justify-content:flex-start;color:#000;line-height:16px;padding:0 4px;white-space:nowrap;"><b style="width:30px"><s>39736</s></b></div></div>
<div class="a" style="left:760px;top:808px;width:77px;height:23px;background:#eef2ea;overflow:hidden"><div style="height:23px;display:flex;align-items:center;justify-content:flex-start;color:#000;line-height:16px;padding:0 4px;white-space:nowrap;"></div></div>
<div class="a" style="left:838px;top:808px;width:27px;height:23px;background:#eef2ea;overflow:hidden"><div style="height:23px;display:flex;align-items:center;justify-content:flex-start;color:#000;line-height:16px;padding:0 4px;white-space:nowrap;"></div></div>
<div class="a" style="left:866px;top:808px;width:35px;height:23px;background:#eef2ea;overflow:hidden"><div style="height:23px;display:flex;align-items:center;justify-content:flex-start;color:#000;line-height:16px;padding:0 4px;white-space:nowrap;"></div></div>
<div class="a" style="left:902px;top:808px;width:32px;height:23px;background:#eef2ea;overflow:hidden"><div style="height:23px;display:flex;align-items:center;justify-content:flex-start;color:#000;line-height:16px;padding:0 4px;white-space:nowrap;"></div></div>
<div class="a" style="left:935px;top:808px;width:39px;height:23px;background:#eef2ea;overflow:hidden"><div style="height:23px;display:flex;align-items:center;justify-content:flex-start;color:#000;line-height:16px;padding:0 4px;white-space:nowrap;"><b style="width:6px"><s>0</s></b></div></div>
<div class="a" style="left:975px;top:808px;width:37px;height:23px;background:#eef2ea;overflow:hidden"><div style="height:23px;display:flex;align-items:center;justify-content:flex-start;color:#000;line-height:16px;padding:0 4px;white-space:nowrap;"></div></div>
<div class="a" style="left:1013px;top:808px;width:37px;height:23px;background:#eef2ea;overflow:hidden"><div style="height:23px;display:flex;align-items:center;justify-content:flex-end;color:#000;line-height:16px;padding:0 4px;white-space:nowrap;"><b style="width:6px"><s>0</s></b></div></div>
<div class="a" style="left:1051px;top:808px;width:37px;height:23px;background:#eef2ea;overflow:hidden"><div style="height:23px;display:flex;align-items:center;justify-content:flex-end;color:#000;line-height:16px;padding:0 4px;white-space:nowrap;"><b style="width:6px"><s>0</s></b></div></div>
<div class="a" style="left:1089px;top:808px;width:37px;height:23px;background:#eef2ea;overflow:hidden"><div style="height:23px;display:flex;align-items:center;justify-content:flex-end;color:#000;line-height:16px;padding:0 4px;white-space:nowrap;"><b style="width:6px"><s>0</s></b></div></div>
<div class="a" style="left:1127px;top:808px;width:37px;height:23px;background:#eef2ea;overflow:hidden"><div style="height:23px;display:flex;align-items:center;justify-content:flex-end;color:#000;line-height:16px;padding:0 4px;white-space:nowrap;"><b style="width:6px"><s>0</s></b></div></div>
<div class="a" style="left:1165px;top:808px;width:37px;height:23px;background:#eef2ea;overflow:hidden"><div style="height:23px;display:flex;align-items:center;justify-content:flex-end;color:#000;line-height:16px;padding:0 4px;white-space:nowrap;"><b style="width:6px"><s>0</s></b></div></div>
<div class="a" style="left:1203px;top:808px;width:37px;height:23px;background:#eef2ea;overflow:hidden"><div style="height:23px;display:flex;align-items:center;justify-content:flex-end;color:#000;line-height:16px;padding:0 4px;white-space:nowrap;"><b style="width:6px"><s>0</s></b></div></div>
<div class="a" style="left:1241px;top:808px;width:37px;height:23px;background:#eef2ea;overflow:hidden"><div style="height:23px;display:flex;align-items:center;justify-content:flex-end;color:#000;line-height:16px;padding:0 4px;white-space:nowrap;"><b style="width:6px"><s>0</s></b></div></div>
<div class="a" style="left:1279px;top:808px;width:37px;height:23px;background:#eef2ea;overflow:hidden"><div style="height:23px;display:flex;align-items:center;justify-content:flex-end;color:#000;line-height:16px;padding:0 4px;white-space:nowrap;"><b style="width:6px"><s>0</s></b></div></div>
<div class="a" style="left:1317px;top:808px;width:37px;height:23px;background:#eef2ea;overflow:hidden"><div style="height:23px;display:flex;align-items:center;justify-content:flex-end;color:#000;line-height:16px;padding:0 4px;white-space:nowrap;"><b style="width:6px"><s>0</s></b></div></div>
<div class="a" style="left:1355px;top:808px;width:37px;height:23px;background:#eef2ea;overflow:hidden"><div style="height:23px;display:flex;align-items:center;justify-content:flex-end;color:#000;line-height:16px;padding:0 4px;white-space:nowrap;"><b style="width:6px"><s>0</s></b></div></div>
<div class="a" style="left:1393px;top:808px;width:37px;height:23px;background:#eef2ea;overflow:hidden"><div style="height:23px;display:flex;align-items:center;justify-content:flex-end;color:#000;line-height:16px;padding:0 4px;white-space:nowrap;"><b style="width:6px"><s>0</s></b></div></div>
<div class="a" style="left:1431px;top:808px;width:37px;height:23px;background:#eef2ea;overflow:hidden"><div style="height:23px;display:flex;align-items:center;justify-content:flex-end;color:#000;line-height:16px;padding:0 4px;white-space:nowrap;"><b style="width:6px"><s>0</s></b></div></div>
<div class="a" style="left:1469px;top:808px;width:37px;height:23px;background:#eef2ea;overflow:hidden"><div style="height:23px;display:flex;align-items:center;justify-content:flex-end;color:#000;line-height:16px;padding:0 4px;white-space:nowrap;"><b style="width:6px"><s>0</s></b></div></div>
<div class="a" style="left:1507px;top:808px;width:37px;height:23px;background:#eef2ea;overflow:hidden"><div style="height:23px;display:flex;align-items:center;justify-content:flex-end;color:#000;line-height:16px;padding:0 4px;white-space:nowrap;"><b style="width:6px"><s>0</s></b></div></div>
<div class="a" style="left:1545px;top:808px;width:37px;height:23px;background:#eef2ea;overflow:hidden"><div style="height:23px;display:flex;align-items:center;justify-content:flex-end;color:#000;line-height:16px;padding:0 4px;white-space:nowrap;"><b style="width:6px"><s>0</s></b></div></div>
<div class="a" style="left:1583px;top:808px;width:37px;height:23px;background:#eef2ea;overflow:hidden"><div style="height:23px;display:flex;align-items:center;justify-content:flex-end;color:#000;line-height:16px;padding:0 4px;white-space:nowrap;"><b style="width:6px"><s>0</s></b></div></div>
<div class="a" style="left:1621px;top:808px;width:63px;height:23px;background:#fefefe;overflow:hidden"><div style="height:23px;display:flex;align-items:center;justify-content:flex-start;color:#000;line-height:16px;padding:0 4px;white-space:nowrap;"></div></div>
<div class="a" style="left:1685px;top:808px;width:49px;height:23px;background:#eef2ea;overflow:hidden"><div style="height:23px;display:flex;align-items:center;justify-content:flex-start;color:#000;line-height:16px;padding:0 4px;white-space:nowrap;"><b style="width:6px"><s>0</s></b></div></div>
<div class="a" style="left:1735px;top:808px;width:49px;height:23px;background:#eef2ea;overflow:hidden"><div style="height:23px;display:flex;align-items:center;justify-content:flex-end;color:#000;line-height:16px;padding:0 4px;white-space:nowrap;"><b style="width:30px"><s>39736</s></b></div></div>
<div class="a" style="left:1785px;top:808px;width:34px;height:23px;background:#eef2ea;overflow:hidden"><div style="height:23px;display:flex;align-items:center;justify-content:flex-start;color:#000;line-height:16px;padding:0 4px;white-space:nowrap;"><b style="width:6px"><s>0</s></b></div></div>
<div class="a" style="left:67px;top:134px;width:52px;height:28px;border:3px solid #ff1c12;border-radius:5px"></div>
<div class="a" style="left:305px;top:127px;width:49px;height:37px;border:3px solid #ff1c12;border-radius:5px"></div>
<div class="a" style="left:1235.5px;top:168px;width:52px;height:660px;border:4px solid #ff1c12;border-radius:6px"></div>
<div class="a" style="left:1502.5px;top:163px;width:54px;height:674px;border:4px solid #ff1c12;border-radius:6px"></div></body></html>
